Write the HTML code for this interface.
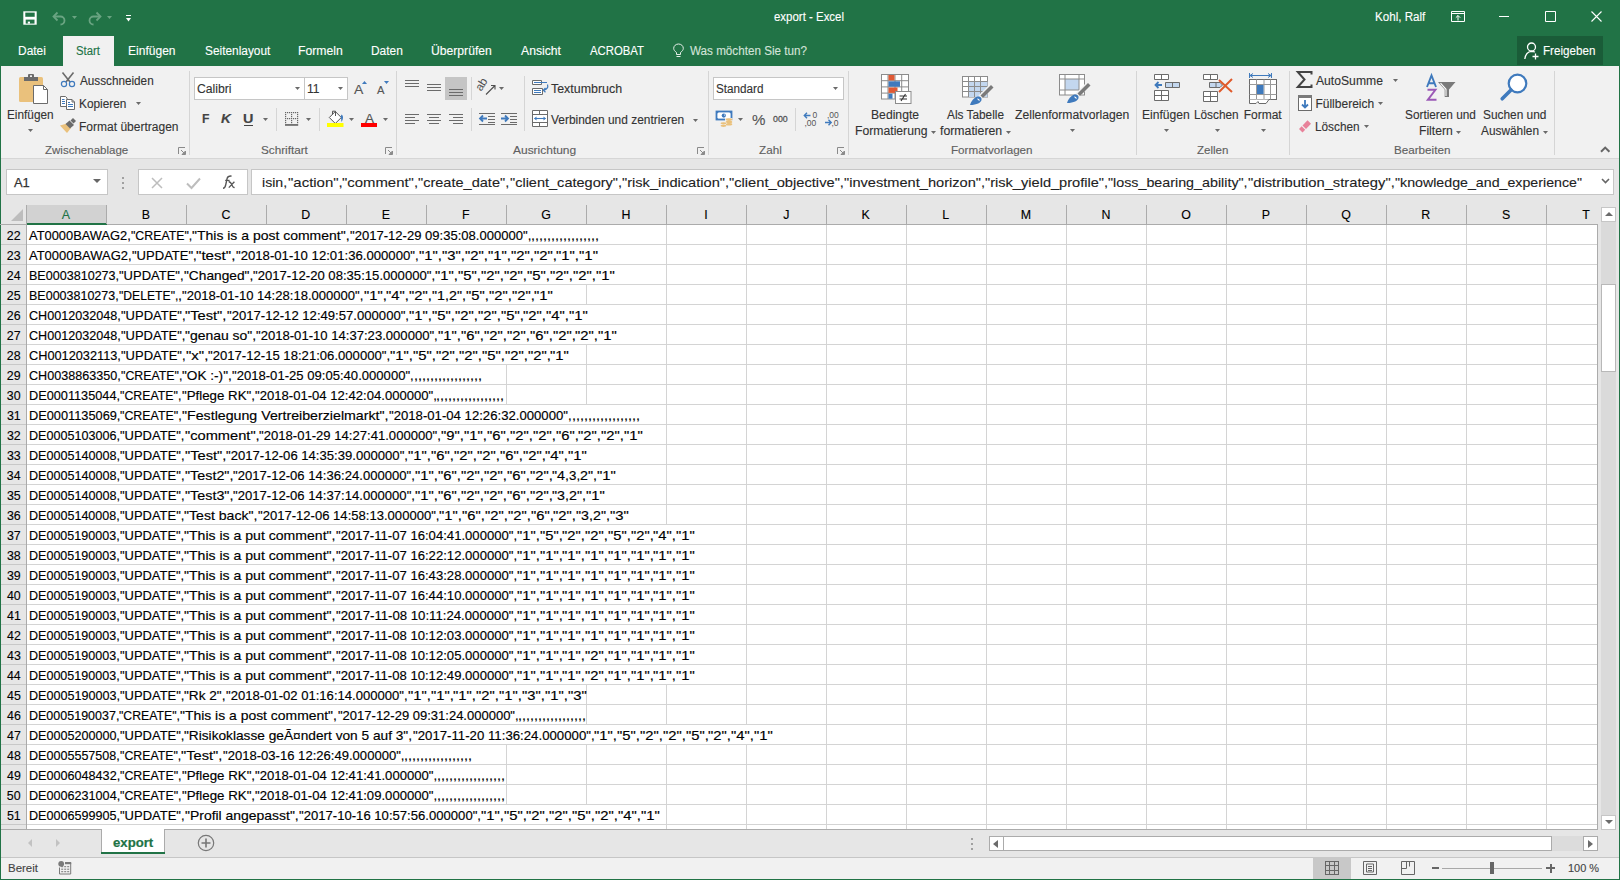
<!DOCTYPE html>
<html><head><meta charset="utf-8"><title>export - Excel</title>
<style>
html,body{margin:0;padding:0;}
body{width:1620px;height:880px;position:relative;overflow:hidden;background:#ffffff;font-family:'Liberation Sans', sans-serif;}
span{white-space:pre;transform-origin:0 0;}
svg{overflow:visible;}
</style></head><body>
<div style="position:absolute;left:0px;top:0px;width:1620px;height:66px;background:#217346;"></div>
<div style="position:absolute;left:1px;top:66px;width:1618px;height:92px;background:#f1f1f1;"></div>
<div style="position:absolute;left:1px;top:158px;width:1618px;height:1px;background:#d6d6d6;"></div>
<div style="position:absolute;left:1px;top:159px;width:1618px;height:46px;background:#e6e6e6;"></div>
<div style="position:absolute;left:0px;top:205px;width:1620px;height:675px;background:#e6e6e6;"></div>
<div style="position:absolute;left:27px;top:225px;width:1570px;height:604px;background:#ffffff;"></div>
<div style="position:absolute;left:0px;top:0px;width:1px;height:880px;background:#217346;"></div>
<div style="position:absolute;left:1619px;top:0px;width:1px;height:880px;background:#217346;"></div>
<div style="position:absolute;left:0px;top:879px;width:1620px;height:1px;background:#217346;"></div>
<span style="position:absolute;left:774.04px;top:11.00px;font-size:12px;line-height:12px;color:#ffffff;transform:scaleX(0.9544);-webkit-text-stroke:0.12px #ffffff;">export - Excel</span>
<span style="position:absolute;left:1374.69px;top:11.00px;font-size:12px;line-height:12px;color:#ffffff;transform:scaleX(0.9662);-webkit-text-stroke:0.12px #ffffff;">Kohl, Ralf</span>
<div style="position:absolute;left:63px;top:36px;width:51px;height:30px;background:#f1f1f1;"></div>
<span style="position:absolute;left:17.57px;top:45.00px;font-size:12.5px;line-height:12.5px;color:#ffffff;transform:scaleX(0.9569);-webkit-text-stroke:0.12px #ffffff;">Datei</span>
<span style="position:absolute;left:75.85px;top:45.00px;font-size:12.5px;line-height:12.5px;color:#217346;transform:scaleX(0.9060);-webkit-text-stroke:0.12px #217346;">Start</span>
<span style="position:absolute;left:128.46px;top:45.00px;font-size:12.5px;line-height:12.5px;color:#ffffff;transform:scaleX(0.9629);-webkit-text-stroke:0.12px #ffffff;">Einfügen</span>
<span style="position:absolute;left:204.63px;top:45.00px;font-size:12.5px;line-height:12.5px;color:#ffffff;transform:scaleX(0.9496);-webkit-text-stroke:0.12px #ffffff;">Seitenlayout</span>
<span style="position:absolute;left:298.34px;top:45.00px;font-size:12.5px;line-height:12.5px;color:#ffffff;transform:scaleX(0.9781);-webkit-text-stroke:0.12px #ffffff;">Formeln</span>
<span style="position:absolute;left:371.37px;top:45.00px;font-size:12.5px;line-height:12.5px;color:#ffffff;transform:scaleX(0.9534);-webkit-text-stroke:0.12px #ffffff;">Daten</span>
<span style="position:absolute;left:431.44px;top:45.00px;font-size:12.5px;line-height:12.5px;color:#ffffff;transform:scaleX(0.9729);-webkit-text-stroke:0.12px #ffffff;">Überprüfen</span>
<span style="position:absolute;left:521.00px;top:45.00px;font-size:12.5px;line-height:12.5px;color:#ffffff;transform:scaleX(0.9748);-webkit-text-stroke:0.12px #ffffff;">Ansicht</span>
<span style="position:absolute;left:590.00px;top:45.00px;font-size:12.5px;line-height:12.5px;color:#ffffff;transform:scaleX(0.9058);-webkit-text-stroke:0.12px #ffffff;">ACROBAT</span>
<span style="position:absolute;left:690.20px;top:45.00px;font-size:12.5px;line-height:12.5px;color:#d3e3d9;transform:scaleX(0.9337);-webkit-text-stroke:0.12px #d3e3d9;">Was möchten Sie tun?</span>
<div style="position:absolute;left:1517px;top:36px;width:86px;height:29px;background:#1a5c38;"></div>
<span style="position:absolute;left:1542.59px;top:45.00px;font-size:12.5px;line-height:12.5px;color:#ffffff;transform:scaleX(0.9303);-webkit-text-stroke:0.12px #ffffff;">Freigeben</span>
<div style="position:absolute;left:189px;top:71px;width:1px;height:84px;background:#d5d5d5;"></div>
<div style="position:absolute;left:396px;top:71px;width:1px;height:84px;background:#d5d5d5;"></div>
<div style="position:absolute;left:708px;top:71px;width:1px;height:84px;background:#d5d5d5;"></div>
<div style="position:absolute;left:848px;top:71px;width:1px;height:84px;background:#d5d5d5;"></div>
<div style="position:absolute;left:1136px;top:71px;width:1px;height:84px;background:#d5d5d5;"></div>
<div style="position:absolute;left:1289px;top:71px;width:1px;height:84px;background:#d5d5d5;"></div>
<div style="position:absolute;left:1554px;top:71px;width:1px;height:84px;background:#d5d5d5;"></div>
<span style="position:absolute;left:44.64px;top:145.00px;font-size:11px;line-height:11px;color:#606060;transform:scaleX(1.0470);-webkit-text-stroke:0.12px #606060;">Zwischenablage</span>
<span style="position:absolute;left:261.13px;top:145.00px;font-size:11px;line-height:11px;color:#606060;transform:scaleX(1.0640);-webkit-text-stroke:0.12px #606060;">Schriftart</span>
<span style="position:absolute;left:513.00px;top:145.00px;font-size:11px;line-height:11px;color:#606060;transform:scaleX(1.0875);-webkit-text-stroke:0.12px #606060;">Ausrichtung</span>
<span style="position:absolute;left:758.63px;top:145.00px;font-size:11px;line-height:11px;color:#606060;transform:scaleX(1.0625);-webkit-text-stroke:0.12px #606060;">Zahl</span>
<span style="position:absolute;left:951.49px;top:145.00px;font-size:11px;line-height:11px;color:#606060;transform:scaleX(1.0588);-webkit-text-stroke:0.12px #606060;">Formatvorlagen</span>
<span style="position:absolute;left:1196.84px;top:145.00px;font-size:11px;line-height:11px;color:#606060;transform:scaleX(1.0483);-webkit-text-stroke:0.12px #606060;">Zellen</span>
<span style="position:absolute;left:1393.69px;top:145.00px;font-size:11px;line-height:11px;color:#606060;transform:scaleX(1.0594);-webkit-text-stroke:0.12px #606060;">Bearbeiten</span>
<span style="position:absolute;left:7.08px;top:109.00px;font-size:12px;line-height:12px;color:#333333;transform:scaleX(0.9834);-webkit-text-stroke:0.12px #333333;">Einfügen</span>
<span style="position:absolute;left:79.50px;top:75.00px;font-size:12px;line-height:12px;color:#333333;transform:scaleX(0.9771);-webkit-text-stroke:0.12px #333333;">Ausschneiden</span>
<span style="position:absolute;left:78.58px;top:98.00px;font-size:12px;line-height:12px;color:#333333;transform:scaleX(0.9866);-webkit-text-stroke:0.12px #333333;">Kopieren</span>
<span style="position:absolute;left:78.56px;top:121.00px;font-size:12px;line-height:12px;color:#333333;transform:scaleX(1.0013);-webkit-text-stroke:0.12px #333333;">Format übertragen</span>
<div style="position:absolute;left:194px;top:77px;width:111px;height:23px;box-sizing:border-box;border:1px solid #c6c6c6;background:#ffffff;"></div>
<div style="position:absolute;left:304px;top:77px;width:44px;height:23px;box-sizing:border-box;border:1px solid #c6c6c6;background:#ffffff;"></div>
<span style="position:absolute;left:197.13px;top:83.00px;font-size:12px;line-height:12px;color:#333333;transform:scaleX(1.0167);-webkit-text-stroke:0.12px #333333;">Calibri</span>
<span style="position:absolute;left:306.74px;top:83.00px;font-size:12px;line-height:12px;color:#333333;transform:scaleX(1.0071);-webkit-text-stroke:0.12px #333333;">11</span>
<span style="position:absolute;left:551.31px;top:83.00px;font-size:12px;line-height:12px;color:#333333;transform:scaleX(1.0349);-webkit-text-stroke:0.12px #333333;">Textumbruch</span>
<span style="position:absolute;left:551.00px;top:114.00px;font-size:12px;line-height:12px;color:#333333;transform:scaleX(0.9931);-webkit-text-stroke:0.12px #333333;">Verbinden und zentrieren</span>
<div style="position:absolute;left:713px;top:77px;width:131px;height:23px;box-sizing:border-box;border:1px solid #c6c6c6;background:#ffffff;"></div>
<span style="position:absolute;left:715.93px;top:83.00px;font-size:12px;line-height:12px;color:#333333;transform:scaleX(0.9758);-webkit-text-stroke:0.12px #333333;">Standard</span>
<span style="position:absolute;left:871.45px;top:109.00px;font-size:12px;line-height:12px;color:#333333;transform:scaleX(1.0142);-webkit-text-stroke:0.12px #333333;">Bedingte</span>
<span style="position:absolute;left:854.65px;top:125.00px;font-size:12px;line-height:12px;color:#333333;transform:scaleX(1.0165);-webkit-text-stroke:0.12px #333333;">Formatierung</span>
<span style="position:absolute;left:947.20px;top:109.00px;font-size:12px;line-height:12px;color:#333333;transform:scaleX(0.9853);-webkit-text-stroke:0.12px #333333;">Als Tabelle</span>
<span style="position:absolute;left:940.00px;top:125.00px;font-size:12px;line-height:12px;color:#333333;transform:scaleX(1.0247);-webkit-text-stroke:0.12px #333333;">formatieren</span>
<span style="position:absolute;left:1014.62px;top:109.00px;font-size:12px;line-height:12px;color:#333333;transform:scaleX(1.0146);-webkit-text-stroke:0.12px #333333;">Zellenformatvorlagen</span>
<span style="position:absolute;left:1142.46px;top:109.00px;font-size:12px;line-height:12px;color:#333333;transform:scaleX(1.0074);-webkit-text-stroke:0.12px #333333;">Einfügen</span>
<span style="position:absolute;left:1194.48px;top:109.00px;font-size:12px;line-height:12px;color:#333333;transform:scaleX(0.9827);-webkit-text-stroke:0.12px #333333;">Löschen</span>
<span style="position:absolute;left:1243.66px;top:109.00px;font-size:12px;line-height:12px;color:#333333;-webkit-text-stroke:0.12px #333333;">Format</span>
<span style="position:absolute;left:1316.40px;top:75.00px;font-size:12px;line-height:12px;color:#333333;transform:scaleX(1.0131);-webkit-text-stroke:0.12px #333333;">AutoSumme</span>
<span style="position:absolute;left:1315.46px;top:98.00px;font-size:12px;line-height:12px;color:#333333;-webkit-text-stroke:0.12px #333333;">Füllbereich</span>
<span style="position:absolute;left:1315.48px;top:121.00px;font-size:12px;line-height:12px;color:#333333;transform:scaleX(0.9827);-webkit-text-stroke:0.12px #333333;">Löschen</span>
<span style="position:absolute;left:1404.93px;top:109.00px;font-size:12px;line-height:12px;color:#333333;transform:scaleX(0.9845);-webkit-text-stroke:0.12px #333333;">Sortieren und</span>
<span style="position:absolute;left:1419.45px;top:125.00px;font-size:12px;line-height:12px;color:#333333;transform:scaleX(1.0117);-webkit-text-stroke:0.12px #333333;">Filtern</span>
<span style="position:absolute;left:1482.73px;top:109.00px;font-size:12px;line-height:12px;color:#333333;transform:scaleX(0.9904);-webkit-text-stroke:0.12px #333333;">Suchen und</span>
<span style="position:absolute;left:1481.00px;top:125.00px;font-size:12px;line-height:12px;color:#333333;transform:scaleX(0.9874);-webkit-text-stroke:0.12px #333333;">Auswählen</span>
<div style="position:absolute;left:6px;top:169px;width:102px;height:26px;box-sizing:border-box;border:1px solid #c6c6c6;background:#ffffff;"></div>
<span style="position:absolute;left:13.60px;top:177.00px;font-size:12.4px;line-height:12.4px;color:#333333;transform:scaleX(1.0433);-webkit-text-stroke:0.25px #333333;">A1</span>
<div style="position:absolute;left:138px;top:169px;width:110px;height:26px;box-sizing:border-box;border:1px solid #c6c6c6;background:#ffffff;"></div>
<div style="position:absolute;left:251px;top:169px;width:1363px;height:26px;box-sizing:border-box;border:1px solid #c6c6c6;background:#ffffff;"></div>
<span style="position:absolute;left:262.30px;top:177.00px;font-size:12.4px;line-height:12.4px;color:#222222;transform:scaleX(1.1430);-webkit-text-stroke:0.1px #222222;">isin,</span>
<span style="position:absolute;left:287.50px;top:177.00px;font-size:12.4px;line-height:12.4px;color:#222222;transform:scaleX(1.2083);-webkit-text-stroke:0.1px #222222;">&quot;action&quot;,</span>
<span style="position:absolute;left:342.28px;top:177.00px;font-size:12.4px;line-height:12.4px;color:#222222;transform:scaleX(1.2031);-webkit-text-stroke:0.1px #222222;">&quot;comment&quot;,</span>
<span style="position:absolute;left:418.37px;top:177.00px;font-size:12.4px;line-height:12.4px;color:#222222;transform:scaleX(1.1736);-webkit-text-stroke:0.1px #222222;">&quot;create_date&quot;,</span>
<span style="position:absolute;left:509.61px;top:177.00px;font-size:12.4px;line-height:12.4px;color:#222222;transform:scaleX(1.1717);-webkit-text-stroke:0.1px #222222;">&quot;client_category&quot;,</span>
<span style="position:absolute;left:621.68px;top:177.00px;font-size:12.4px;line-height:12.4px;color:#222222;transform:scaleX(1.1797);-webkit-text-stroke:0.1px #222222;">&quot;risk_indication&quot;,</span>
<span style="position:absolute;left:728.82px;top:177.00px;font-size:12.4px;line-height:12.4px;color:#222222;transform:scaleX(1.1855);-webkit-text-stroke:0.1px #222222;">&quot;client_objective&quot;,</span>
<span style="position:absolute;left:843.85px;top:177.00px;font-size:12.4px;line-height:12.4px;color:#222222;transform:scaleX(1.1784);-webkit-text-stroke:0.1px #222222;">&quot;investment_horizon&quot;,</span>
<span style="position:absolute;left:985.00px;top:177.00px;font-size:12.4px;line-height:12.4px;color:#222222;transform:scaleX(1.1775);-webkit-text-stroke:0.1px #222222;">&quot;risk_yield_profile&quot;,</span>
<span style="position:absolute;left:1108.16px;top:177.00px;font-size:12.4px;line-height:12.4px;color:#222222;transform:scaleX(1.1528);-webkit-text-stroke:0.1px #222222;">&quot;loss_bearing_ability&quot;,</span>
<span style="position:absolute;left:1247.84px;top:177.00px;font-size:12.4px;line-height:12.4px;color:#222222;transform:scaleX(1.1918);-webkit-text-stroke:0.1px #222222;">&quot;distribution_strategy&quot;,</span>
<span style="position:absolute;left:1394.69px;top:177.00px;font-size:12.4px;line-height:12.4px;color:#222222;transform:scaleX(1.1463);-webkit-text-stroke:0.1px #222222;">&quot;knowledge_and_experience&quot;</span>
<div style="position:absolute;left:27px;top:205px;width:79px;height:19px;background:#d2d2d2;"></div>
<div style="position:absolute;left:0px;top:224px;width:1597px;height:1px;background:#ababab;"></div>
<div style="position:absolute;left:26px;top:223px;width:81px;height:2px;background:#217346;"></div>
<span style="position:absolute;left:61.83px;top:209.00px;font-size:12.4px;line-height:12.4px;color:#217346;-webkit-text-stroke:0.12px #217346;">A</span>
<span style="position:absolute;left:141.64px;top:209.00px;font-size:12.4px;line-height:12.4px;color:#000000;-webkit-text-stroke:0.12px #000000;">B</span>
<span style="position:absolute;left:221.45px;top:209.00px;font-size:12.4px;line-height:12.4px;color:#000000;-webkit-text-stroke:0.12px #000000;">C</span>
<span style="position:absolute;left:301.25px;top:209.00px;font-size:12.4px;line-height:12.4px;color:#000000;-webkit-text-stroke:0.12px #000000;">D</span>
<span style="position:absolute;left:381.64px;top:209.00px;font-size:12.4px;line-height:12.4px;color:#000000;-webkit-text-stroke:0.12px #000000;">E</span>
<span style="position:absolute;left:461.93px;top:209.00px;font-size:12.4px;line-height:12.4px;color:#000000;-webkit-text-stroke:0.12px #000000;">F</span>
<span style="position:absolute;left:541.35px;top:209.00px;font-size:12.4px;line-height:12.4px;color:#000000;-webkit-text-stroke:0.12px #000000;">G</span>
<span style="position:absolute;left:621.54px;top:209.00px;font-size:12.4px;line-height:12.4px;color:#000000;-webkit-text-stroke:0.12px #000000;">H</span>
<span style="position:absolute;left:704.35px;top:209.00px;font-size:12.4px;line-height:12.4px;color:#000000;-webkit-text-stroke:0.12px #000000;">I</span>
<span style="position:absolute;left:783.19px;top:209.00px;font-size:12.4px;line-height:12.4px;color:#000000;-webkit-text-stroke:0.12px #000000;">J</span>
<span style="position:absolute;left:861.45px;top:209.00px;font-size:12.4px;line-height:12.4px;color:#000000;-webkit-text-stroke:0.12px #000000;">K</span>
<span style="position:absolute;left:942.22px;top:209.00px;font-size:12.4px;line-height:12.4px;color:#000000;-webkit-text-stroke:0.12px #000000;">L</span>
<span style="position:absolute;left:1020.77px;top:209.00px;font-size:12.4px;line-height:12.4px;color:#000000;-webkit-text-stroke:0.12px #000000;">M</span>
<span style="position:absolute;left:1101.54px;top:209.00px;font-size:12.4px;line-height:12.4px;color:#000000;-webkit-text-stroke:0.12px #000000;">N</span>
<span style="position:absolute;left:1181.16px;top:209.00px;font-size:12.4px;line-height:12.4px;color:#000000;-webkit-text-stroke:0.12px #000000;">O</span>
<span style="position:absolute;left:1261.64px;top:209.00px;font-size:12.4px;line-height:12.4px;color:#000000;-webkit-text-stroke:0.12px #000000;">P</span>
<span style="position:absolute;left:1341.16px;top:209.00px;font-size:12.4px;line-height:12.4px;color:#000000;-webkit-text-stroke:0.12px #000000;">Q</span>
<span style="position:absolute;left:1421.25px;top:209.00px;font-size:12.4px;line-height:12.4px;color:#000000;-webkit-text-stroke:0.12px #000000;">R</span>
<span style="position:absolute;left:1501.93px;top:209.00px;font-size:12.4px;line-height:12.4px;color:#000000;-webkit-text-stroke:0.12px #000000;">S</span>
<span style="position:absolute;left:1582.22px;top:209.00px;font-size:12.4px;line-height:12.4px;color:#000000;-webkit-text-stroke:0.12px #000000;">T</span>
<div style="position:absolute;left:106px;top:205px;width:1px;height:19px;background:#ababab;"></div>
<div style="position:absolute;left:186px;top:205px;width:1px;height:19px;background:#ababab;"></div>
<div style="position:absolute;left:266px;top:205px;width:1px;height:19px;background:#ababab;"></div>
<div style="position:absolute;left:346px;top:205px;width:1px;height:19px;background:#ababab;"></div>
<div style="position:absolute;left:426px;top:205px;width:1px;height:19px;background:#ababab;"></div>
<div style="position:absolute;left:506px;top:205px;width:1px;height:19px;background:#ababab;"></div>
<div style="position:absolute;left:586px;top:205px;width:1px;height:19px;background:#ababab;"></div>
<div style="position:absolute;left:666px;top:205px;width:1px;height:19px;background:#ababab;"></div>
<div style="position:absolute;left:746px;top:205px;width:1px;height:19px;background:#ababab;"></div>
<div style="position:absolute;left:826px;top:205px;width:1px;height:19px;background:#ababab;"></div>
<div style="position:absolute;left:906px;top:205px;width:1px;height:19px;background:#ababab;"></div>
<div style="position:absolute;left:986px;top:205px;width:1px;height:19px;background:#ababab;"></div>
<div style="position:absolute;left:1066px;top:205px;width:1px;height:19px;background:#ababab;"></div>
<div style="position:absolute;left:1146px;top:205px;width:1px;height:19px;background:#ababab;"></div>
<div style="position:absolute;left:1226px;top:205px;width:1px;height:19px;background:#ababab;"></div>
<div style="position:absolute;left:1306px;top:205px;width:1px;height:19px;background:#ababab;"></div>
<div style="position:absolute;left:1386px;top:205px;width:1px;height:19px;background:#ababab;"></div>
<div style="position:absolute;left:1466px;top:205px;width:1px;height:19px;background:#ababab;"></div>
<div style="position:absolute;left:1546px;top:205px;width:1px;height:19px;background:#ababab;"></div>
<div style="position:absolute;left:26px;top:205px;width:1px;height:624px;background:#ababab;"></div>
<div style="position:absolute;left:1px;top:244px;width:25px;height:1px;background:#c8c8c8;"></div>
<span style="position:absolute;left:6.86px;top:230.00px;font-size:12.4px;line-height:12.4px;color:#000000;-webkit-text-stroke:0.12px #000000;">22</span>
<div style="position:absolute;left:27px;top:244px;width:1570px;height:1px;background:#d4d4d4;"></div>
<div style="position:absolute;left:666px;top:225px;width:1px;height:19px;background:#d4d4d4;"></div>
<div style="position:absolute;left:746px;top:225px;width:1px;height:19px;background:#d4d4d4;"></div>
<div style="position:absolute;left:826px;top:225px;width:1px;height:19px;background:#d4d4d4;"></div>
<div style="position:absolute;left:906px;top:225px;width:1px;height:19px;background:#d4d4d4;"></div>
<div style="position:absolute;left:986px;top:225px;width:1px;height:19px;background:#d4d4d4;"></div>
<div style="position:absolute;left:1066px;top:225px;width:1px;height:19px;background:#d4d4d4;"></div>
<div style="position:absolute;left:1146px;top:225px;width:1px;height:19px;background:#d4d4d4;"></div>
<div style="position:absolute;left:1226px;top:225px;width:1px;height:19px;background:#d4d4d4;"></div>
<div style="position:absolute;left:1306px;top:225px;width:1px;height:19px;background:#d4d4d4;"></div>
<div style="position:absolute;left:1386px;top:225px;width:1px;height:19px;background:#d4d4d4;"></div>
<div style="position:absolute;left:1466px;top:225px;width:1px;height:19px;background:#d4d4d4;"></div>
<div style="position:absolute;left:1546px;top:225px;width:1px;height:19px;background:#d4d4d4;"></div>
<div style="position:absolute;left:1px;top:264px;width:25px;height:1px;background:#c8c8c8;"></div>
<span style="position:absolute;left:6.86px;top:250.00px;font-size:12.4px;line-height:12.4px;color:#000000;-webkit-text-stroke:0.12px #000000;">23</span>
<div style="position:absolute;left:27px;top:264px;width:1570px;height:1px;background:#d4d4d4;"></div>
<div style="position:absolute;left:666px;top:245px;width:1px;height:19px;background:#d4d4d4;"></div>
<div style="position:absolute;left:746px;top:245px;width:1px;height:19px;background:#d4d4d4;"></div>
<div style="position:absolute;left:826px;top:245px;width:1px;height:19px;background:#d4d4d4;"></div>
<div style="position:absolute;left:906px;top:245px;width:1px;height:19px;background:#d4d4d4;"></div>
<div style="position:absolute;left:986px;top:245px;width:1px;height:19px;background:#d4d4d4;"></div>
<div style="position:absolute;left:1066px;top:245px;width:1px;height:19px;background:#d4d4d4;"></div>
<div style="position:absolute;left:1146px;top:245px;width:1px;height:19px;background:#d4d4d4;"></div>
<div style="position:absolute;left:1226px;top:245px;width:1px;height:19px;background:#d4d4d4;"></div>
<div style="position:absolute;left:1306px;top:245px;width:1px;height:19px;background:#d4d4d4;"></div>
<div style="position:absolute;left:1386px;top:245px;width:1px;height:19px;background:#d4d4d4;"></div>
<div style="position:absolute;left:1466px;top:245px;width:1px;height:19px;background:#d4d4d4;"></div>
<div style="position:absolute;left:1546px;top:245px;width:1px;height:19px;background:#d4d4d4;"></div>
<div style="position:absolute;left:1px;top:284px;width:25px;height:1px;background:#c8c8c8;"></div>
<span style="position:absolute;left:6.77px;top:270.00px;font-size:12.4px;line-height:12.4px;color:#000000;-webkit-text-stroke:0.12px #000000;">24</span>
<div style="position:absolute;left:27px;top:284px;width:1570px;height:1px;background:#d4d4d4;"></div>
<div style="position:absolute;left:666px;top:265px;width:1px;height:19px;background:#d4d4d4;"></div>
<div style="position:absolute;left:746px;top:265px;width:1px;height:19px;background:#d4d4d4;"></div>
<div style="position:absolute;left:826px;top:265px;width:1px;height:19px;background:#d4d4d4;"></div>
<div style="position:absolute;left:906px;top:265px;width:1px;height:19px;background:#d4d4d4;"></div>
<div style="position:absolute;left:986px;top:265px;width:1px;height:19px;background:#d4d4d4;"></div>
<div style="position:absolute;left:1066px;top:265px;width:1px;height:19px;background:#d4d4d4;"></div>
<div style="position:absolute;left:1146px;top:265px;width:1px;height:19px;background:#d4d4d4;"></div>
<div style="position:absolute;left:1226px;top:265px;width:1px;height:19px;background:#d4d4d4;"></div>
<div style="position:absolute;left:1306px;top:265px;width:1px;height:19px;background:#d4d4d4;"></div>
<div style="position:absolute;left:1386px;top:265px;width:1px;height:19px;background:#d4d4d4;"></div>
<div style="position:absolute;left:1466px;top:265px;width:1px;height:19px;background:#d4d4d4;"></div>
<div style="position:absolute;left:1546px;top:265px;width:1px;height:19px;background:#d4d4d4;"></div>
<div style="position:absolute;left:1px;top:304px;width:25px;height:1px;background:#c8c8c8;"></div>
<span style="position:absolute;left:6.86px;top:290.00px;font-size:12.4px;line-height:12.4px;color:#000000;-webkit-text-stroke:0.12px #000000;">25</span>
<div style="position:absolute;left:27px;top:304px;width:1570px;height:1px;background:#d4d4d4;"></div>
<div style="position:absolute;left:586px;top:285px;width:1px;height:19px;background:#d4d4d4;"></div>
<div style="position:absolute;left:666px;top:285px;width:1px;height:19px;background:#d4d4d4;"></div>
<div style="position:absolute;left:746px;top:285px;width:1px;height:19px;background:#d4d4d4;"></div>
<div style="position:absolute;left:826px;top:285px;width:1px;height:19px;background:#d4d4d4;"></div>
<div style="position:absolute;left:906px;top:285px;width:1px;height:19px;background:#d4d4d4;"></div>
<div style="position:absolute;left:986px;top:285px;width:1px;height:19px;background:#d4d4d4;"></div>
<div style="position:absolute;left:1066px;top:285px;width:1px;height:19px;background:#d4d4d4;"></div>
<div style="position:absolute;left:1146px;top:285px;width:1px;height:19px;background:#d4d4d4;"></div>
<div style="position:absolute;left:1226px;top:285px;width:1px;height:19px;background:#d4d4d4;"></div>
<div style="position:absolute;left:1306px;top:285px;width:1px;height:19px;background:#d4d4d4;"></div>
<div style="position:absolute;left:1386px;top:285px;width:1px;height:19px;background:#d4d4d4;"></div>
<div style="position:absolute;left:1466px;top:285px;width:1px;height:19px;background:#d4d4d4;"></div>
<div style="position:absolute;left:1546px;top:285px;width:1px;height:19px;background:#d4d4d4;"></div>
<div style="position:absolute;left:1px;top:324px;width:25px;height:1px;background:#c8c8c8;"></div>
<span style="position:absolute;left:6.86px;top:310.00px;font-size:12.4px;line-height:12.4px;color:#000000;-webkit-text-stroke:0.12px #000000;">26</span>
<div style="position:absolute;left:27px;top:324px;width:1570px;height:1px;background:#d4d4d4;"></div>
<div style="position:absolute;left:666px;top:305px;width:1px;height:19px;background:#d4d4d4;"></div>
<div style="position:absolute;left:746px;top:305px;width:1px;height:19px;background:#d4d4d4;"></div>
<div style="position:absolute;left:826px;top:305px;width:1px;height:19px;background:#d4d4d4;"></div>
<div style="position:absolute;left:906px;top:305px;width:1px;height:19px;background:#d4d4d4;"></div>
<div style="position:absolute;left:986px;top:305px;width:1px;height:19px;background:#d4d4d4;"></div>
<div style="position:absolute;left:1066px;top:305px;width:1px;height:19px;background:#d4d4d4;"></div>
<div style="position:absolute;left:1146px;top:305px;width:1px;height:19px;background:#d4d4d4;"></div>
<div style="position:absolute;left:1226px;top:305px;width:1px;height:19px;background:#d4d4d4;"></div>
<div style="position:absolute;left:1306px;top:305px;width:1px;height:19px;background:#d4d4d4;"></div>
<div style="position:absolute;left:1386px;top:305px;width:1px;height:19px;background:#d4d4d4;"></div>
<div style="position:absolute;left:1466px;top:305px;width:1px;height:19px;background:#d4d4d4;"></div>
<div style="position:absolute;left:1546px;top:305px;width:1px;height:19px;background:#d4d4d4;"></div>
<div style="position:absolute;left:1px;top:344px;width:25px;height:1px;background:#c8c8c8;"></div>
<span style="position:absolute;left:6.86px;top:330.00px;font-size:12.4px;line-height:12.4px;color:#000000;-webkit-text-stroke:0.12px #000000;">27</span>
<div style="position:absolute;left:27px;top:344px;width:1570px;height:1px;background:#d4d4d4;"></div>
<div style="position:absolute;left:666px;top:325px;width:1px;height:19px;background:#d4d4d4;"></div>
<div style="position:absolute;left:746px;top:325px;width:1px;height:19px;background:#d4d4d4;"></div>
<div style="position:absolute;left:826px;top:325px;width:1px;height:19px;background:#d4d4d4;"></div>
<div style="position:absolute;left:906px;top:325px;width:1px;height:19px;background:#d4d4d4;"></div>
<div style="position:absolute;left:986px;top:325px;width:1px;height:19px;background:#d4d4d4;"></div>
<div style="position:absolute;left:1066px;top:325px;width:1px;height:19px;background:#d4d4d4;"></div>
<div style="position:absolute;left:1146px;top:325px;width:1px;height:19px;background:#d4d4d4;"></div>
<div style="position:absolute;left:1226px;top:325px;width:1px;height:19px;background:#d4d4d4;"></div>
<div style="position:absolute;left:1306px;top:325px;width:1px;height:19px;background:#d4d4d4;"></div>
<div style="position:absolute;left:1386px;top:325px;width:1px;height:19px;background:#d4d4d4;"></div>
<div style="position:absolute;left:1466px;top:325px;width:1px;height:19px;background:#d4d4d4;"></div>
<div style="position:absolute;left:1546px;top:325px;width:1px;height:19px;background:#d4d4d4;"></div>
<div style="position:absolute;left:1px;top:364px;width:25px;height:1px;background:#c8c8c8;"></div>
<span style="position:absolute;left:6.86px;top:350.00px;font-size:12.4px;line-height:12.4px;color:#000000;-webkit-text-stroke:0.12px #000000;">28</span>
<div style="position:absolute;left:27px;top:364px;width:1570px;height:1px;background:#d4d4d4;"></div>
<div style="position:absolute;left:586px;top:345px;width:1px;height:19px;background:#d4d4d4;"></div>
<div style="position:absolute;left:666px;top:345px;width:1px;height:19px;background:#d4d4d4;"></div>
<div style="position:absolute;left:746px;top:345px;width:1px;height:19px;background:#d4d4d4;"></div>
<div style="position:absolute;left:826px;top:345px;width:1px;height:19px;background:#d4d4d4;"></div>
<div style="position:absolute;left:906px;top:345px;width:1px;height:19px;background:#d4d4d4;"></div>
<div style="position:absolute;left:986px;top:345px;width:1px;height:19px;background:#d4d4d4;"></div>
<div style="position:absolute;left:1066px;top:345px;width:1px;height:19px;background:#d4d4d4;"></div>
<div style="position:absolute;left:1146px;top:345px;width:1px;height:19px;background:#d4d4d4;"></div>
<div style="position:absolute;left:1226px;top:345px;width:1px;height:19px;background:#d4d4d4;"></div>
<div style="position:absolute;left:1306px;top:345px;width:1px;height:19px;background:#d4d4d4;"></div>
<div style="position:absolute;left:1386px;top:345px;width:1px;height:19px;background:#d4d4d4;"></div>
<div style="position:absolute;left:1466px;top:345px;width:1px;height:19px;background:#d4d4d4;"></div>
<div style="position:absolute;left:1546px;top:345px;width:1px;height:19px;background:#d4d4d4;"></div>
<div style="position:absolute;left:1px;top:384px;width:25px;height:1px;background:#c8c8c8;"></div>
<span style="position:absolute;left:6.86px;top:370.00px;font-size:12.4px;line-height:12.4px;color:#000000;-webkit-text-stroke:0.12px #000000;">29</span>
<div style="position:absolute;left:27px;top:384px;width:1570px;height:1px;background:#d4d4d4;"></div>
<div style="position:absolute;left:506px;top:365px;width:1px;height:19px;background:#d4d4d4;"></div>
<div style="position:absolute;left:586px;top:365px;width:1px;height:19px;background:#d4d4d4;"></div>
<div style="position:absolute;left:666px;top:365px;width:1px;height:19px;background:#d4d4d4;"></div>
<div style="position:absolute;left:746px;top:365px;width:1px;height:19px;background:#d4d4d4;"></div>
<div style="position:absolute;left:826px;top:365px;width:1px;height:19px;background:#d4d4d4;"></div>
<div style="position:absolute;left:906px;top:365px;width:1px;height:19px;background:#d4d4d4;"></div>
<div style="position:absolute;left:986px;top:365px;width:1px;height:19px;background:#d4d4d4;"></div>
<div style="position:absolute;left:1066px;top:365px;width:1px;height:19px;background:#d4d4d4;"></div>
<div style="position:absolute;left:1146px;top:365px;width:1px;height:19px;background:#d4d4d4;"></div>
<div style="position:absolute;left:1226px;top:365px;width:1px;height:19px;background:#d4d4d4;"></div>
<div style="position:absolute;left:1306px;top:365px;width:1px;height:19px;background:#d4d4d4;"></div>
<div style="position:absolute;left:1386px;top:365px;width:1px;height:19px;background:#d4d4d4;"></div>
<div style="position:absolute;left:1466px;top:365px;width:1px;height:19px;background:#d4d4d4;"></div>
<div style="position:absolute;left:1546px;top:365px;width:1px;height:19px;background:#d4d4d4;"></div>
<div style="position:absolute;left:1px;top:404px;width:25px;height:1px;background:#c8c8c8;"></div>
<span style="position:absolute;left:6.86px;top:390.00px;font-size:12.4px;line-height:12.4px;color:#000000;-webkit-text-stroke:0.12px #000000;">30</span>
<div style="position:absolute;left:27px;top:404px;width:1570px;height:1px;background:#d4d4d4;"></div>
<div style="position:absolute;left:506px;top:385px;width:1px;height:19px;background:#d4d4d4;"></div>
<div style="position:absolute;left:586px;top:385px;width:1px;height:19px;background:#d4d4d4;"></div>
<div style="position:absolute;left:666px;top:385px;width:1px;height:19px;background:#d4d4d4;"></div>
<div style="position:absolute;left:746px;top:385px;width:1px;height:19px;background:#d4d4d4;"></div>
<div style="position:absolute;left:826px;top:385px;width:1px;height:19px;background:#d4d4d4;"></div>
<div style="position:absolute;left:906px;top:385px;width:1px;height:19px;background:#d4d4d4;"></div>
<div style="position:absolute;left:986px;top:385px;width:1px;height:19px;background:#d4d4d4;"></div>
<div style="position:absolute;left:1066px;top:385px;width:1px;height:19px;background:#d4d4d4;"></div>
<div style="position:absolute;left:1146px;top:385px;width:1px;height:19px;background:#d4d4d4;"></div>
<div style="position:absolute;left:1226px;top:385px;width:1px;height:19px;background:#d4d4d4;"></div>
<div style="position:absolute;left:1306px;top:385px;width:1px;height:19px;background:#d4d4d4;"></div>
<div style="position:absolute;left:1386px;top:385px;width:1px;height:19px;background:#d4d4d4;"></div>
<div style="position:absolute;left:1466px;top:385px;width:1px;height:19px;background:#d4d4d4;"></div>
<div style="position:absolute;left:1546px;top:385px;width:1px;height:19px;background:#d4d4d4;"></div>
<div style="position:absolute;left:1px;top:424px;width:25px;height:1px;background:#c8c8c8;"></div>
<span style="position:absolute;left:6.96px;top:410.00px;font-size:12.4px;line-height:12.4px;color:#000000;-webkit-text-stroke:0.12px #000000;">31</span>
<div style="position:absolute;left:27px;top:424px;width:1570px;height:1px;background:#d4d4d4;"></div>
<div style="position:absolute;left:666px;top:405px;width:1px;height:19px;background:#d4d4d4;"></div>
<div style="position:absolute;left:746px;top:405px;width:1px;height:19px;background:#d4d4d4;"></div>
<div style="position:absolute;left:826px;top:405px;width:1px;height:19px;background:#d4d4d4;"></div>
<div style="position:absolute;left:906px;top:405px;width:1px;height:19px;background:#d4d4d4;"></div>
<div style="position:absolute;left:986px;top:405px;width:1px;height:19px;background:#d4d4d4;"></div>
<div style="position:absolute;left:1066px;top:405px;width:1px;height:19px;background:#d4d4d4;"></div>
<div style="position:absolute;left:1146px;top:405px;width:1px;height:19px;background:#d4d4d4;"></div>
<div style="position:absolute;left:1226px;top:405px;width:1px;height:19px;background:#d4d4d4;"></div>
<div style="position:absolute;left:1306px;top:405px;width:1px;height:19px;background:#d4d4d4;"></div>
<div style="position:absolute;left:1386px;top:405px;width:1px;height:19px;background:#d4d4d4;"></div>
<div style="position:absolute;left:1466px;top:405px;width:1px;height:19px;background:#d4d4d4;"></div>
<div style="position:absolute;left:1546px;top:405px;width:1px;height:19px;background:#d4d4d4;"></div>
<div style="position:absolute;left:1px;top:444px;width:25px;height:1px;background:#c8c8c8;"></div>
<span style="position:absolute;left:6.96px;top:430.00px;font-size:12.4px;line-height:12.4px;color:#000000;-webkit-text-stroke:0.12px #000000;">32</span>
<div style="position:absolute;left:27px;top:444px;width:1570px;height:1px;background:#d4d4d4;"></div>
<div style="position:absolute;left:666px;top:425px;width:1px;height:19px;background:#d4d4d4;"></div>
<div style="position:absolute;left:746px;top:425px;width:1px;height:19px;background:#d4d4d4;"></div>
<div style="position:absolute;left:826px;top:425px;width:1px;height:19px;background:#d4d4d4;"></div>
<div style="position:absolute;left:906px;top:425px;width:1px;height:19px;background:#d4d4d4;"></div>
<div style="position:absolute;left:986px;top:425px;width:1px;height:19px;background:#d4d4d4;"></div>
<div style="position:absolute;left:1066px;top:425px;width:1px;height:19px;background:#d4d4d4;"></div>
<div style="position:absolute;left:1146px;top:425px;width:1px;height:19px;background:#d4d4d4;"></div>
<div style="position:absolute;left:1226px;top:425px;width:1px;height:19px;background:#d4d4d4;"></div>
<div style="position:absolute;left:1306px;top:425px;width:1px;height:19px;background:#d4d4d4;"></div>
<div style="position:absolute;left:1386px;top:425px;width:1px;height:19px;background:#d4d4d4;"></div>
<div style="position:absolute;left:1466px;top:425px;width:1px;height:19px;background:#d4d4d4;"></div>
<div style="position:absolute;left:1546px;top:425px;width:1px;height:19px;background:#d4d4d4;"></div>
<div style="position:absolute;left:1px;top:464px;width:25px;height:1px;background:#c8c8c8;"></div>
<span style="position:absolute;left:6.96px;top:450.00px;font-size:12.4px;line-height:12.4px;color:#000000;-webkit-text-stroke:0.12px #000000;">33</span>
<div style="position:absolute;left:27px;top:464px;width:1570px;height:1px;background:#d4d4d4;"></div>
<div style="position:absolute;left:666px;top:445px;width:1px;height:19px;background:#d4d4d4;"></div>
<div style="position:absolute;left:746px;top:445px;width:1px;height:19px;background:#d4d4d4;"></div>
<div style="position:absolute;left:826px;top:445px;width:1px;height:19px;background:#d4d4d4;"></div>
<div style="position:absolute;left:906px;top:445px;width:1px;height:19px;background:#d4d4d4;"></div>
<div style="position:absolute;left:986px;top:445px;width:1px;height:19px;background:#d4d4d4;"></div>
<div style="position:absolute;left:1066px;top:445px;width:1px;height:19px;background:#d4d4d4;"></div>
<div style="position:absolute;left:1146px;top:445px;width:1px;height:19px;background:#d4d4d4;"></div>
<div style="position:absolute;left:1226px;top:445px;width:1px;height:19px;background:#d4d4d4;"></div>
<div style="position:absolute;left:1306px;top:445px;width:1px;height:19px;background:#d4d4d4;"></div>
<div style="position:absolute;left:1386px;top:445px;width:1px;height:19px;background:#d4d4d4;"></div>
<div style="position:absolute;left:1466px;top:445px;width:1px;height:19px;background:#d4d4d4;"></div>
<div style="position:absolute;left:1546px;top:445px;width:1px;height:19px;background:#d4d4d4;"></div>
<div style="position:absolute;left:1px;top:484px;width:25px;height:1px;background:#c8c8c8;"></div>
<span style="position:absolute;left:6.86px;top:470.00px;font-size:12.4px;line-height:12.4px;color:#000000;-webkit-text-stroke:0.12px #000000;">34</span>
<div style="position:absolute;left:27px;top:484px;width:1570px;height:1px;background:#d4d4d4;"></div>
<div style="position:absolute;left:666px;top:465px;width:1px;height:19px;background:#d4d4d4;"></div>
<div style="position:absolute;left:746px;top:465px;width:1px;height:19px;background:#d4d4d4;"></div>
<div style="position:absolute;left:826px;top:465px;width:1px;height:19px;background:#d4d4d4;"></div>
<div style="position:absolute;left:906px;top:465px;width:1px;height:19px;background:#d4d4d4;"></div>
<div style="position:absolute;left:986px;top:465px;width:1px;height:19px;background:#d4d4d4;"></div>
<div style="position:absolute;left:1066px;top:465px;width:1px;height:19px;background:#d4d4d4;"></div>
<div style="position:absolute;left:1146px;top:465px;width:1px;height:19px;background:#d4d4d4;"></div>
<div style="position:absolute;left:1226px;top:465px;width:1px;height:19px;background:#d4d4d4;"></div>
<div style="position:absolute;left:1306px;top:465px;width:1px;height:19px;background:#d4d4d4;"></div>
<div style="position:absolute;left:1386px;top:465px;width:1px;height:19px;background:#d4d4d4;"></div>
<div style="position:absolute;left:1466px;top:465px;width:1px;height:19px;background:#d4d4d4;"></div>
<div style="position:absolute;left:1546px;top:465px;width:1px;height:19px;background:#d4d4d4;"></div>
<div style="position:absolute;left:1px;top:504px;width:25px;height:1px;background:#c8c8c8;"></div>
<span style="position:absolute;left:6.96px;top:490.00px;font-size:12.4px;line-height:12.4px;color:#000000;-webkit-text-stroke:0.12px #000000;">35</span>
<div style="position:absolute;left:27px;top:504px;width:1570px;height:1px;background:#d4d4d4;"></div>
<div style="position:absolute;left:666px;top:485px;width:1px;height:19px;background:#d4d4d4;"></div>
<div style="position:absolute;left:746px;top:485px;width:1px;height:19px;background:#d4d4d4;"></div>
<div style="position:absolute;left:826px;top:485px;width:1px;height:19px;background:#d4d4d4;"></div>
<div style="position:absolute;left:906px;top:485px;width:1px;height:19px;background:#d4d4d4;"></div>
<div style="position:absolute;left:986px;top:485px;width:1px;height:19px;background:#d4d4d4;"></div>
<div style="position:absolute;left:1066px;top:485px;width:1px;height:19px;background:#d4d4d4;"></div>
<div style="position:absolute;left:1146px;top:485px;width:1px;height:19px;background:#d4d4d4;"></div>
<div style="position:absolute;left:1226px;top:485px;width:1px;height:19px;background:#d4d4d4;"></div>
<div style="position:absolute;left:1306px;top:485px;width:1px;height:19px;background:#d4d4d4;"></div>
<div style="position:absolute;left:1386px;top:485px;width:1px;height:19px;background:#d4d4d4;"></div>
<div style="position:absolute;left:1466px;top:485px;width:1px;height:19px;background:#d4d4d4;"></div>
<div style="position:absolute;left:1546px;top:485px;width:1px;height:19px;background:#d4d4d4;"></div>
<div style="position:absolute;left:1px;top:524px;width:25px;height:1px;background:#c8c8c8;"></div>
<span style="position:absolute;left:6.96px;top:510.00px;font-size:12.4px;line-height:12.4px;color:#000000;-webkit-text-stroke:0.12px #000000;">36</span>
<div style="position:absolute;left:27px;top:524px;width:1570px;height:1px;background:#d4d4d4;"></div>
<div style="position:absolute;left:666px;top:505px;width:1px;height:19px;background:#d4d4d4;"></div>
<div style="position:absolute;left:746px;top:505px;width:1px;height:19px;background:#d4d4d4;"></div>
<div style="position:absolute;left:826px;top:505px;width:1px;height:19px;background:#d4d4d4;"></div>
<div style="position:absolute;left:906px;top:505px;width:1px;height:19px;background:#d4d4d4;"></div>
<div style="position:absolute;left:986px;top:505px;width:1px;height:19px;background:#d4d4d4;"></div>
<div style="position:absolute;left:1066px;top:505px;width:1px;height:19px;background:#d4d4d4;"></div>
<div style="position:absolute;left:1146px;top:505px;width:1px;height:19px;background:#d4d4d4;"></div>
<div style="position:absolute;left:1226px;top:505px;width:1px;height:19px;background:#d4d4d4;"></div>
<div style="position:absolute;left:1306px;top:505px;width:1px;height:19px;background:#d4d4d4;"></div>
<div style="position:absolute;left:1386px;top:505px;width:1px;height:19px;background:#d4d4d4;"></div>
<div style="position:absolute;left:1466px;top:505px;width:1px;height:19px;background:#d4d4d4;"></div>
<div style="position:absolute;left:1546px;top:505px;width:1px;height:19px;background:#d4d4d4;"></div>
<div style="position:absolute;left:1px;top:544px;width:25px;height:1px;background:#c8c8c8;"></div>
<span style="position:absolute;left:6.96px;top:530.00px;font-size:12.4px;line-height:12.4px;color:#000000;-webkit-text-stroke:0.12px #000000;">37</span>
<div style="position:absolute;left:27px;top:544px;width:1570px;height:1px;background:#d4d4d4;"></div>
<div style="position:absolute;left:746px;top:525px;width:1px;height:19px;background:#d4d4d4;"></div>
<div style="position:absolute;left:826px;top:525px;width:1px;height:19px;background:#d4d4d4;"></div>
<div style="position:absolute;left:906px;top:525px;width:1px;height:19px;background:#d4d4d4;"></div>
<div style="position:absolute;left:986px;top:525px;width:1px;height:19px;background:#d4d4d4;"></div>
<div style="position:absolute;left:1066px;top:525px;width:1px;height:19px;background:#d4d4d4;"></div>
<div style="position:absolute;left:1146px;top:525px;width:1px;height:19px;background:#d4d4d4;"></div>
<div style="position:absolute;left:1226px;top:525px;width:1px;height:19px;background:#d4d4d4;"></div>
<div style="position:absolute;left:1306px;top:525px;width:1px;height:19px;background:#d4d4d4;"></div>
<div style="position:absolute;left:1386px;top:525px;width:1px;height:19px;background:#d4d4d4;"></div>
<div style="position:absolute;left:1466px;top:525px;width:1px;height:19px;background:#d4d4d4;"></div>
<div style="position:absolute;left:1546px;top:525px;width:1px;height:19px;background:#d4d4d4;"></div>
<div style="position:absolute;left:1px;top:564px;width:25px;height:1px;background:#c8c8c8;"></div>
<span style="position:absolute;left:6.96px;top:550.00px;font-size:12.4px;line-height:12.4px;color:#000000;-webkit-text-stroke:0.12px #000000;">38</span>
<div style="position:absolute;left:27px;top:564px;width:1570px;height:1px;background:#d4d4d4;"></div>
<div style="position:absolute;left:746px;top:545px;width:1px;height:19px;background:#d4d4d4;"></div>
<div style="position:absolute;left:826px;top:545px;width:1px;height:19px;background:#d4d4d4;"></div>
<div style="position:absolute;left:906px;top:545px;width:1px;height:19px;background:#d4d4d4;"></div>
<div style="position:absolute;left:986px;top:545px;width:1px;height:19px;background:#d4d4d4;"></div>
<div style="position:absolute;left:1066px;top:545px;width:1px;height:19px;background:#d4d4d4;"></div>
<div style="position:absolute;left:1146px;top:545px;width:1px;height:19px;background:#d4d4d4;"></div>
<div style="position:absolute;left:1226px;top:545px;width:1px;height:19px;background:#d4d4d4;"></div>
<div style="position:absolute;left:1306px;top:545px;width:1px;height:19px;background:#d4d4d4;"></div>
<div style="position:absolute;left:1386px;top:545px;width:1px;height:19px;background:#d4d4d4;"></div>
<div style="position:absolute;left:1466px;top:545px;width:1px;height:19px;background:#d4d4d4;"></div>
<div style="position:absolute;left:1546px;top:545px;width:1px;height:19px;background:#d4d4d4;"></div>
<div style="position:absolute;left:1px;top:584px;width:25px;height:1px;background:#c8c8c8;"></div>
<span style="position:absolute;left:6.96px;top:570.00px;font-size:12.4px;line-height:12.4px;color:#000000;-webkit-text-stroke:0.12px #000000;">39</span>
<div style="position:absolute;left:27px;top:584px;width:1570px;height:1px;background:#d4d4d4;"></div>
<div style="position:absolute;left:746px;top:565px;width:1px;height:19px;background:#d4d4d4;"></div>
<div style="position:absolute;left:826px;top:565px;width:1px;height:19px;background:#d4d4d4;"></div>
<div style="position:absolute;left:906px;top:565px;width:1px;height:19px;background:#d4d4d4;"></div>
<div style="position:absolute;left:986px;top:565px;width:1px;height:19px;background:#d4d4d4;"></div>
<div style="position:absolute;left:1066px;top:565px;width:1px;height:19px;background:#d4d4d4;"></div>
<div style="position:absolute;left:1146px;top:565px;width:1px;height:19px;background:#d4d4d4;"></div>
<div style="position:absolute;left:1226px;top:565px;width:1px;height:19px;background:#d4d4d4;"></div>
<div style="position:absolute;left:1306px;top:565px;width:1px;height:19px;background:#d4d4d4;"></div>
<div style="position:absolute;left:1386px;top:565px;width:1px;height:19px;background:#d4d4d4;"></div>
<div style="position:absolute;left:1466px;top:565px;width:1px;height:19px;background:#d4d4d4;"></div>
<div style="position:absolute;left:1546px;top:565px;width:1px;height:19px;background:#d4d4d4;"></div>
<div style="position:absolute;left:1px;top:604px;width:25px;height:1px;background:#c8c8c8;"></div>
<span style="position:absolute;left:6.96px;top:590.00px;font-size:12.4px;line-height:12.4px;color:#000000;-webkit-text-stroke:0.12px #000000;">40</span>
<div style="position:absolute;left:27px;top:604px;width:1570px;height:1px;background:#d4d4d4;"></div>
<div style="position:absolute;left:746px;top:585px;width:1px;height:19px;background:#d4d4d4;"></div>
<div style="position:absolute;left:826px;top:585px;width:1px;height:19px;background:#d4d4d4;"></div>
<div style="position:absolute;left:906px;top:585px;width:1px;height:19px;background:#d4d4d4;"></div>
<div style="position:absolute;left:986px;top:585px;width:1px;height:19px;background:#d4d4d4;"></div>
<div style="position:absolute;left:1066px;top:585px;width:1px;height:19px;background:#d4d4d4;"></div>
<div style="position:absolute;left:1146px;top:585px;width:1px;height:19px;background:#d4d4d4;"></div>
<div style="position:absolute;left:1226px;top:585px;width:1px;height:19px;background:#d4d4d4;"></div>
<div style="position:absolute;left:1306px;top:585px;width:1px;height:19px;background:#d4d4d4;"></div>
<div style="position:absolute;left:1386px;top:585px;width:1px;height:19px;background:#d4d4d4;"></div>
<div style="position:absolute;left:1466px;top:585px;width:1px;height:19px;background:#d4d4d4;"></div>
<div style="position:absolute;left:1546px;top:585px;width:1px;height:19px;background:#d4d4d4;"></div>
<div style="position:absolute;left:1px;top:624px;width:25px;height:1px;background:#c8c8c8;"></div>
<span style="position:absolute;left:7.06px;top:610.00px;font-size:12.4px;line-height:12.4px;color:#000000;-webkit-text-stroke:0.12px #000000;">41</span>
<div style="position:absolute;left:27px;top:624px;width:1570px;height:1px;background:#d4d4d4;"></div>
<div style="position:absolute;left:746px;top:605px;width:1px;height:19px;background:#d4d4d4;"></div>
<div style="position:absolute;left:826px;top:605px;width:1px;height:19px;background:#d4d4d4;"></div>
<div style="position:absolute;left:906px;top:605px;width:1px;height:19px;background:#d4d4d4;"></div>
<div style="position:absolute;left:986px;top:605px;width:1px;height:19px;background:#d4d4d4;"></div>
<div style="position:absolute;left:1066px;top:605px;width:1px;height:19px;background:#d4d4d4;"></div>
<div style="position:absolute;left:1146px;top:605px;width:1px;height:19px;background:#d4d4d4;"></div>
<div style="position:absolute;left:1226px;top:605px;width:1px;height:19px;background:#d4d4d4;"></div>
<div style="position:absolute;left:1306px;top:605px;width:1px;height:19px;background:#d4d4d4;"></div>
<div style="position:absolute;left:1386px;top:605px;width:1px;height:19px;background:#d4d4d4;"></div>
<div style="position:absolute;left:1466px;top:605px;width:1px;height:19px;background:#d4d4d4;"></div>
<div style="position:absolute;left:1546px;top:605px;width:1px;height:19px;background:#d4d4d4;"></div>
<div style="position:absolute;left:1px;top:644px;width:25px;height:1px;background:#c8c8c8;"></div>
<span style="position:absolute;left:7.06px;top:630.00px;font-size:12.4px;line-height:12.4px;color:#000000;-webkit-text-stroke:0.12px #000000;">42</span>
<div style="position:absolute;left:27px;top:644px;width:1570px;height:1px;background:#d4d4d4;"></div>
<div style="position:absolute;left:746px;top:625px;width:1px;height:19px;background:#d4d4d4;"></div>
<div style="position:absolute;left:826px;top:625px;width:1px;height:19px;background:#d4d4d4;"></div>
<div style="position:absolute;left:906px;top:625px;width:1px;height:19px;background:#d4d4d4;"></div>
<div style="position:absolute;left:986px;top:625px;width:1px;height:19px;background:#d4d4d4;"></div>
<div style="position:absolute;left:1066px;top:625px;width:1px;height:19px;background:#d4d4d4;"></div>
<div style="position:absolute;left:1146px;top:625px;width:1px;height:19px;background:#d4d4d4;"></div>
<div style="position:absolute;left:1226px;top:625px;width:1px;height:19px;background:#d4d4d4;"></div>
<div style="position:absolute;left:1306px;top:625px;width:1px;height:19px;background:#d4d4d4;"></div>
<div style="position:absolute;left:1386px;top:625px;width:1px;height:19px;background:#d4d4d4;"></div>
<div style="position:absolute;left:1466px;top:625px;width:1px;height:19px;background:#d4d4d4;"></div>
<div style="position:absolute;left:1546px;top:625px;width:1px;height:19px;background:#d4d4d4;"></div>
<div style="position:absolute;left:1px;top:664px;width:25px;height:1px;background:#c8c8c8;"></div>
<span style="position:absolute;left:7.06px;top:650.00px;font-size:12.4px;line-height:12.4px;color:#000000;-webkit-text-stroke:0.12px #000000;">43</span>
<div style="position:absolute;left:27px;top:664px;width:1570px;height:1px;background:#d4d4d4;"></div>
<div style="position:absolute;left:746px;top:645px;width:1px;height:19px;background:#d4d4d4;"></div>
<div style="position:absolute;left:826px;top:645px;width:1px;height:19px;background:#d4d4d4;"></div>
<div style="position:absolute;left:906px;top:645px;width:1px;height:19px;background:#d4d4d4;"></div>
<div style="position:absolute;left:986px;top:645px;width:1px;height:19px;background:#d4d4d4;"></div>
<div style="position:absolute;left:1066px;top:645px;width:1px;height:19px;background:#d4d4d4;"></div>
<div style="position:absolute;left:1146px;top:645px;width:1px;height:19px;background:#d4d4d4;"></div>
<div style="position:absolute;left:1226px;top:645px;width:1px;height:19px;background:#d4d4d4;"></div>
<div style="position:absolute;left:1306px;top:645px;width:1px;height:19px;background:#d4d4d4;"></div>
<div style="position:absolute;left:1386px;top:645px;width:1px;height:19px;background:#d4d4d4;"></div>
<div style="position:absolute;left:1466px;top:645px;width:1px;height:19px;background:#d4d4d4;"></div>
<div style="position:absolute;left:1546px;top:645px;width:1px;height:19px;background:#d4d4d4;"></div>
<div style="position:absolute;left:1px;top:684px;width:25px;height:1px;background:#c8c8c8;"></div>
<span style="position:absolute;left:6.96px;top:670.00px;font-size:12.4px;line-height:12.4px;color:#000000;-webkit-text-stroke:0.12px #000000;">44</span>
<div style="position:absolute;left:27px;top:684px;width:1570px;height:1px;background:#d4d4d4;"></div>
<div style="position:absolute;left:746px;top:665px;width:1px;height:19px;background:#d4d4d4;"></div>
<div style="position:absolute;left:826px;top:665px;width:1px;height:19px;background:#d4d4d4;"></div>
<div style="position:absolute;left:906px;top:665px;width:1px;height:19px;background:#d4d4d4;"></div>
<div style="position:absolute;left:986px;top:665px;width:1px;height:19px;background:#d4d4d4;"></div>
<div style="position:absolute;left:1066px;top:665px;width:1px;height:19px;background:#d4d4d4;"></div>
<div style="position:absolute;left:1146px;top:665px;width:1px;height:19px;background:#d4d4d4;"></div>
<div style="position:absolute;left:1226px;top:665px;width:1px;height:19px;background:#d4d4d4;"></div>
<div style="position:absolute;left:1306px;top:665px;width:1px;height:19px;background:#d4d4d4;"></div>
<div style="position:absolute;left:1386px;top:665px;width:1px;height:19px;background:#d4d4d4;"></div>
<div style="position:absolute;left:1466px;top:665px;width:1px;height:19px;background:#d4d4d4;"></div>
<div style="position:absolute;left:1546px;top:665px;width:1px;height:19px;background:#d4d4d4;"></div>
<div style="position:absolute;left:1px;top:704px;width:25px;height:1px;background:#c8c8c8;"></div>
<span style="position:absolute;left:7.06px;top:690.00px;font-size:12.4px;line-height:12.4px;color:#000000;-webkit-text-stroke:0.12px #000000;">45</span>
<div style="position:absolute;left:27px;top:704px;width:1570px;height:1px;background:#d4d4d4;"></div>
<div style="position:absolute;left:586px;top:685px;width:1px;height:19px;background:#d4d4d4;"></div>
<div style="position:absolute;left:666px;top:685px;width:1px;height:19px;background:#d4d4d4;"></div>
<div style="position:absolute;left:746px;top:685px;width:1px;height:19px;background:#d4d4d4;"></div>
<div style="position:absolute;left:826px;top:685px;width:1px;height:19px;background:#d4d4d4;"></div>
<div style="position:absolute;left:906px;top:685px;width:1px;height:19px;background:#d4d4d4;"></div>
<div style="position:absolute;left:986px;top:685px;width:1px;height:19px;background:#d4d4d4;"></div>
<div style="position:absolute;left:1066px;top:685px;width:1px;height:19px;background:#d4d4d4;"></div>
<div style="position:absolute;left:1146px;top:685px;width:1px;height:19px;background:#d4d4d4;"></div>
<div style="position:absolute;left:1226px;top:685px;width:1px;height:19px;background:#d4d4d4;"></div>
<div style="position:absolute;left:1306px;top:685px;width:1px;height:19px;background:#d4d4d4;"></div>
<div style="position:absolute;left:1386px;top:685px;width:1px;height:19px;background:#d4d4d4;"></div>
<div style="position:absolute;left:1466px;top:685px;width:1px;height:19px;background:#d4d4d4;"></div>
<div style="position:absolute;left:1546px;top:685px;width:1px;height:19px;background:#d4d4d4;"></div>
<div style="position:absolute;left:1px;top:724px;width:25px;height:1px;background:#c8c8c8;"></div>
<span style="position:absolute;left:7.06px;top:710.00px;font-size:12.4px;line-height:12.4px;color:#000000;-webkit-text-stroke:0.12px #000000;">46</span>
<div style="position:absolute;left:27px;top:724px;width:1570px;height:1px;background:#d4d4d4;"></div>
<div style="position:absolute;left:586px;top:705px;width:1px;height:19px;background:#d4d4d4;"></div>
<div style="position:absolute;left:666px;top:705px;width:1px;height:19px;background:#d4d4d4;"></div>
<div style="position:absolute;left:746px;top:705px;width:1px;height:19px;background:#d4d4d4;"></div>
<div style="position:absolute;left:826px;top:705px;width:1px;height:19px;background:#d4d4d4;"></div>
<div style="position:absolute;left:906px;top:705px;width:1px;height:19px;background:#d4d4d4;"></div>
<div style="position:absolute;left:986px;top:705px;width:1px;height:19px;background:#d4d4d4;"></div>
<div style="position:absolute;left:1066px;top:705px;width:1px;height:19px;background:#d4d4d4;"></div>
<div style="position:absolute;left:1146px;top:705px;width:1px;height:19px;background:#d4d4d4;"></div>
<div style="position:absolute;left:1226px;top:705px;width:1px;height:19px;background:#d4d4d4;"></div>
<div style="position:absolute;left:1306px;top:705px;width:1px;height:19px;background:#d4d4d4;"></div>
<div style="position:absolute;left:1386px;top:705px;width:1px;height:19px;background:#d4d4d4;"></div>
<div style="position:absolute;left:1466px;top:705px;width:1px;height:19px;background:#d4d4d4;"></div>
<div style="position:absolute;left:1546px;top:705px;width:1px;height:19px;background:#d4d4d4;"></div>
<div style="position:absolute;left:1px;top:744px;width:25px;height:1px;background:#c8c8c8;"></div>
<span style="position:absolute;left:7.06px;top:730.00px;font-size:12.4px;line-height:12.4px;color:#000000;-webkit-text-stroke:0.12px #000000;">47</span>
<div style="position:absolute;left:27px;top:744px;width:1570px;height:1px;background:#d4d4d4;"></div>
<div style="position:absolute;left:826px;top:725px;width:1px;height:19px;background:#d4d4d4;"></div>
<div style="position:absolute;left:906px;top:725px;width:1px;height:19px;background:#d4d4d4;"></div>
<div style="position:absolute;left:986px;top:725px;width:1px;height:19px;background:#d4d4d4;"></div>
<div style="position:absolute;left:1066px;top:725px;width:1px;height:19px;background:#d4d4d4;"></div>
<div style="position:absolute;left:1146px;top:725px;width:1px;height:19px;background:#d4d4d4;"></div>
<div style="position:absolute;left:1226px;top:725px;width:1px;height:19px;background:#d4d4d4;"></div>
<div style="position:absolute;left:1306px;top:725px;width:1px;height:19px;background:#d4d4d4;"></div>
<div style="position:absolute;left:1386px;top:725px;width:1px;height:19px;background:#d4d4d4;"></div>
<div style="position:absolute;left:1466px;top:725px;width:1px;height:19px;background:#d4d4d4;"></div>
<div style="position:absolute;left:1546px;top:725px;width:1px;height:19px;background:#d4d4d4;"></div>
<div style="position:absolute;left:1px;top:764px;width:25px;height:1px;background:#c8c8c8;"></div>
<span style="position:absolute;left:7.06px;top:750.00px;font-size:12.4px;line-height:12.4px;color:#000000;-webkit-text-stroke:0.12px #000000;">48</span>
<div style="position:absolute;left:27px;top:764px;width:1570px;height:1px;background:#d4d4d4;"></div>
<div style="position:absolute;left:506px;top:745px;width:1px;height:19px;background:#d4d4d4;"></div>
<div style="position:absolute;left:586px;top:745px;width:1px;height:19px;background:#d4d4d4;"></div>
<div style="position:absolute;left:666px;top:745px;width:1px;height:19px;background:#d4d4d4;"></div>
<div style="position:absolute;left:746px;top:745px;width:1px;height:19px;background:#d4d4d4;"></div>
<div style="position:absolute;left:826px;top:745px;width:1px;height:19px;background:#d4d4d4;"></div>
<div style="position:absolute;left:906px;top:745px;width:1px;height:19px;background:#d4d4d4;"></div>
<div style="position:absolute;left:986px;top:745px;width:1px;height:19px;background:#d4d4d4;"></div>
<div style="position:absolute;left:1066px;top:745px;width:1px;height:19px;background:#d4d4d4;"></div>
<div style="position:absolute;left:1146px;top:745px;width:1px;height:19px;background:#d4d4d4;"></div>
<div style="position:absolute;left:1226px;top:745px;width:1px;height:19px;background:#d4d4d4;"></div>
<div style="position:absolute;left:1306px;top:745px;width:1px;height:19px;background:#d4d4d4;"></div>
<div style="position:absolute;left:1386px;top:745px;width:1px;height:19px;background:#d4d4d4;"></div>
<div style="position:absolute;left:1466px;top:745px;width:1px;height:19px;background:#d4d4d4;"></div>
<div style="position:absolute;left:1546px;top:745px;width:1px;height:19px;background:#d4d4d4;"></div>
<div style="position:absolute;left:1px;top:784px;width:25px;height:1px;background:#c8c8c8;"></div>
<span style="position:absolute;left:7.06px;top:770.00px;font-size:12.4px;line-height:12.4px;color:#000000;-webkit-text-stroke:0.12px #000000;">49</span>
<div style="position:absolute;left:27px;top:784px;width:1570px;height:1px;background:#d4d4d4;"></div>
<div style="position:absolute;left:506px;top:765px;width:1px;height:19px;background:#d4d4d4;"></div>
<div style="position:absolute;left:586px;top:765px;width:1px;height:19px;background:#d4d4d4;"></div>
<div style="position:absolute;left:666px;top:765px;width:1px;height:19px;background:#d4d4d4;"></div>
<div style="position:absolute;left:746px;top:765px;width:1px;height:19px;background:#d4d4d4;"></div>
<div style="position:absolute;left:826px;top:765px;width:1px;height:19px;background:#d4d4d4;"></div>
<div style="position:absolute;left:906px;top:765px;width:1px;height:19px;background:#d4d4d4;"></div>
<div style="position:absolute;left:986px;top:765px;width:1px;height:19px;background:#d4d4d4;"></div>
<div style="position:absolute;left:1066px;top:765px;width:1px;height:19px;background:#d4d4d4;"></div>
<div style="position:absolute;left:1146px;top:765px;width:1px;height:19px;background:#d4d4d4;"></div>
<div style="position:absolute;left:1226px;top:765px;width:1px;height:19px;background:#d4d4d4;"></div>
<div style="position:absolute;left:1306px;top:765px;width:1px;height:19px;background:#d4d4d4;"></div>
<div style="position:absolute;left:1386px;top:765px;width:1px;height:19px;background:#d4d4d4;"></div>
<div style="position:absolute;left:1466px;top:765px;width:1px;height:19px;background:#d4d4d4;"></div>
<div style="position:absolute;left:1546px;top:765px;width:1px;height:19px;background:#d4d4d4;"></div>
<div style="position:absolute;left:1px;top:804px;width:25px;height:1px;background:#c8c8c8;"></div>
<span style="position:absolute;left:6.86px;top:790.00px;font-size:12.4px;line-height:12.4px;color:#000000;-webkit-text-stroke:0.12px #000000;">50</span>
<div style="position:absolute;left:27px;top:804px;width:1570px;height:1px;background:#d4d4d4;"></div>
<div style="position:absolute;left:506px;top:785px;width:1px;height:19px;background:#d4d4d4;"></div>
<div style="position:absolute;left:586px;top:785px;width:1px;height:19px;background:#d4d4d4;"></div>
<div style="position:absolute;left:666px;top:785px;width:1px;height:19px;background:#d4d4d4;"></div>
<div style="position:absolute;left:746px;top:785px;width:1px;height:19px;background:#d4d4d4;"></div>
<div style="position:absolute;left:826px;top:785px;width:1px;height:19px;background:#d4d4d4;"></div>
<div style="position:absolute;left:906px;top:785px;width:1px;height:19px;background:#d4d4d4;"></div>
<div style="position:absolute;left:986px;top:785px;width:1px;height:19px;background:#d4d4d4;"></div>
<div style="position:absolute;left:1066px;top:785px;width:1px;height:19px;background:#d4d4d4;"></div>
<div style="position:absolute;left:1146px;top:785px;width:1px;height:19px;background:#d4d4d4;"></div>
<div style="position:absolute;left:1226px;top:785px;width:1px;height:19px;background:#d4d4d4;"></div>
<div style="position:absolute;left:1306px;top:785px;width:1px;height:19px;background:#d4d4d4;"></div>
<div style="position:absolute;left:1386px;top:785px;width:1px;height:19px;background:#d4d4d4;"></div>
<div style="position:absolute;left:1466px;top:785px;width:1px;height:19px;background:#d4d4d4;"></div>
<div style="position:absolute;left:1546px;top:785px;width:1px;height:19px;background:#d4d4d4;"></div>
<div style="position:absolute;left:1px;top:824px;width:25px;height:1px;background:#c8c8c8;"></div>
<span style="position:absolute;left:6.96px;top:810.00px;font-size:12.4px;line-height:12.4px;color:#000000;-webkit-text-stroke:0.12px #000000;">51</span>
<div style="position:absolute;left:27px;top:824px;width:1570px;height:1px;background:#d4d4d4;"></div>
<div style="position:absolute;left:666px;top:805px;width:1px;height:19px;background:#d4d4d4;"></div>
<div style="position:absolute;left:746px;top:805px;width:1px;height:19px;background:#d4d4d4;"></div>
<div style="position:absolute;left:826px;top:805px;width:1px;height:19px;background:#d4d4d4;"></div>
<div style="position:absolute;left:906px;top:805px;width:1px;height:19px;background:#d4d4d4;"></div>
<div style="position:absolute;left:986px;top:805px;width:1px;height:19px;background:#d4d4d4;"></div>
<div style="position:absolute;left:1066px;top:805px;width:1px;height:19px;background:#d4d4d4;"></div>
<div style="position:absolute;left:1146px;top:805px;width:1px;height:19px;background:#d4d4d4;"></div>
<div style="position:absolute;left:1226px;top:805px;width:1px;height:19px;background:#d4d4d4;"></div>
<div style="position:absolute;left:1306px;top:805px;width:1px;height:19px;background:#d4d4d4;"></div>
<div style="position:absolute;left:1386px;top:805px;width:1px;height:19px;background:#d4d4d4;"></div>
<div style="position:absolute;left:1466px;top:805px;width:1px;height:19px;background:#d4d4d4;"></div>
<div style="position:absolute;left:1546px;top:805px;width:1px;height:19px;background:#d4d4d4;"></div>
<div style="position:absolute;left:666px;top:825px;width:1px;height:4px;background:#d4d4d4;"></div>
<div style="position:absolute;left:746px;top:825px;width:1px;height:4px;background:#d4d4d4;"></div>
<div style="position:absolute;left:826px;top:825px;width:1px;height:4px;background:#d4d4d4;"></div>
<div style="position:absolute;left:906px;top:825px;width:1px;height:4px;background:#d4d4d4;"></div>
<div style="position:absolute;left:986px;top:825px;width:1px;height:4px;background:#d4d4d4;"></div>
<div style="position:absolute;left:1066px;top:825px;width:1px;height:4px;background:#d4d4d4;"></div>
<div style="position:absolute;left:1146px;top:825px;width:1px;height:4px;background:#d4d4d4;"></div>
<div style="position:absolute;left:1226px;top:825px;width:1px;height:4px;background:#d4d4d4;"></div>
<div style="position:absolute;left:1306px;top:825px;width:1px;height:4px;background:#d4d4d4;"></div>
<div style="position:absolute;left:1386px;top:825px;width:1px;height:4px;background:#d4d4d4;"></div>
<div style="position:absolute;left:1466px;top:825px;width:1px;height:4px;background:#d4d4d4;"></div>
<div style="position:absolute;left:1546px;top:825px;width:1px;height:4px;background:#d4d4d4;"></div>
<span style="position:absolute;left:29.00px;top:230.00px;font-size:12.4px;line-height:12.4px;color:#000000;transform:scaleX(1.0392);-webkit-text-stroke:0.15px #000000;">AT0000BAWAG2,</span>
<span style="position:absolute;left:130.94px;top:230.00px;font-size:12.4px;line-height:12.4px;color:#000000;transform:scaleX(0.9943);-webkit-text-stroke:0.15px #000000;">&quot;CREATE&quot;,</span>
<span style="position:absolute;left:192.21px;top:230.00px;font-size:12.4px;line-height:12.4px;color:#000000;transform:scaleX(1.1282);-webkit-text-stroke:0.15px #000000;">&quot;This is a post comment&quot;,</span>
<span style="position:absolute;left:349.86px;top:230.00px;font-size:12.4px;line-height:12.4px;color:#000000;transform:scaleX(1.0535);-webkit-text-stroke:0.15px #000000;">&quot;2017-12-29 09:35:08.000000&quot;,</span>
<span style="position:absolute;left:531.30px;top:230.00px;font-size:12.4px;line-height:12.4px;color:#000000;transform:scaleX(1.1560);-webkit-text-stroke:0.15px #000000;">,</span>
<span style="position:absolute;left:535.28px;top:230.00px;font-size:12.4px;line-height:12.4px;color:#000000;transform:scaleX(1.1560);-webkit-text-stroke:0.15px #000000;">,</span>
<span style="position:absolute;left:539.26px;top:230.00px;font-size:12.4px;line-height:12.4px;color:#000000;transform:scaleX(1.1560);-webkit-text-stroke:0.15px #000000;">,</span>
<span style="position:absolute;left:543.25px;top:230.00px;font-size:12.4px;line-height:12.4px;color:#000000;transform:scaleX(1.1560);-webkit-text-stroke:0.15px #000000;">,</span>
<span style="position:absolute;left:547.23px;top:230.00px;font-size:12.4px;line-height:12.4px;color:#000000;transform:scaleX(1.1560);-webkit-text-stroke:0.15px #000000;">,</span>
<span style="position:absolute;left:551.21px;top:230.00px;font-size:12.4px;line-height:12.4px;color:#000000;transform:scaleX(1.1560);-webkit-text-stroke:0.15px #000000;">,</span>
<span style="position:absolute;left:555.19px;top:230.00px;font-size:12.4px;line-height:12.4px;color:#000000;transform:scaleX(1.1560);-webkit-text-stroke:0.15px #000000;">,</span>
<span style="position:absolute;left:559.18px;top:230.00px;font-size:12.4px;line-height:12.4px;color:#000000;transform:scaleX(1.1560);-webkit-text-stroke:0.15px #000000;">,</span>
<span style="position:absolute;left:563.16px;top:230.00px;font-size:12.4px;line-height:12.4px;color:#000000;transform:scaleX(1.1560);-webkit-text-stroke:0.15px #000000;">,</span>
<span style="position:absolute;left:567.14px;top:230.00px;font-size:12.4px;line-height:12.4px;color:#000000;transform:scaleX(1.1560);-webkit-text-stroke:0.15px #000000;">,</span>
<span style="position:absolute;left:571.12px;top:230.00px;font-size:12.4px;line-height:12.4px;color:#000000;transform:scaleX(1.1560);-webkit-text-stroke:0.15px #000000;">,</span>
<span style="position:absolute;left:575.11px;top:230.00px;font-size:12.4px;line-height:12.4px;color:#000000;transform:scaleX(1.1560);-webkit-text-stroke:0.15px #000000;">,</span>
<span style="position:absolute;left:579.09px;top:230.00px;font-size:12.4px;line-height:12.4px;color:#000000;transform:scaleX(1.1560);-webkit-text-stroke:0.15px #000000;">,</span>
<span style="position:absolute;left:583.07px;top:230.00px;font-size:12.4px;line-height:12.4px;color:#000000;transform:scaleX(1.1560);-webkit-text-stroke:0.15px #000000;">,</span>
<span style="position:absolute;left:587.05px;top:230.00px;font-size:12.4px;line-height:12.4px;color:#000000;transform:scaleX(1.1560);-webkit-text-stroke:0.15px #000000;">,</span>
<span style="position:absolute;left:591.04px;top:230.00px;font-size:12.4px;line-height:12.4px;color:#000000;transform:scaleX(1.1560);-webkit-text-stroke:0.15px #000000;">,</span>
<span style="position:absolute;left:595.02px;top:230.00px;font-size:12.4px;line-height:12.4px;color:#000000;transform:scaleX(1.1560);-webkit-text-stroke:0.15px #000000;">,</span>
<span style="position:absolute;left:29.00px;top:250.00px;font-size:12.4px;line-height:12.4px;color:#000000;transform:scaleX(1.0468);-webkit-text-stroke:0.15px #000000;">AT0000BAWAG2,</span>
<span style="position:absolute;left:131.68px;top:250.00px;font-size:12.4px;line-height:12.4px;color:#000000;transform:scaleX(1.0514);-webkit-text-stroke:0.15px #000000;">&quot;UPDATE&quot;,</span>
<span style="position:absolute;left:196.47px;top:250.00px;font-size:12.4px;line-height:12.4px;color:#000000;transform:scaleX(1.2241);-webkit-text-stroke:0.15px #000000;">&quot;test&quot;,</span>
<span style="position:absolute;left:235.93px;top:250.00px;font-size:12.4px;line-height:12.4px;color:#000000;transform:scaleX(1.0612);-webkit-text-stroke:0.15px #000000;">&quot;2018-01-10 12:01:36.000000&quot;,</span>
<span style="position:absolute;left:418.69px;top:250.00px;font-size:12.4px;line-height:12.4px;color:#000000;transform:scaleX(1.1996);-webkit-text-stroke:0.15px #000000;">&quot;1&quot;,</span>
<span style="position:absolute;left:441.65px;top:250.00px;font-size:12.4px;line-height:12.4px;color:#000000;transform:scaleX(1.1996);-webkit-text-stroke:0.15px #000000;">&quot;3&quot;,</span>
<span style="position:absolute;left:464.62px;top:250.00px;font-size:12.4px;line-height:12.4px;color:#000000;transform:scaleX(1.1996);-webkit-text-stroke:0.15px #000000;">&quot;2&quot;,</span>
<span style="position:absolute;left:487.58px;top:250.00px;font-size:12.4px;line-height:12.4px;color:#000000;transform:scaleX(1.1996);-webkit-text-stroke:0.15px #000000;">&quot;1&quot;,</span>
<span style="position:absolute;left:510.55px;top:250.00px;font-size:12.4px;line-height:12.4px;color:#000000;transform:scaleX(1.1996);-webkit-text-stroke:0.15px #000000;">&quot;2&quot;,</span>
<span style="position:absolute;left:533.51px;top:250.00px;font-size:12.4px;line-height:12.4px;color:#000000;transform:scaleX(1.1996);-webkit-text-stroke:0.15px #000000;">&quot;2&quot;,</span>
<span style="position:absolute;left:556.48px;top:250.00px;font-size:12.4px;line-height:12.4px;color:#000000;transform:scaleX(1.1996);-webkit-text-stroke:0.15px #000000;">&quot;1&quot;,</span>
<span style="position:absolute;left:579.45px;top:250.00px;font-size:12.4px;line-height:12.4px;color:#000000;transform:scaleX(1.2073);-webkit-text-stroke:0.15px #000000;">&quot;1&quot;</span>
<span style="position:absolute;left:29.00px;top:270.00px;font-size:12.4px;line-height:12.4px;color:#000000;transform:scaleX(1.0133);-webkit-text-stroke:0.15px #000000;">BE0003810273,</span>
<span style="position:absolute;left:119.13px;top:270.00px;font-size:12.4px;line-height:12.4px;color:#000000;transform:scaleX(1.0483);-webkit-text-stroke:0.15px #000000;">&quot;UPDATE&quot;,</span>
<span style="position:absolute;left:183.73px;top:270.00px;font-size:12.4px;line-height:12.4px;color:#000000;transform:scaleX(1.1071);-webkit-text-stroke:0.15px #000000;">&quot;Changed&quot;,</span>
<span style="position:absolute;left:253.01px;top:270.00px;font-size:12.4px;line-height:12.4px;color:#000000;transform:scaleX(1.0580);-webkit-text-stroke:0.15px #000000;">&quot;2017-12-20 08:35:15.000000&quot;,</span>
<span style="position:absolute;left:435.22px;top:270.00px;font-size:12.4px;line-height:12.4px;color:#000000;transform:scaleX(1.1960);-webkit-text-stroke:0.15px #000000;">&quot;1&quot;,</span>
<span style="position:absolute;left:458.12px;top:270.00px;font-size:12.4px;line-height:12.4px;color:#000000;transform:scaleX(1.1960);-webkit-text-stroke:0.15px #000000;">&quot;5&quot;,</span>
<span style="position:absolute;left:481.02px;top:270.00px;font-size:12.4px;line-height:12.4px;color:#000000;transform:scaleX(1.1960);-webkit-text-stroke:0.15px #000000;">&quot;2&quot;,</span>
<span style="position:absolute;left:503.91px;top:270.00px;font-size:12.4px;line-height:12.4px;color:#000000;transform:scaleX(1.1960);-webkit-text-stroke:0.15px #000000;">&quot;2&quot;,</span>
<span style="position:absolute;left:526.81px;top:270.00px;font-size:12.4px;line-height:12.4px;color:#000000;transform:scaleX(1.1960);-webkit-text-stroke:0.15px #000000;">&quot;5&quot;,</span>
<span style="position:absolute;left:549.71px;top:270.00px;font-size:12.4px;line-height:12.4px;color:#000000;transform:scaleX(1.1960);-webkit-text-stroke:0.15px #000000;">&quot;2&quot;,</span>
<span style="position:absolute;left:572.61px;top:270.00px;font-size:12.4px;line-height:12.4px;color:#000000;transform:scaleX(1.1960);-webkit-text-stroke:0.15px #000000;">&quot;2&quot;,</span>
<span style="position:absolute;left:595.50px;top:270.00px;font-size:12.4px;line-height:12.4px;color:#000000;transform:scaleX(1.2037);-webkit-text-stroke:0.15px #000000;">&quot;1&quot;</span>
<span style="position:absolute;left:29.00px;top:290.00px;font-size:12.4px;line-height:12.4px;color:#000000;transform:scaleX(1.0093);-webkit-text-stroke:0.15px #000000;">BE0003810273,</span>
<span style="position:absolute;left:118.78px;top:290.00px;font-size:12.4px;line-height:12.4px;color:#000000;transform:scaleX(0.9818);-webkit-text-stroke:0.15px #000000;">&quot;DELETE&quot;,</span>
<span style="position:absolute;left:178.17px;top:290.00px;font-size:12.4px;line-height:12.4px;color:#000000;transform:scaleX(1.1564);-webkit-text-stroke:0.15px #000000;">,</span>
<span style="position:absolute;left:182.15px;top:290.00px;font-size:12.4px;line-height:12.4px;color:#000000;transform:scaleX(1.0540);-webkit-text-stroke:0.15px #000000;">&quot;2018-01-10 14:28:18.000000&quot;,</span>
<span style="position:absolute;left:363.66px;top:290.00px;font-size:12.4px;line-height:12.4px;color:#000000;transform:scaleX(1.1914);-webkit-text-stroke:0.15px #000000;">&quot;1&quot;,</span>
<span style="position:absolute;left:386.47px;top:290.00px;font-size:12.4px;line-height:12.4px;color:#000000;transform:scaleX(1.1914);-webkit-text-stroke:0.15px #000000;">&quot;4&quot;,</span>
<span style="position:absolute;left:409.27px;top:290.00px;font-size:12.4px;line-height:12.4px;color:#000000;transform:scaleX(1.1914);-webkit-text-stroke:0.15px #000000;">&quot;2&quot;,</span>
<span style="position:absolute;left:432.08px;top:290.00px;font-size:12.4px;line-height:12.4px;color:#000000;transform:scaleX(1.1485);-webkit-text-stroke:0.15px #000000;">&quot;1,</span>
<span style="position:absolute;left:449.02px;top:290.00px;font-size:12.4px;line-height:12.4px;color:#000000;transform:scaleX(1.1485);-webkit-text-stroke:0.15px #000000;">2&quot;,</span>
<span style="position:absolute;left:465.95px;top:290.00px;font-size:12.4px;line-height:12.4px;color:#000000;transform:scaleX(1.1914);-webkit-text-stroke:0.15px #000000;">&quot;5&quot;,</span>
<span style="position:absolute;left:488.76px;top:290.00px;font-size:12.4px;line-height:12.4px;color:#000000;transform:scaleX(1.1914);-webkit-text-stroke:0.15px #000000;">&quot;2&quot;,</span>
<span style="position:absolute;left:511.57px;top:290.00px;font-size:12.4px;line-height:12.4px;color:#000000;transform:scaleX(1.1914);-webkit-text-stroke:0.15px #000000;">&quot;2&quot;,</span>
<span style="position:absolute;left:534.38px;top:290.00px;font-size:12.4px;line-height:12.4px;color:#000000;transform:scaleX(1.1990);-webkit-text-stroke:0.15px #000000;">&quot;1&quot;</span>
<span style="position:absolute;left:29.00px;top:310.00px;font-size:12.4px;line-height:12.4px;color:#000000;transform:scaleX(1.0176);-webkit-text-stroke:0.15px #000000;">CH0012032048,</span>
<span style="position:absolute;left:120.90px;top:310.00px;font-size:12.4px;line-height:12.4px;color:#000000;transform:scaleX(1.0478);-webkit-text-stroke:0.15px #000000;">&quot;UPDATE&quot;,</span>
<span style="position:absolute;left:185.47px;top:310.00px;font-size:12.4px;line-height:12.4px;color:#000000;transform:scaleX(1.1834);-webkit-text-stroke:0.15px #000000;">&quot;Test&quot;,</span>
<span style="position:absolute;left:226.88px;top:310.00px;font-size:12.4px;line-height:12.4px;color:#000000;transform:scaleX(1.0576);-webkit-text-stroke:0.15px #000000;">&quot;2017-12-12 12:49:57.000000&quot;,</span>
<span style="position:absolute;left:409.01px;top:310.00px;font-size:12.4px;line-height:12.4px;color:#000000;transform:scaleX(1.1954);-webkit-text-stroke:0.15px #000000;">&quot;1&quot;,</span>
<span style="position:absolute;left:431.89px;top:310.00px;font-size:12.4px;line-height:12.4px;color:#000000;transform:scaleX(1.1954);-webkit-text-stroke:0.15px #000000;">&quot;5&quot;,</span>
<span style="position:absolute;left:454.78px;top:310.00px;font-size:12.4px;line-height:12.4px;color:#000000;transform:scaleX(1.1954);-webkit-text-stroke:0.15px #000000;">&quot;2&quot;,</span>
<span style="position:absolute;left:477.67px;top:310.00px;font-size:12.4px;line-height:12.4px;color:#000000;transform:scaleX(1.1954);-webkit-text-stroke:0.15px #000000;">&quot;2&quot;,</span>
<span style="position:absolute;left:500.55px;top:310.00px;font-size:12.4px;line-height:12.4px;color:#000000;transform:scaleX(1.1954);-webkit-text-stroke:0.15px #000000;">&quot;5&quot;,</span>
<span style="position:absolute;left:523.44px;top:310.00px;font-size:12.4px;line-height:12.4px;color:#000000;transform:scaleX(1.1954);-webkit-text-stroke:0.15px #000000;">&quot;2&quot;,</span>
<span style="position:absolute;left:546.32px;top:310.00px;font-size:12.4px;line-height:12.4px;color:#000000;transform:scaleX(1.1954);-webkit-text-stroke:0.15px #000000;">&quot;4&quot;,</span>
<span style="position:absolute;left:569.21px;top:310.00px;font-size:12.4px;line-height:12.4px;color:#000000;transform:scaleX(1.2031);-webkit-text-stroke:0.15px #000000;">&quot;1&quot;</span>
<span style="position:absolute;left:29.00px;top:330.00px;font-size:12.4px;line-height:12.4px;color:#000000;transform:scaleX(1.0162);-webkit-text-stroke:0.15px #000000;">CH0012032048,</span>
<span style="position:absolute;left:120.79px;top:330.00px;font-size:12.4px;line-height:12.4px;color:#000000;transform:scaleX(1.0464);-webkit-text-stroke:0.15px #000000;">&quot;UPDATE&quot;,</span>
<span style="position:absolute;left:185.27px;top:330.00px;font-size:12.4px;line-height:12.4px;color:#000000;transform:scaleX(1.1250);-webkit-text-stroke:0.15px #000000;">&quot;genau so&quot;,</span>
<span style="position:absolute;left:256.45px;top:330.00px;font-size:12.4px;line-height:12.4px;color:#000000;transform:scaleX(1.0562);-webkit-text-stroke:0.15px #000000;">&quot;2018-01-10 14:37:23.000000&quot;,</span>
<span style="position:absolute;left:438.34px;top:330.00px;font-size:12.4px;line-height:12.4px;color:#000000;transform:scaleX(1.1939);-webkit-text-stroke:0.15px #000000;">&quot;1&quot;,</span>
<span style="position:absolute;left:461.19px;top:330.00px;font-size:12.4px;line-height:12.4px;color:#000000;transform:scaleX(1.1939);-webkit-text-stroke:0.15px #000000;">&quot;6&quot;,</span>
<span style="position:absolute;left:484.05px;top:330.00px;font-size:12.4px;line-height:12.4px;color:#000000;transform:scaleX(1.1939);-webkit-text-stroke:0.15px #000000;">&quot;2&quot;,</span>
<span style="position:absolute;left:506.91px;top:330.00px;font-size:12.4px;line-height:12.4px;color:#000000;transform:scaleX(1.1939);-webkit-text-stroke:0.15px #000000;">&quot;2&quot;,</span>
<span style="position:absolute;left:529.77px;top:330.00px;font-size:12.4px;line-height:12.4px;color:#000000;transform:scaleX(1.1939);-webkit-text-stroke:0.15px #000000;">&quot;6&quot;,</span>
<span style="position:absolute;left:552.62px;top:330.00px;font-size:12.4px;line-height:12.4px;color:#000000;transform:scaleX(1.1939);-webkit-text-stroke:0.15px #000000;">&quot;2&quot;,</span>
<span style="position:absolute;left:575.48px;top:330.00px;font-size:12.4px;line-height:12.4px;color:#000000;transform:scaleX(1.1939);-webkit-text-stroke:0.15px #000000;">&quot;2&quot;,</span>
<span style="position:absolute;left:598.34px;top:330.00px;font-size:12.4px;line-height:12.4px;color:#000000;transform:scaleX(1.2016);-webkit-text-stroke:0.15px #000000;">&quot;1&quot;</span>
<span style="position:absolute;left:29.00px;top:350.00px;font-size:12.4px;line-height:12.4px;color:#000000;transform:scaleX(1.0286);-webkit-text-stroke:0.15px #000000;">CH0012032113,</span>
<span style="position:absolute;left:120.95px;top:350.00px;font-size:12.4px;line-height:12.4px;color:#000000;transform:scaleX(1.0483);-webkit-text-stroke:0.15px #000000;">&quot;UPDATE&quot;,</span>
<span style="position:absolute;left:185.55px;top:350.00px;font-size:12.4px;line-height:12.4px;color:#000000;transform:scaleX(1.2110);-webkit-text-stroke:0.15px #000000;">&quot;x&quot;,</span>
<span style="position:absolute;left:207.89px;top:350.00px;font-size:12.4px;line-height:12.4px;color:#000000;transform:scaleX(1.0581);-webkit-text-stroke:0.15px #000000;">&quot;2017-12-15 18:21:06.000000&quot;,</span>
<span style="position:absolute;left:390.11px;top:350.00px;font-size:12.4px;line-height:12.4px;color:#000000;transform:scaleX(1.1961);-webkit-text-stroke:0.15px #000000;">&quot;1&quot;,</span>
<span style="position:absolute;left:413.01px;top:350.00px;font-size:12.4px;line-height:12.4px;color:#000000;transform:scaleX(1.1961);-webkit-text-stroke:0.15px #000000;">&quot;5&quot;,</span>
<span style="position:absolute;left:435.91px;top:350.00px;font-size:12.4px;line-height:12.4px;color:#000000;transform:scaleX(1.1961);-webkit-text-stroke:0.15px #000000;">&quot;2&quot;,</span>
<span style="position:absolute;left:458.81px;top:350.00px;font-size:12.4px;line-height:12.4px;color:#000000;transform:scaleX(1.1961);-webkit-text-stroke:0.15px #000000;">&quot;2&quot;,</span>
<span style="position:absolute;left:481.71px;top:350.00px;font-size:12.4px;line-height:12.4px;color:#000000;transform:scaleX(1.1961);-webkit-text-stroke:0.15px #000000;">&quot;5&quot;,</span>
<span style="position:absolute;left:504.60px;top:350.00px;font-size:12.4px;line-height:12.4px;color:#000000;transform:scaleX(1.1961);-webkit-text-stroke:0.15px #000000;">&quot;2&quot;,</span>
<span style="position:absolute;left:527.50px;top:350.00px;font-size:12.4px;line-height:12.4px;color:#000000;transform:scaleX(1.1961);-webkit-text-stroke:0.15px #000000;">&quot;2&quot;,</span>
<span style="position:absolute;left:550.40px;top:350.00px;font-size:12.4px;line-height:12.4px;color:#000000;transform:scaleX(1.2037);-webkit-text-stroke:0.15px #000000;">&quot;1&quot;</span>
<span style="position:absolute;left:29.00px;top:370.00px;font-size:12.4px;line-height:12.4px;color:#000000;transform:scaleX(1.0161);-webkit-text-stroke:0.15px #000000;">CH0038863350,</span>
<span style="position:absolute;left:120.77px;top:370.00px;font-size:12.4px;line-height:12.4px;color:#000000;transform:scaleX(0.9966);-webkit-text-stroke:0.15px #000000;">&quot;CREATE&quot;,</span>
<span style="position:absolute;left:182.19px;top:370.00px;font-size:12.4px;line-height:12.4px;color:#000000;transform:scaleX(1.0988);-webkit-text-stroke:0.15px #000000;">&quot;OK :-)&quot;,</span>
<span style="position:absolute;left:231.98px;top:370.00px;font-size:12.4px;line-height:12.4px;color:#000000;transform:scaleX(1.0560);-webkit-text-stroke:0.15px #000000;">&quot;2018-01-25 09:05:40.000000&quot;,</span>
<span style="position:absolute;left:413.84px;top:370.00px;font-size:12.4px;line-height:12.4px;color:#000000;transform:scaleX(1.1587);-webkit-text-stroke:0.15px #000000;">,</span>
<span style="position:absolute;left:417.83px;top:370.00px;font-size:12.4px;line-height:12.4px;color:#000000;transform:scaleX(1.1587);-webkit-text-stroke:0.15px #000000;">,</span>
<span style="position:absolute;left:421.82px;top:370.00px;font-size:12.4px;line-height:12.4px;color:#000000;transform:scaleX(1.1587);-webkit-text-stroke:0.15px #000000;">,</span>
<span style="position:absolute;left:425.81px;top:370.00px;font-size:12.4px;line-height:12.4px;color:#000000;transform:scaleX(1.1587);-webkit-text-stroke:0.15px #000000;">,</span>
<span style="position:absolute;left:429.81px;top:370.00px;font-size:12.4px;line-height:12.4px;color:#000000;transform:scaleX(1.1587);-webkit-text-stroke:0.15px #000000;">,</span>
<span style="position:absolute;left:433.80px;top:370.00px;font-size:12.4px;line-height:12.4px;color:#000000;transform:scaleX(1.1587);-webkit-text-stroke:0.15px #000000;">,</span>
<span style="position:absolute;left:437.79px;top:370.00px;font-size:12.4px;line-height:12.4px;color:#000000;transform:scaleX(1.1587);-webkit-text-stroke:0.15px #000000;">,</span>
<span style="position:absolute;left:441.78px;top:370.00px;font-size:12.4px;line-height:12.4px;color:#000000;transform:scaleX(1.1587);-webkit-text-stroke:0.15px #000000;">,</span>
<span style="position:absolute;left:445.77px;top:370.00px;font-size:12.4px;line-height:12.4px;color:#000000;transform:scaleX(1.1587);-webkit-text-stroke:0.15px #000000;">,</span>
<span style="position:absolute;left:449.77px;top:370.00px;font-size:12.4px;line-height:12.4px;color:#000000;transform:scaleX(1.1587);-webkit-text-stroke:0.15px #000000;">,</span>
<span style="position:absolute;left:453.76px;top:370.00px;font-size:12.4px;line-height:12.4px;color:#000000;transform:scaleX(1.1587);-webkit-text-stroke:0.15px #000000;">,</span>
<span style="position:absolute;left:457.75px;top:370.00px;font-size:12.4px;line-height:12.4px;color:#000000;transform:scaleX(1.1587);-webkit-text-stroke:0.15px #000000;">,</span>
<span style="position:absolute;left:461.74px;top:370.00px;font-size:12.4px;line-height:12.4px;color:#000000;transform:scaleX(1.1587);-webkit-text-stroke:0.15px #000000;">,</span>
<span style="position:absolute;left:465.73px;top:370.00px;font-size:12.4px;line-height:12.4px;color:#000000;transform:scaleX(1.1587);-webkit-text-stroke:0.15px #000000;">,</span>
<span style="position:absolute;left:469.72px;top:370.00px;font-size:12.4px;line-height:12.4px;color:#000000;transform:scaleX(1.1587);-webkit-text-stroke:0.15px #000000;">,</span>
<span style="position:absolute;left:473.72px;top:370.00px;font-size:12.4px;line-height:12.4px;color:#000000;transform:scaleX(1.1587);-webkit-text-stroke:0.15px #000000;">,</span>
<span style="position:absolute;left:477.71px;top:370.00px;font-size:12.4px;line-height:12.4px;color:#000000;transform:scaleX(1.1587);-webkit-text-stroke:0.15px #000000;">,</span>
<span style="position:absolute;left:29.00px;top:390.00px;font-size:12.4px;line-height:12.4px;color:#000000;transform:scaleX(1.0265);-webkit-text-stroke:0.15px #000000;">DE0001135044,</span>
<span style="position:absolute;left:120.06px;top:390.00px;font-size:12.4px;line-height:12.4px;color:#000000;transform:scaleX(0.9973);-webkit-text-stroke:0.15px #000000;">&quot;CREATE&quot;,</span>
<span style="position:absolute;left:181.52px;top:390.00px;font-size:12.4px;line-height:12.4px;color:#000000;transform:scaleX(1.0720);-webkit-text-stroke:0.15px #000000;">&quot;Pflege RK&quot;,</span>
<span style="position:absolute;left:254.50px;top:390.00px;font-size:12.4px;line-height:12.4px;color:#000000;transform:scaleX(1.0568);-webkit-text-stroke:0.15px #000000;">&quot;2018-01-04 12:42:04.000000&quot;,</span>
<span style="position:absolute;left:436.49px;top:390.00px;font-size:12.4px;line-height:12.4px;color:#000000;transform:scaleX(1.1595);-webkit-text-stroke:0.15px #000000;">,</span>
<span style="position:absolute;left:440.49px;top:390.00px;font-size:12.4px;line-height:12.4px;color:#000000;transform:scaleX(1.1595);-webkit-text-stroke:0.15px #000000;">,</span>
<span style="position:absolute;left:444.48px;top:390.00px;font-size:12.4px;line-height:12.4px;color:#000000;transform:scaleX(1.1595);-webkit-text-stroke:0.15px #000000;">,</span>
<span style="position:absolute;left:448.48px;top:390.00px;font-size:12.4px;line-height:12.4px;color:#000000;transform:scaleX(1.1595);-webkit-text-stroke:0.15px #000000;">,</span>
<span style="position:absolute;left:452.47px;top:390.00px;font-size:12.4px;line-height:12.4px;color:#000000;transform:scaleX(1.1595);-webkit-text-stroke:0.15px #000000;">,</span>
<span style="position:absolute;left:456.46px;top:390.00px;font-size:12.4px;line-height:12.4px;color:#000000;transform:scaleX(1.1595);-webkit-text-stroke:0.15px #000000;">,</span>
<span style="position:absolute;left:460.46px;top:390.00px;font-size:12.4px;line-height:12.4px;color:#000000;transform:scaleX(1.1595);-webkit-text-stroke:0.15px #000000;">,</span>
<span style="position:absolute;left:464.45px;top:390.00px;font-size:12.4px;line-height:12.4px;color:#000000;transform:scaleX(1.1595);-webkit-text-stroke:0.15px #000000;">,</span>
<span style="position:absolute;left:468.45px;top:390.00px;font-size:12.4px;line-height:12.4px;color:#000000;transform:scaleX(1.1595);-webkit-text-stroke:0.15px #000000;">,</span>
<span style="position:absolute;left:472.44px;top:390.00px;font-size:12.4px;line-height:12.4px;color:#000000;transform:scaleX(1.1595);-webkit-text-stroke:0.15px #000000;">,</span>
<span style="position:absolute;left:476.44px;top:390.00px;font-size:12.4px;line-height:12.4px;color:#000000;transform:scaleX(1.1595);-webkit-text-stroke:0.15px #000000;">,</span>
<span style="position:absolute;left:480.43px;top:390.00px;font-size:12.4px;line-height:12.4px;color:#000000;transform:scaleX(1.1595);-webkit-text-stroke:0.15px #000000;">,</span>
<span style="position:absolute;left:484.43px;top:390.00px;font-size:12.4px;line-height:12.4px;color:#000000;transform:scaleX(1.1595);-webkit-text-stroke:0.15px #000000;">,</span>
<span style="position:absolute;left:488.42px;top:390.00px;font-size:12.4px;line-height:12.4px;color:#000000;transform:scaleX(1.1595);-webkit-text-stroke:0.15px #000000;">,</span>
<span style="position:absolute;left:492.42px;top:390.00px;font-size:12.4px;line-height:12.4px;color:#000000;transform:scaleX(1.1595);-webkit-text-stroke:0.15px #000000;">,</span>
<span style="position:absolute;left:496.41px;top:390.00px;font-size:12.4px;line-height:12.4px;color:#000000;transform:scaleX(1.1595);-webkit-text-stroke:0.15px #000000;">,</span>
<span style="position:absolute;left:500.41px;top:390.00px;font-size:12.4px;line-height:12.4px;color:#000000;transform:scaleX(1.1595);-webkit-text-stroke:0.15px #000000;">,</span>
<span style="position:absolute;left:29.00px;top:410.00px;font-size:12.4px;line-height:12.4px;color:#000000;transform:scaleX(1.0309);-webkit-text-stroke:0.15px #000000;">DE0001135069,</span>
<span style="position:absolute;left:120.45px;top:410.00px;font-size:12.4px;line-height:12.4px;color:#000000;transform:scaleX(1.0016);-webkit-text-stroke:0.15px #000000;">&quot;CREATE&quot;,</span>
<span style="position:absolute;left:182.17px;top:410.00px;font-size:12.4px;line-height:12.4px;color:#000000;transform:scaleX(1.1455);-webkit-text-stroke:0.15px #000000;">&quot;Festlegung Vertreiberzielmarkt&quot;,</span>
<span style="position:absolute;left:388.83px;top:410.00px;font-size:12.4px;line-height:12.4px;color:#000000;transform:scaleX(1.0613);-webkit-text-stroke:0.15px #000000;">&quot;2018-01-04 12:26:32.000000&quot;,</span>
<span style="position:absolute;left:571.60px;top:410.00px;font-size:12.4px;line-height:12.4px;color:#000000;transform:scaleX(1.1645);-webkit-text-stroke:0.15px #000000;">,</span>
<span style="position:absolute;left:575.61px;top:410.00px;font-size:12.4px;line-height:12.4px;color:#000000;transform:scaleX(1.1645);-webkit-text-stroke:0.15px #000000;">,</span>
<span style="position:absolute;left:579.62px;top:410.00px;font-size:12.4px;line-height:12.4px;color:#000000;transform:scaleX(1.1645);-webkit-text-stroke:0.15px #000000;">,</span>
<span style="position:absolute;left:583.64px;top:410.00px;font-size:12.4px;line-height:12.4px;color:#000000;transform:scaleX(1.1645);-webkit-text-stroke:0.15px #000000;">,</span>
<span style="position:absolute;left:587.65px;top:410.00px;font-size:12.4px;line-height:12.4px;color:#000000;transform:scaleX(1.1645);-webkit-text-stroke:0.15px #000000;">,</span>
<span style="position:absolute;left:591.66px;top:410.00px;font-size:12.4px;line-height:12.4px;color:#000000;transform:scaleX(1.1645);-webkit-text-stroke:0.15px #000000;">,</span>
<span style="position:absolute;left:595.67px;top:410.00px;font-size:12.4px;line-height:12.4px;color:#000000;transform:scaleX(1.1645);-webkit-text-stroke:0.15px #000000;">,</span>
<span style="position:absolute;left:599.68px;top:410.00px;font-size:12.4px;line-height:12.4px;color:#000000;transform:scaleX(1.1645);-webkit-text-stroke:0.15px #000000;">,</span>
<span style="position:absolute;left:603.69px;top:410.00px;font-size:12.4px;line-height:12.4px;color:#000000;transform:scaleX(1.1645);-webkit-text-stroke:0.15px #000000;">,</span>
<span style="position:absolute;left:607.71px;top:410.00px;font-size:12.4px;line-height:12.4px;color:#000000;transform:scaleX(1.1645);-webkit-text-stroke:0.15px #000000;">,</span>
<span style="position:absolute;left:611.72px;top:410.00px;font-size:12.4px;line-height:12.4px;color:#000000;transform:scaleX(1.1645);-webkit-text-stroke:0.15px #000000;">,</span>
<span style="position:absolute;left:615.73px;top:410.00px;font-size:12.4px;line-height:12.4px;color:#000000;transform:scaleX(1.1645);-webkit-text-stroke:0.15px #000000;">,</span>
<span style="position:absolute;left:619.74px;top:410.00px;font-size:12.4px;line-height:12.4px;color:#000000;transform:scaleX(1.1645);-webkit-text-stroke:0.15px #000000;">,</span>
<span style="position:absolute;left:623.75px;top:410.00px;font-size:12.4px;line-height:12.4px;color:#000000;transform:scaleX(1.1645);-webkit-text-stroke:0.15px #000000;">,</span>
<span style="position:absolute;left:627.76px;top:410.00px;font-size:12.4px;line-height:12.4px;color:#000000;transform:scaleX(1.1645);-webkit-text-stroke:0.15px #000000;">,</span>
<span style="position:absolute;left:631.78px;top:410.00px;font-size:12.4px;line-height:12.4px;color:#000000;transform:scaleX(1.1645);-webkit-text-stroke:0.15px #000000;">,</span>
<span style="position:absolute;left:635.79px;top:410.00px;font-size:12.4px;line-height:12.4px;color:#000000;transform:scaleX(1.1645);-webkit-text-stroke:0.15px #000000;">,</span>
<span style="position:absolute;left:29.00px;top:430.00px;font-size:12.4px;line-height:12.4px;color:#000000;transform:scaleX(1.0158);-webkit-text-stroke:0.15px #000000;">DE0005103006,</span>
<span style="position:absolute;left:120.05px;top:430.00px;font-size:12.4px;line-height:12.4px;color:#000000;transform:scaleX(1.0468);-webkit-text-stroke:0.15px #000000;">&quot;UPDATE&quot;,</span>
<span style="position:absolute;left:184.56px;top:430.00px;font-size:12.4px;line-height:12.4px;color:#000000;transform:scaleX(1.1811);-webkit-text-stroke:0.15px #000000;">&quot;comment&quot;,</span>
<span style="position:absolute;left:259.25px;top:430.00px;font-size:12.4px;line-height:12.4px;color:#000000;transform:scaleX(1.0566);-webkit-text-stroke:0.15px #000000;">&quot;2018-01-29 14:27:41.000000&quot;,</span>
<span style="position:absolute;left:441.21px;top:430.00px;font-size:12.4px;line-height:12.4px;color:#000000;transform:scaleX(1.1943);-webkit-text-stroke:0.15px #000000;">&quot;9&quot;,</span>
<span style="position:absolute;left:464.07px;top:430.00px;font-size:12.4px;line-height:12.4px;color:#000000;transform:scaleX(1.1943);-webkit-text-stroke:0.15px #000000;">&quot;1&quot;,</span>
<span style="position:absolute;left:486.94px;top:430.00px;font-size:12.4px;line-height:12.4px;color:#000000;transform:scaleX(1.1943);-webkit-text-stroke:0.15px #000000;">&quot;6&quot;,</span>
<span style="position:absolute;left:509.80px;top:430.00px;font-size:12.4px;line-height:12.4px;color:#000000;transform:scaleX(1.1943);-webkit-text-stroke:0.15px #000000;">&quot;2&quot;,</span>
<span style="position:absolute;left:532.67px;top:430.00px;font-size:12.4px;line-height:12.4px;color:#000000;transform:scaleX(1.1943);-webkit-text-stroke:0.15px #000000;">&quot;2&quot;,</span>
<span style="position:absolute;left:555.53px;top:430.00px;font-size:12.4px;line-height:12.4px;color:#000000;transform:scaleX(1.1943);-webkit-text-stroke:0.15px #000000;">&quot;6&quot;,</span>
<span style="position:absolute;left:578.40px;top:430.00px;font-size:12.4px;line-height:12.4px;color:#000000;transform:scaleX(1.1943);-webkit-text-stroke:0.15px #000000;">&quot;2&quot;,</span>
<span style="position:absolute;left:601.26px;top:430.00px;font-size:12.4px;line-height:12.4px;color:#000000;transform:scaleX(1.1943);-webkit-text-stroke:0.15px #000000;">&quot;2&quot;,</span>
<span style="position:absolute;left:624.13px;top:430.00px;font-size:12.4px;line-height:12.4px;color:#000000;transform:scaleX(1.2020);-webkit-text-stroke:0.15px #000000;">&quot;1&quot;</span>
<span style="position:absolute;left:29.00px;top:450.00px;font-size:12.4px;line-height:12.4px;color:#000000;transform:scaleX(1.0165);-webkit-text-stroke:0.15px #000000;">DE0005140008,</span>
<span style="position:absolute;left:120.11px;top:450.00px;font-size:12.4px;line-height:12.4px;color:#000000;transform:scaleX(1.0475);-webkit-text-stroke:0.15px #000000;">&quot;UPDATE&quot;,</span>
<span style="position:absolute;left:184.66px;top:450.00px;font-size:12.4px;line-height:12.4px;color:#000000;transform:scaleX(1.1832);-webkit-text-stroke:0.15px #000000;">&quot;Test&quot;,</span>
<span style="position:absolute;left:226.06px;top:450.00px;font-size:12.4px;line-height:12.4px;color:#000000;transform:scaleX(1.0573);-webkit-text-stroke:0.15px #000000;">&quot;2017-12-06 14:35:39.000000&quot;,</span>
<span style="position:absolute;left:408.15px;top:450.00px;font-size:12.4px;line-height:12.4px;color:#000000;transform:scaleX(1.1952);-webkit-text-stroke:0.15px #000000;">&quot;1&quot;,</span>
<span style="position:absolute;left:431.03px;top:450.00px;font-size:12.4px;line-height:12.4px;color:#000000;transform:scaleX(1.1952);-webkit-text-stroke:0.15px #000000;">&quot;6&quot;,</span>
<span style="position:absolute;left:453.91px;top:450.00px;font-size:12.4px;line-height:12.4px;color:#000000;transform:scaleX(1.1952);-webkit-text-stroke:0.15px #000000;">&quot;2&quot;,</span>
<span style="position:absolute;left:476.79px;top:450.00px;font-size:12.4px;line-height:12.4px;color:#000000;transform:scaleX(1.1952);-webkit-text-stroke:0.15px #000000;">&quot;2&quot;,</span>
<span style="position:absolute;left:499.67px;top:450.00px;font-size:12.4px;line-height:12.4px;color:#000000;transform:scaleX(1.1952);-webkit-text-stroke:0.15px #000000;">&quot;6&quot;,</span>
<span style="position:absolute;left:522.55px;top:450.00px;font-size:12.4px;line-height:12.4px;color:#000000;transform:scaleX(1.1952);-webkit-text-stroke:0.15px #000000;">&quot;2&quot;,</span>
<span style="position:absolute;left:545.43px;top:450.00px;font-size:12.4px;line-height:12.4px;color:#000000;transform:scaleX(1.1952);-webkit-text-stroke:0.15px #000000;">&quot;4&quot;,</span>
<span style="position:absolute;left:568.32px;top:450.00px;font-size:12.4px;line-height:12.4px;color:#000000;transform:scaleX(1.2029);-webkit-text-stroke:0.15px #000000;">&quot;1&quot;</span>
<span style="position:absolute;left:29.00px;top:470.00px;font-size:12.4px;line-height:12.4px;color:#000000;transform:scaleX(1.0162);-webkit-text-stroke:0.15px #000000;">DE0005140008,</span>
<span style="position:absolute;left:120.08px;top:470.00px;font-size:12.4px;line-height:12.4px;color:#000000;transform:scaleX(1.0472);-webkit-text-stroke:0.15px #000000;">&quot;UPDATE&quot;,</span>
<span style="position:absolute;left:184.62px;top:470.00px;font-size:12.4px;line-height:12.4px;color:#000000;transform:scaleX(1.1574);-webkit-text-stroke:0.15px #000000;">&quot;Test2&quot;,</span>
<span style="position:absolute;left:233.10px;top:470.00px;font-size:12.4px;line-height:12.4px;color:#000000;transform:scaleX(1.0570);-webkit-text-stroke:0.15px #000000;">&quot;2017-12-06 14:36:24.000000&quot;,</span>
<span style="position:absolute;left:415.12px;top:470.00px;font-size:12.4px;line-height:12.4px;color:#000000;transform:scaleX(1.1948);-webkit-text-stroke:0.15px #000000;">&quot;1&quot;,</span>
<span style="position:absolute;left:438.00px;top:470.00px;font-size:12.4px;line-height:12.4px;color:#000000;transform:scaleX(1.1948);-webkit-text-stroke:0.15px #000000;">&quot;6&quot;,</span>
<span style="position:absolute;left:460.87px;top:470.00px;font-size:12.4px;line-height:12.4px;color:#000000;transform:scaleX(1.1948);-webkit-text-stroke:0.15px #000000;">&quot;2&quot;,</span>
<span style="position:absolute;left:483.75px;top:470.00px;font-size:12.4px;line-height:12.4px;color:#000000;transform:scaleX(1.1948);-webkit-text-stroke:0.15px #000000;">&quot;2&quot;,</span>
<span style="position:absolute;left:506.62px;top:470.00px;font-size:12.4px;line-height:12.4px;color:#000000;transform:scaleX(1.1948);-webkit-text-stroke:0.15px #000000;">&quot;6&quot;,</span>
<span style="position:absolute;left:529.50px;top:470.00px;font-size:12.4px;line-height:12.4px;color:#000000;transform:scaleX(1.1948);-webkit-text-stroke:0.15px #000000;">&quot;2&quot;,</span>
<span style="position:absolute;left:552.37px;top:470.00px;font-size:12.4px;line-height:12.4px;color:#000000;transform:scaleX(1.1518);-webkit-text-stroke:0.15px #000000;">&quot;4,</span>
<span style="position:absolute;left:569.35px;top:470.00px;font-size:12.4px;line-height:12.4px;color:#000000;transform:scaleX(1.0722);-webkit-text-stroke:0.15px #000000;">3,</span>
<span style="position:absolute;left:580.44px;top:470.00px;font-size:12.4px;line-height:12.4px;color:#000000;transform:scaleX(1.1518);-webkit-text-stroke:0.15px #000000;">2&quot;,</span>
<span style="position:absolute;left:597.42px;top:470.00px;font-size:12.4px;line-height:12.4px;color:#000000;transform:scaleX(1.2025);-webkit-text-stroke:0.15px #000000;">&quot;1&quot;</span>
<span style="position:absolute;left:29.00px;top:490.00px;font-size:12.4px;line-height:12.4px;color:#000000;transform:scaleX(1.0163);-webkit-text-stroke:0.15px #000000;">DE0005140008,</span>
<span style="position:absolute;left:120.10px;top:490.00px;font-size:12.4px;line-height:12.4px;color:#000000;transform:scaleX(1.0474);-webkit-text-stroke:0.15px #000000;">&quot;UPDATE&quot;,</span>
<span style="position:absolute;left:184.64px;top:490.00px;font-size:12.4px;line-height:12.4px;color:#000000;transform:scaleX(1.1576);-webkit-text-stroke:0.15px #000000;">&quot;Test3&quot;,</span>
<span style="position:absolute;left:233.13px;top:490.00px;font-size:12.4px;line-height:12.4px;color:#000000;transform:scaleX(1.0572);-webkit-text-stroke:0.15px #000000;">&quot;2017-12-06 14:37:14.000000&quot;,</span>
<span style="position:absolute;left:415.18px;top:490.00px;font-size:12.4px;line-height:12.4px;color:#000000;transform:scaleX(1.1950);-webkit-text-stroke:0.15px #000000;">&quot;1&quot;,</span>
<span style="position:absolute;left:438.06px;top:490.00px;font-size:12.4px;line-height:12.4px;color:#000000;transform:scaleX(1.1950);-webkit-text-stroke:0.15px #000000;">&quot;6&quot;,</span>
<span style="position:absolute;left:460.94px;top:490.00px;font-size:12.4px;line-height:12.4px;color:#000000;transform:scaleX(1.1950);-webkit-text-stroke:0.15px #000000;">&quot;2&quot;,</span>
<span style="position:absolute;left:483.82px;top:490.00px;font-size:12.4px;line-height:12.4px;color:#000000;transform:scaleX(1.1950);-webkit-text-stroke:0.15px #000000;">&quot;2&quot;,</span>
<span style="position:absolute;left:506.70px;top:490.00px;font-size:12.4px;line-height:12.4px;color:#000000;transform:scaleX(1.1950);-webkit-text-stroke:0.15px #000000;">&quot;6&quot;,</span>
<span style="position:absolute;left:529.57px;top:490.00px;font-size:12.4px;line-height:12.4px;color:#000000;transform:scaleX(1.1950);-webkit-text-stroke:0.15px #000000;">&quot;2&quot;,</span>
<span style="position:absolute;left:552.45px;top:490.00px;font-size:12.4px;line-height:12.4px;color:#000000;transform:scaleX(1.1520);-webkit-text-stroke:0.15px #000000;">&quot;3,</span>
<span style="position:absolute;left:569.43px;top:490.00px;font-size:12.4px;line-height:12.4px;color:#000000;transform:scaleX(1.1520);-webkit-text-stroke:0.15px #000000;">2&quot;,</span>
<span style="position:absolute;left:586.42px;top:490.00px;font-size:12.4px;line-height:12.4px;color:#000000;transform:scaleX(1.2027);-webkit-text-stroke:0.15px #000000;">&quot;1&quot;</span>
<span style="position:absolute;left:29.00px;top:510.00px;font-size:12.4px;line-height:12.4px;color:#000000;transform:scaleX(1.0138);-webkit-text-stroke:0.15px #000000;">DE0005140008,</span>
<span style="position:absolute;left:119.87px;top:510.00px;font-size:12.4px;line-height:12.4px;color:#000000;transform:scaleX(1.0448);-webkit-text-stroke:0.15px #000000;">&quot;UPDATE&quot;,</span>
<span style="position:absolute;left:184.25px;top:510.00px;font-size:12.4px;line-height:12.4px;color:#000000;transform:scaleX(1.1374);-webkit-text-stroke:0.15px #000000;">&quot;Test back&quot;,</span>
<span style="position:absolute;left:257.76px;top:510.00px;font-size:12.4px;line-height:12.4px;color:#000000;transform:scaleX(1.0545);-webkit-text-stroke:0.15px #000000;">&quot;2017-12-06 14:58:13.000000&quot;,</span>
<span style="position:absolute;left:439.36px;top:510.00px;font-size:12.4px;line-height:12.4px;color:#000000;transform:scaleX(1.1920);-webkit-text-stroke:0.15px #000000;">&quot;1&quot;,</span>
<span style="position:absolute;left:462.18px;top:510.00px;font-size:12.4px;line-height:12.4px;color:#000000;transform:scaleX(1.1920);-webkit-text-stroke:0.15px #000000;">&quot;6&quot;,</span>
<span style="position:absolute;left:485.00px;top:510.00px;font-size:12.4px;line-height:12.4px;color:#000000;transform:scaleX(1.1920);-webkit-text-stroke:0.15px #000000;">&quot;2&quot;,</span>
<span style="position:absolute;left:507.82px;top:510.00px;font-size:12.4px;line-height:12.4px;color:#000000;transform:scaleX(1.1920);-webkit-text-stroke:0.15px #000000;">&quot;2&quot;,</span>
<span style="position:absolute;left:530.64px;top:510.00px;font-size:12.4px;line-height:12.4px;color:#000000;transform:scaleX(1.1920);-webkit-text-stroke:0.15px #000000;">&quot;6&quot;,</span>
<span style="position:absolute;left:553.46px;top:510.00px;font-size:12.4px;line-height:12.4px;color:#000000;transform:scaleX(1.1920);-webkit-text-stroke:0.15px #000000;">&quot;2&quot;,</span>
<span style="position:absolute;left:576.28px;top:510.00px;font-size:12.4px;line-height:12.4px;color:#000000;transform:scaleX(1.1491);-webkit-text-stroke:0.15px #000000;">&quot;3,</span>
<span style="position:absolute;left:593.22px;top:510.00px;font-size:12.4px;line-height:12.4px;color:#000000;transform:scaleX(1.1491);-webkit-text-stroke:0.15px #000000;">2&quot;,</span>
<span style="position:absolute;left:610.17px;top:510.00px;font-size:12.4px;line-height:12.4px;color:#000000;transform:scaleX(1.1997);-webkit-text-stroke:0.15px #000000;">&quot;3&quot;</span>
<span style="position:absolute;left:29.00px;top:530.00px;font-size:12.4px;line-height:12.4px;color:#000000;transform:scaleX(1.0118);-webkit-text-stroke:0.15px #000000;">DE0005190003,</span>
<span style="position:absolute;left:119.69px;top:530.00px;font-size:12.4px;line-height:12.4px;color:#000000;transform:scaleX(1.0427);-webkit-text-stroke:0.15px #000000;">&quot;UPDATE&quot;,</span>
<span style="position:absolute;left:183.95px;top:530.00px;font-size:12.4px;line-height:12.4px;color:#000000;transform:scaleX(1.1351);-webkit-text-stroke:0.15px #000000;">&quot;This is a put comment&quot;,</span>
<span style="position:absolute;left:335.53px;top:530.00px;font-size:12.4px;line-height:12.4px;color:#000000;transform:scaleX(1.0581);-webkit-text-stroke:0.15px #000000;">&quot;2017-11-07 16:04:41.000000&quot;,</span>
<span style="position:absolute;left:516.77px;top:530.00px;font-size:12.4px;line-height:12.4px;color:#000000;transform:scaleX(1.1896);-webkit-text-stroke:0.15px #000000;">&quot;1&quot;,</span>
<span style="position:absolute;left:539.55px;top:530.00px;font-size:12.4px;line-height:12.4px;color:#000000;transform:scaleX(1.1896);-webkit-text-stroke:0.15px #000000;">&quot;5&quot;,</span>
<span style="position:absolute;left:562.32px;top:530.00px;font-size:12.4px;line-height:12.4px;color:#000000;transform:scaleX(1.1896);-webkit-text-stroke:0.15px #000000;">&quot;2&quot;,</span>
<span style="position:absolute;left:585.10px;top:530.00px;font-size:12.4px;line-height:12.4px;color:#000000;transform:scaleX(1.1896);-webkit-text-stroke:0.15px #000000;">&quot;2&quot;,</span>
<span style="position:absolute;left:607.88px;top:530.00px;font-size:12.4px;line-height:12.4px;color:#000000;transform:scaleX(1.1896);-webkit-text-stroke:0.15px #000000;">&quot;5&quot;,</span>
<span style="position:absolute;left:630.65px;top:530.00px;font-size:12.4px;line-height:12.4px;color:#000000;transform:scaleX(1.1896);-webkit-text-stroke:0.15px #000000;">&quot;2&quot;,</span>
<span style="position:absolute;left:653.43px;top:530.00px;font-size:12.4px;line-height:12.4px;color:#000000;transform:scaleX(1.1896);-webkit-text-stroke:0.15px #000000;">&quot;4&quot;,</span>
<span style="position:absolute;left:676.20px;top:530.00px;font-size:12.4px;line-height:12.4px;color:#000000;transform:scaleX(1.1973);-webkit-text-stroke:0.15px #000000;">&quot;1&quot;</span>
<span style="position:absolute;left:29.00px;top:550.00px;font-size:12.4px;line-height:12.4px;color:#000000;transform:scaleX(1.0118);-webkit-text-stroke:0.15px #000000;">DE0005190003,</span>
<span style="position:absolute;left:119.69px;top:550.00px;font-size:12.4px;line-height:12.4px;color:#000000;transform:scaleX(1.0427);-webkit-text-stroke:0.15px #000000;">&quot;UPDATE&quot;,</span>
<span style="position:absolute;left:183.95px;top:550.00px;font-size:12.4px;line-height:12.4px;color:#000000;transform:scaleX(1.1351);-webkit-text-stroke:0.15px #000000;">&quot;This is a put comment&quot;,</span>
<span style="position:absolute;left:335.53px;top:550.00px;font-size:12.4px;line-height:12.4px;color:#000000;transform:scaleX(1.0581);-webkit-text-stroke:0.15px #000000;">&quot;2017-11-07 16:22:12.000000&quot;,</span>
<span style="position:absolute;left:516.77px;top:550.00px;font-size:12.4px;line-height:12.4px;color:#000000;transform:scaleX(1.1896);-webkit-text-stroke:0.15px #000000;">&quot;1&quot;,</span>
<span style="position:absolute;left:539.55px;top:550.00px;font-size:12.4px;line-height:12.4px;color:#000000;transform:scaleX(1.1896);-webkit-text-stroke:0.15px #000000;">&quot;1&quot;,</span>
<span style="position:absolute;left:562.32px;top:550.00px;font-size:12.4px;line-height:12.4px;color:#000000;transform:scaleX(1.1896);-webkit-text-stroke:0.15px #000000;">&quot;1&quot;,</span>
<span style="position:absolute;left:585.10px;top:550.00px;font-size:12.4px;line-height:12.4px;color:#000000;transform:scaleX(1.1896);-webkit-text-stroke:0.15px #000000;">&quot;1&quot;,</span>
<span style="position:absolute;left:607.88px;top:550.00px;font-size:12.4px;line-height:12.4px;color:#000000;transform:scaleX(1.1896);-webkit-text-stroke:0.15px #000000;">&quot;1&quot;,</span>
<span style="position:absolute;left:630.65px;top:550.00px;font-size:12.4px;line-height:12.4px;color:#000000;transform:scaleX(1.1896);-webkit-text-stroke:0.15px #000000;">&quot;1&quot;,</span>
<span style="position:absolute;left:653.43px;top:550.00px;font-size:12.4px;line-height:12.4px;color:#000000;transform:scaleX(1.1896);-webkit-text-stroke:0.15px #000000;">&quot;1&quot;,</span>
<span style="position:absolute;left:676.20px;top:550.00px;font-size:12.4px;line-height:12.4px;color:#000000;transform:scaleX(1.1973);-webkit-text-stroke:0.15px #000000;">&quot;1&quot;</span>
<span style="position:absolute;left:29.00px;top:570.00px;font-size:12.4px;line-height:12.4px;color:#000000;transform:scaleX(1.0118);-webkit-text-stroke:0.15px #000000;">DE0005190003,</span>
<span style="position:absolute;left:119.69px;top:570.00px;font-size:12.4px;line-height:12.4px;color:#000000;transform:scaleX(1.0427);-webkit-text-stroke:0.15px #000000;">&quot;UPDATE&quot;,</span>
<span style="position:absolute;left:183.95px;top:570.00px;font-size:12.4px;line-height:12.4px;color:#000000;transform:scaleX(1.1351);-webkit-text-stroke:0.15px #000000;">&quot;This is a put comment&quot;,</span>
<span style="position:absolute;left:335.53px;top:570.00px;font-size:12.4px;line-height:12.4px;color:#000000;transform:scaleX(1.0581);-webkit-text-stroke:0.15px #000000;">&quot;2017-11-07 16:43:28.000000&quot;,</span>
<span style="position:absolute;left:516.77px;top:570.00px;font-size:12.4px;line-height:12.4px;color:#000000;transform:scaleX(1.1896);-webkit-text-stroke:0.15px #000000;">&quot;1&quot;,</span>
<span style="position:absolute;left:539.55px;top:570.00px;font-size:12.4px;line-height:12.4px;color:#000000;transform:scaleX(1.1896);-webkit-text-stroke:0.15px #000000;">&quot;1&quot;,</span>
<span style="position:absolute;left:562.32px;top:570.00px;font-size:12.4px;line-height:12.4px;color:#000000;transform:scaleX(1.1896);-webkit-text-stroke:0.15px #000000;">&quot;1&quot;,</span>
<span style="position:absolute;left:585.10px;top:570.00px;font-size:12.4px;line-height:12.4px;color:#000000;transform:scaleX(1.1896);-webkit-text-stroke:0.15px #000000;">&quot;1&quot;,</span>
<span style="position:absolute;left:607.88px;top:570.00px;font-size:12.4px;line-height:12.4px;color:#000000;transform:scaleX(1.1896);-webkit-text-stroke:0.15px #000000;">&quot;1&quot;,</span>
<span style="position:absolute;left:630.65px;top:570.00px;font-size:12.4px;line-height:12.4px;color:#000000;transform:scaleX(1.1896);-webkit-text-stroke:0.15px #000000;">&quot;1&quot;,</span>
<span style="position:absolute;left:653.43px;top:570.00px;font-size:12.4px;line-height:12.4px;color:#000000;transform:scaleX(1.1896);-webkit-text-stroke:0.15px #000000;">&quot;1&quot;,</span>
<span style="position:absolute;left:676.20px;top:570.00px;font-size:12.4px;line-height:12.4px;color:#000000;transform:scaleX(1.1973);-webkit-text-stroke:0.15px #000000;">&quot;1&quot;</span>
<span style="position:absolute;left:29.00px;top:590.00px;font-size:12.4px;line-height:12.4px;color:#000000;transform:scaleX(1.0118);-webkit-text-stroke:0.15px #000000;">DE0005190003,</span>
<span style="position:absolute;left:119.69px;top:590.00px;font-size:12.4px;line-height:12.4px;color:#000000;transform:scaleX(1.0427);-webkit-text-stroke:0.15px #000000;">&quot;UPDATE&quot;,</span>
<span style="position:absolute;left:183.95px;top:590.00px;font-size:12.4px;line-height:12.4px;color:#000000;transform:scaleX(1.1351);-webkit-text-stroke:0.15px #000000;">&quot;This is a put comment&quot;,</span>
<span style="position:absolute;left:335.53px;top:590.00px;font-size:12.4px;line-height:12.4px;color:#000000;transform:scaleX(1.0581);-webkit-text-stroke:0.15px #000000;">&quot;2017-11-07 16:44:10.000000&quot;,</span>
<span style="position:absolute;left:516.77px;top:590.00px;font-size:12.4px;line-height:12.4px;color:#000000;transform:scaleX(1.1896);-webkit-text-stroke:0.15px #000000;">&quot;1&quot;,</span>
<span style="position:absolute;left:539.55px;top:590.00px;font-size:12.4px;line-height:12.4px;color:#000000;transform:scaleX(1.1896);-webkit-text-stroke:0.15px #000000;">&quot;1&quot;,</span>
<span style="position:absolute;left:562.32px;top:590.00px;font-size:12.4px;line-height:12.4px;color:#000000;transform:scaleX(1.1896);-webkit-text-stroke:0.15px #000000;">&quot;1&quot;,</span>
<span style="position:absolute;left:585.10px;top:590.00px;font-size:12.4px;line-height:12.4px;color:#000000;transform:scaleX(1.1896);-webkit-text-stroke:0.15px #000000;">&quot;1&quot;,</span>
<span style="position:absolute;left:607.88px;top:590.00px;font-size:12.4px;line-height:12.4px;color:#000000;transform:scaleX(1.1896);-webkit-text-stroke:0.15px #000000;">&quot;1&quot;,</span>
<span style="position:absolute;left:630.65px;top:590.00px;font-size:12.4px;line-height:12.4px;color:#000000;transform:scaleX(1.1896);-webkit-text-stroke:0.15px #000000;">&quot;1&quot;,</span>
<span style="position:absolute;left:653.43px;top:590.00px;font-size:12.4px;line-height:12.4px;color:#000000;transform:scaleX(1.1896);-webkit-text-stroke:0.15px #000000;">&quot;1&quot;,</span>
<span style="position:absolute;left:676.20px;top:590.00px;font-size:12.4px;line-height:12.4px;color:#000000;transform:scaleX(1.1973);-webkit-text-stroke:0.15px #000000;">&quot;1&quot;</span>
<span style="position:absolute;left:29.00px;top:610.00px;font-size:12.4px;line-height:12.4px;color:#000000;transform:scaleX(1.0118);-webkit-text-stroke:0.15px #000000;">DE0005190003,</span>
<span style="position:absolute;left:119.69px;top:610.00px;font-size:12.4px;line-height:12.4px;color:#000000;transform:scaleX(1.0427);-webkit-text-stroke:0.15px #000000;">&quot;UPDATE&quot;,</span>
<span style="position:absolute;left:183.95px;top:610.00px;font-size:12.4px;line-height:12.4px;color:#000000;transform:scaleX(1.1351);-webkit-text-stroke:0.15px #000000;">&quot;This is a put comment&quot;,</span>
<span style="position:absolute;left:335.53px;top:610.00px;font-size:12.4px;line-height:12.4px;color:#000000;transform:scaleX(1.0638);-webkit-text-stroke:0.15px #000000;">&quot;2017-11-08 10:11:24.000000&quot;,</span>
<span style="position:absolute;left:516.77px;top:610.00px;font-size:12.4px;line-height:12.4px;color:#000000;transform:scaleX(1.1896);-webkit-text-stroke:0.15px #000000;">&quot;1&quot;,</span>
<span style="position:absolute;left:539.55px;top:610.00px;font-size:12.4px;line-height:12.4px;color:#000000;transform:scaleX(1.1896);-webkit-text-stroke:0.15px #000000;">&quot;1&quot;,</span>
<span style="position:absolute;left:562.32px;top:610.00px;font-size:12.4px;line-height:12.4px;color:#000000;transform:scaleX(1.1896);-webkit-text-stroke:0.15px #000000;">&quot;1&quot;,</span>
<span style="position:absolute;left:585.10px;top:610.00px;font-size:12.4px;line-height:12.4px;color:#000000;transform:scaleX(1.1896);-webkit-text-stroke:0.15px #000000;">&quot;1&quot;,</span>
<span style="position:absolute;left:607.88px;top:610.00px;font-size:12.4px;line-height:12.4px;color:#000000;transform:scaleX(1.1896);-webkit-text-stroke:0.15px #000000;">&quot;1&quot;,</span>
<span style="position:absolute;left:630.65px;top:610.00px;font-size:12.4px;line-height:12.4px;color:#000000;transform:scaleX(1.1896);-webkit-text-stroke:0.15px #000000;">&quot;1&quot;,</span>
<span style="position:absolute;left:653.43px;top:610.00px;font-size:12.4px;line-height:12.4px;color:#000000;transform:scaleX(1.1896);-webkit-text-stroke:0.15px #000000;">&quot;1&quot;,</span>
<span style="position:absolute;left:676.20px;top:610.00px;font-size:12.4px;line-height:12.4px;color:#000000;transform:scaleX(1.1973);-webkit-text-stroke:0.15px #000000;">&quot;1&quot;</span>
<span style="position:absolute;left:29.00px;top:630.00px;font-size:12.4px;line-height:12.4px;color:#000000;transform:scaleX(1.0118);-webkit-text-stroke:0.15px #000000;">DE0005190003,</span>
<span style="position:absolute;left:119.69px;top:630.00px;font-size:12.4px;line-height:12.4px;color:#000000;transform:scaleX(1.0427);-webkit-text-stroke:0.15px #000000;">&quot;UPDATE&quot;,</span>
<span style="position:absolute;left:183.95px;top:630.00px;font-size:12.4px;line-height:12.4px;color:#000000;transform:scaleX(1.1351);-webkit-text-stroke:0.15px #000000;">&quot;This is a put comment&quot;,</span>
<span style="position:absolute;left:335.53px;top:630.00px;font-size:12.4px;line-height:12.4px;color:#000000;transform:scaleX(1.0581);-webkit-text-stroke:0.15px #000000;">&quot;2017-11-08 10:12:03.000000&quot;,</span>
<span style="position:absolute;left:516.77px;top:630.00px;font-size:12.4px;line-height:12.4px;color:#000000;transform:scaleX(1.1896);-webkit-text-stroke:0.15px #000000;">&quot;1&quot;,</span>
<span style="position:absolute;left:539.55px;top:630.00px;font-size:12.4px;line-height:12.4px;color:#000000;transform:scaleX(1.1896);-webkit-text-stroke:0.15px #000000;">&quot;1&quot;,</span>
<span style="position:absolute;left:562.32px;top:630.00px;font-size:12.4px;line-height:12.4px;color:#000000;transform:scaleX(1.1896);-webkit-text-stroke:0.15px #000000;">&quot;1&quot;,</span>
<span style="position:absolute;left:585.10px;top:630.00px;font-size:12.4px;line-height:12.4px;color:#000000;transform:scaleX(1.1896);-webkit-text-stroke:0.15px #000000;">&quot;1&quot;,</span>
<span style="position:absolute;left:607.88px;top:630.00px;font-size:12.4px;line-height:12.4px;color:#000000;transform:scaleX(1.1896);-webkit-text-stroke:0.15px #000000;">&quot;1&quot;,</span>
<span style="position:absolute;left:630.65px;top:630.00px;font-size:12.4px;line-height:12.4px;color:#000000;transform:scaleX(1.1896);-webkit-text-stroke:0.15px #000000;">&quot;1&quot;,</span>
<span style="position:absolute;left:653.43px;top:630.00px;font-size:12.4px;line-height:12.4px;color:#000000;transform:scaleX(1.1896);-webkit-text-stroke:0.15px #000000;">&quot;1&quot;,</span>
<span style="position:absolute;left:676.20px;top:630.00px;font-size:12.4px;line-height:12.4px;color:#000000;transform:scaleX(1.1973);-webkit-text-stroke:0.15px #000000;">&quot;1&quot;</span>
<span style="position:absolute;left:29.00px;top:650.00px;font-size:12.4px;line-height:12.4px;color:#000000;transform:scaleX(1.0118);-webkit-text-stroke:0.15px #000000;">DE0005190003,</span>
<span style="position:absolute;left:119.69px;top:650.00px;font-size:12.4px;line-height:12.4px;color:#000000;transform:scaleX(1.0427);-webkit-text-stroke:0.15px #000000;">&quot;UPDATE&quot;,</span>
<span style="position:absolute;left:183.95px;top:650.00px;font-size:12.4px;line-height:12.4px;color:#000000;transform:scaleX(1.1351);-webkit-text-stroke:0.15px #000000;">&quot;This is a put comment&quot;,</span>
<span style="position:absolute;left:335.53px;top:650.00px;font-size:12.4px;line-height:12.4px;color:#000000;transform:scaleX(1.0581);-webkit-text-stroke:0.15px #000000;">&quot;2017-11-08 10:12:05.000000&quot;,</span>
<span style="position:absolute;left:516.77px;top:650.00px;font-size:12.4px;line-height:12.4px;color:#000000;transform:scaleX(1.1896);-webkit-text-stroke:0.15px #000000;">&quot;1&quot;,</span>
<span style="position:absolute;left:539.55px;top:650.00px;font-size:12.4px;line-height:12.4px;color:#000000;transform:scaleX(1.1896);-webkit-text-stroke:0.15px #000000;">&quot;1&quot;,</span>
<span style="position:absolute;left:562.32px;top:650.00px;font-size:12.4px;line-height:12.4px;color:#000000;transform:scaleX(1.1896);-webkit-text-stroke:0.15px #000000;">&quot;1&quot;,</span>
<span style="position:absolute;left:585.10px;top:650.00px;font-size:12.4px;line-height:12.4px;color:#000000;transform:scaleX(1.1896);-webkit-text-stroke:0.15px #000000;">&quot;2&quot;,</span>
<span style="position:absolute;left:607.88px;top:650.00px;font-size:12.4px;line-height:12.4px;color:#000000;transform:scaleX(1.1896);-webkit-text-stroke:0.15px #000000;">&quot;1&quot;,</span>
<span style="position:absolute;left:630.65px;top:650.00px;font-size:12.4px;line-height:12.4px;color:#000000;transform:scaleX(1.1896);-webkit-text-stroke:0.15px #000000;">&quot;1&quot;,</span>
<span style="position:absolute;left:653.43px;top:650.00px;font-size:12.4px;line-height:12.4px;color:#000000;transform:scaleX(1.1896);-webkit-text-stroke:0.15px #000000;">&quot;1&quot;,</span>
<span style="position:absolute;left:676.20px;top:650.00px;font-size:12.4px;line-height:12.4px;color:#000000;transform:scaleX(1.1973);-webkit-text-stroke:0.15px #000000;">&quot;1&quot;</span>
<span style="position:absolute;left:29.00px;top:670.00px;font-size:12.4px;line-height:12.4px;color:#000000;transform:scaleX(1.0118);-webkit-text-stroke:0.15px #000000;">DE0005190003,</span>
<span style="position:absolute;left:119.69px;top:670.00px;font-size:12.4px;line-height:12.4px;color:#000000;transform:scaleX(1.0427);-webkit-text-stroke:0.15px #000000;">&quot;UPDATE&quot;,</span>
<span style="position:absolute;left:183.95px;top:670.00px;font-size:12.4px;line-height:12.4px;color:#000000;transform:scaleX(1.1351);-webkit-text-stroke:0.15px #000000;">&quot;This is a put comment&quot;,</span>
<span style="position:absolute;left:335.53px;top:670.00px;font-size:12.4px;line-height:12.4px;color:#000000;transform:scaleX(1.0581);-webkit-text-stroke:0.15px #000000;">&quot;2017-11-08 10:12:49.000000&quot;,</span>
<span style="position:absolute;left:516.77px;top:670.00px;font-size:12.4px;line-height:12.4px;color:#000000;transform:scaleX(1.1896);-webkit-text-stroke:0.15px #000000;">&quot;1&quot;,</span>
<span style="position:absolute;left:539.55px;top:670.00px;font-size:12.4px;line-height:12.4px;color:#000000;transform:scaleX(1.1896);-webkit-text-stroke:0.15px #000000;">&quot;1&quot;,</span>
<span style="position:absolute;left:562.32px;top:670.00px;font-size:12.4px;line-height:12.4px;color:#000000;transform:scaleX(1.1896);-webkit-text-stroke:0.15px #000000;">&quot;1&quot;,</span>
<span style="position:absolute;left:585.10px;top:670.00px;font-size:12.4px;line-height:12.4px;color:#000000;transform:scaleX(1.1896);-webkit-text-stroke:0.15px #000000;">&quot;2&quot;,</span>
<span style="position:absolute;left:607.88px;top:670.00px;font-size:12.4px;line-height:12.4px;color:#000000;transform:scaleX(1.1896);-webkit-text-stroke:0.15px #000000;">&quot;1&quot;,</span>
<span style="position:absolute;left:630.65px;top:670.00px;font-size:12.4px;line-height:12.4px;color:#000000;transform:scaleX(1.1896);-webkit-text-stroke:0.15px #000000;">&quot;1&quot;,</span>
<span style="position:absolute;left:653.43px;top:670.00px;font-size:12.4px;line-height:12.4px;color:#000000;transform:scaleX(1.1896);-webkit-text-stroke:0.15px #000000;">&quot;1&quot;,</span>
<span style="position:absolute;left:676.20px;top:670.00px;font-size:12.4px;line-height:12.4px;color:#000000;transform:scaleX(1.1973);-webkit-text-stroke:0.15px #000000;">&quot;1&quot;</span>
<span style="position:absolute;left:29.00px;top:690.00px;font-size:12.4px;line-height:12.4px;color:#000000;transform:scaleX(1.0147);-webkit-text-stroke:0.15px #000000;">DE0005190003,</span>
<span style="position:absolute;left:119.95px;top:690.00px;font-size:12.4px;line-height:12.4px;color:#000000;transform:scaleX(1.0457);-webkit-text-stroke:0.15px #000000;">&quot;UPDATE&quot;,</span>
<span style="position:absolute;left:184.39px;top:690.00px;font-size:12.4px;line-height:12.4px;color:#000000;transform:scaleX(1.1001);-webkit-text-stroke:0.15px #000000;">&quot;Rk 2&quot;,</span>
<span style="position:absolute;left:225.91px;top:690.00px;font-size:12.4px;line-height:12.4px;color:#000000;transform:scaleX(1.0554);-webkit-text-stroke:0.15px #000000;">&quot;2018-01-02 01:16:14.000000&quot;,</span>
<span style="position:absolute;left:407.67px;top:690.00px;font-size:12.4px;line-height:12.4px;color:#000000;transform:scaleX(1.1930);-webkit-text-stroke:0.15px #000000;">&quot;1&quot;,</span>
<span style="position:absolute;left:430.51px;top:690.00px;font-size:12.4px;line-height:12.4px;color:#000000;transform:scaleX(1.1930);-webkit-text-stroke:0.15px #000000;">&quot;1&quot;,</span>
<span style="position:absolute;left:453.35px;top:690.00px;font-size:12.4px;line-height:12.4px;color:#000000;transform:scaleX(1.1930);-webkit-text-stroke:0.15px #000000;">&quot;1&quot;,</span>
<span style="position:absolute;left:476.19px;top:690.00px;font-size:12.4px;line-height:12.4px;color:#000000;transform:scaleX(1.1930);-webkit-text-stroke:0.15px #000000;">&quot;2&quot;,</span>
<span style="position:absolute;left:499.03px;top:690.00px;font-size:12.4px;line-height:12.4px;color:#000000;transform:scaleX(1.1930);-webkit-text-stroke:0.15px #000000;">&quot;1&quot;,</span>
<span style="position:absolute;left:521.87px;top:690.00px;font-size:12.4px;line-height:12.4px;color:#000000;transform:scaleX(1.1930);-webkit-text-stroke:0.15px #000000;">&quot;3&quot;,</span>
<span style="position:absolute;left:544.71px;top:690.00px;font-size:12.4px;line-height:12.4px;color:#000000;transform:scaleX(1.1930);-webkit-text-stroke:0.15px #000000;">&quot;1&quot;,</span>
<span style="position:absolute;left:567.55px;top:690.00px;font-size:12.4px;line-height:12.4px;color:#000000;transform:scaleX(1.2007);-webkit-text-stroke:0.15px #000000;">&quot;3&quot;</span>
<span style="position:absolute;left:29.00px;top:710.00px;font-size:12.4px;line-height:12.4px;color:#000000;transform:scaleX(1.0090);-webkit-text-stroke:0.15px #000000;">DE0005190037,</span>
<span style="position:absolute;left:119.44px;top:710.00px;font-size:12.4px;line-height:12.4px;color:#000000;transform:scaleX(0.9905);-webkit-text-stroke:0.15px #000000;">&quot;CREATE&quot;,</span>
<span style="position:absolute;left:180.47px;top:710.00px;font-size:12.4px;line-height:12.4px;color:#000000;transform:scaleX(1.1239);-webkit-text-stroke:0.15px #000000;">&quot;This is a post comment&quot;,</span>
<span style="position:absolute;left:337.52px;top:710.00px;font-size:12.4px;line-height:12.4px;color:#000000;transform:scaleX(1.0495);-webkit-text-stroke:0.15px #000000;">&quot;2017-12-29 09:31:24.000000&quot;,</span>
<span style="position:absolute;left:518.26px;top:710.00px;font-size:12.4px;line-height:12.4px;color:#000000;transform:scaleX(1.1515);-webkit-text-stroke:0.15px #000000;">,</span>
<span style="position:absolute;left:522.23px;top:710.00px;font-size:12.4px;line-height:12.4px;color:#000000;transform:scaleX(1.1515);-webkit-text-stroke:0.15px #000000;">,</span>
<span style="position:absolute;left:526.19px;top:710.00px;font-size:12.4px;line-height:12.4px;color:#000000;transform:scaleX(1.1515);-webkit-text-stroke:0.15px #000000;">,</span>
<span style="position:absolute;left:530.16px;top:710.00px;font-size:12.4px;line-height:12.4px;color:#000000;transform:scaleX(1.1515);-webkit-text-stroke:0.15px #000000;">,</span>
<span style="position:absolute;left:534.13px;top:710.00px;font-size:12.4px;line-height:12.4px;color:#000000;transform:scaleX(1.1515);-webkit-text-stroke:0.15px #000000;">,</span>
<span style="position:absolute;left:538.09px;top:710.00px;font-size:12.4px;line-height:12.4px;color:#000000;transform:scaleX(1.1515);-webkit-text-stroke:0.15px #000000;">,</span>
<span style="position:absolute;left:542.06px;top:710.00px;font-size:12.4px;line-height:12.4px;color:#000000;transform:scaleX(1.1515);-webkit-text-stroke:0.15px #000000;">,</span>
<span style="position:absolute;left:546.03px;top:710.00px;font-size:12.4px;line-height:12.4px;color:#000000;transform:scaleX(1.1515);-webkit-text-stroke:0.15px #000000;">,</span>
<span style="position:absolute;left:550.00px;top:710.00px;font-size:12.4px;line-height:12.4px;color:#000000;transform:scaleX(1.1515);-webkit-text-stroke:0.15px #000000;">,</span>
<span style="position:absolute;left:553.96px;top:710.00px;font-size:12.4px;line-height:12.4px;color:#000000;transform:scaleX(1.1515);-webkit-text-stroke:0.15px #000000;">,</span>
<span style="position:absolute;left:557.93px;top:710.00px;font-size:12.4px;line-height:12.4px;color:#000000;transform:scaleX(1.1515);-webkit-text-stroke:0.15px #000000;">,</span>
<span style="position:absolute;left:561.90px;top:710.00px;font-size:12.4px;line-height:12.4px;color:#000000;transform:scaleX(1.1515);-webkit-text-stroke:0.15px #000000;">,</span>
<span style="position:absolute;left:565.86px;top:710.00px;font-size:12.4px;line-height:12.4px;color:#000000;transform:scaleX(1.1515);-webkit-text-stroke:0.15px #000000;">,</span>
<span style="position:absolute;left:569.83px;top:710.00px;font-size:12.4px;line-height:12.4px;color:#000000;transform:scaleX(1.1515);-webkit-text-stroke:0.15px #000000;">,</span>
<span style="position:absolute;left:573.80px;top:710.00px;font-size:12.4px;line-height:12.4px;color:#000000;transform:scaleX(1.1515);-webkit-text-stroke:0.15px #000000;">,</span>
<span style="position:absolute;left:577.77px;top:710.00px;font-size:12.4px;line-height:12.4px;color:#000000;transform:scaleX(1.1515);-webkit-text-stroke:0.15px #000000;">,</span>
<span style="position:absolute;left:581.73px;top:710.00px;font-size:12.4px;line-height:12.4px;color:#000000;transform:scaleX(1.1515);-webkit-text-stroke:0.15px #000000;">,</span>
<span style="position:absolute;left:29.00px;top:730.00px;font-size:12.4px;line-height:12.4px;color:#000000;transform:scaleX(1.0145);-webkit-text-stroke:0.15px #000000;">DE0005200000,</span>
<span style="position:absolute;left:119.94px;top:730.00px;font-size:12.4px;line-height:12.4px;color:#000000;transform:scaleX(1.0455);-webkit-text-stroke:0.15px #000000;">&quot;UPDATE&quot;,</span>
<span style="position:absolute;left:184.36px;top:730.00px;font-size:12.4px;line-height:12.4px;color:#000000;transform:scaleX(1.1044);-webkit-text-stroke:0.15px #000000;">&quot;Risikoklasse geÃ¤ndert von 5 auf 3&quot;,</span>
<span style="position:absolute;left:412.56px;top:730.00px;font-size:12.4px;line-height:12.4px;color:#000000;transform:scaleX(1.0667);-webkit-text-stroke:0.15px #000000;">&quot;2017-11-20 11:36:24.000000&quot;,</span>
<span style="position:absolute;left:594.29px;top:730.00px;font-size:12.4px;line-height:12.4px;color:#000000;transform:scaleX(1.1929);-webkit-text-stroke:0.15px #000000;">&quot;1&quot;,</span>
<span style="position:absolute;left:617.13px;top:730.00px;font-size:12.4px;line-height:12.4px;color:#000000;transform:scaleX(1.1929);-webkit-text-stroke:0.15px #000000;">&quot;5&quot;,</span>
<span style="position:absolute;left:639.97px;top:730.00px;font-size:12.4px;line-height:12.4px;color:#000000;transform:scaleX(1.1929);-webkit-text-stroke:0.15px #000000;">&quot;2&quot;,</span>
<span style="position:absolute;left:662.80px;top:730.00px;font-size:12.4px;line-height:12.4px;color:#000000;transform:scaleX(1.1929);-webkit-text-stroke:0.15px #000000;">&quot;2&quot;,</span>
<span style="position:absolute;left:685.64px;top:730.00px;font-size:12.4px;line-height:12.4px;color:#000000;transform:scaleX(1.1929);-webkit-text-stroke:0.15px #000000;">&quot;5&quot;,</span>
<span style="position:absolute;left:708.48px;top:730.00px;font-size:12.4px;line-height:12.4px;color:#000000;transform:scaleX(1.1929);-webkit-text-stroke:0.15px #000000;">&quot;2&quot;,</span>
<span style="position:absolute;left:731.31px;top:730.00px;font-size:12.4px;line-height:12.4px;color:#000000;transform:scaleX(1.1929);-webkit-text-stroke:0.15px #000000;">&quot;4&quot;,</span>
<span style="position:absolute;left:754.15px;top:730.00px;font-size:12.4px;line-height:12.4px;color:#000000;transform:scaleX(1.2005);-webkit-text-stroke:0.15px #000000;">&quot;1&quot;</span>
<span style="position:absolute;left:29.00px;top:750.00px;font-size:12.4px;line-height:12.4px;color:#000000;transform:scaleX(1.0139);-webkit-text-stroke:0.15px #000000;">DE0005557508,</span>
<span style="position:absolute;left:119.88px;top:750.00px;font-size:12.4px;line-height:12.4px;color:#000000;transform:scaleX(0.9953);-webkit-text-stroke:0.15px #000000;">&quot;CREATE&quot;,</span>
<span style="position:absolute;left:181.21px;top:750.00px;font-size:12.4px;line-height:12.4px;color:#000000;transform:scaleX(1.1802);-webkit-text-stroke:0.15px #000000;">&quot;Test&quot;,</span>
<span style="position:absolute;left:222.51px;top:750.00px;font-size:12.4px;line-height:12.4px;color:#000000;transform:scaleX(1.0546);-webkit-text-stroke:0.15px #000000;">&quot;2018-03-16 12:26:49.000000&quot;,</span>
<span style="position:absolute;left:404.13px;top:750.00px;font-size:12.4px;line-height:12.4px;color:#000000;transform:scaleX(1.1572);-webkit-text-stroke:0.15px #000000;">,</span>
<span style="position:absolute;left:408.11px;top:750.00px;font-size:12.4px;line-height:12.4px;color:#000000;transform:scaleX(1.1572);-webkit-text-stroke:0.15px #000000;">,</span>
<span style="position:absolute;left:412.10px;top:750.00px;font-size:12.4px;line-height:12.4px;color:#000000;transform:scaleX(1.1572);-webkit-text-stroke:0.15px #000000;">,</span>
<span style="position:absolute;left:416.09px;top:750.00px;font-size:12.4px;line-height:12.4px;color:#000000;transform:scaleX(1.1572);-webkit-text-stroke:0.15px #000000;">,</span>
<span style="position:absolute;left:420.07px;top:750.00px;font-size:12.4px;line-height:12.4px;color:#000000;transform:scaleX(1.1572);-webkit-text-stroke:0.15px #000000;">,</span>
<span style="position:absolute;left:424.06px;top:750.00px;font-size:12.4px;line-height:12.4px;color:#000000;transform:scaleX(1.1572);-webkit-text-stroke:0.15px #000000;">,</span>
<span style="position:absolute;left:428.05px;top:750.00px;font-size:12.4px;line-height:12.4px;color:#000000;transform:scaleX(1.1572);-webkit-text-stroke:0.15px #000000;">,</span>
<span style="position:absolute;left:432.03px;top:750.00px;font-size:12.4px;line-height:12.4px;color:#000000;transform:scaleX(1.1572);-webkit-text-stroke:0.15px #000000;">,</span>
<span style="position:absolute;left:436.02px;top:750.00px;font-size:12.4px;line-height:12.4px;color:#000000;transform:scaleX(1.1572);-webkit-text-stroke:0.15px #000000;">,</span>
<span style="position:absolute;left:440.01px;top:750.00px;font-size:12.4px;line-height:12.4px;color:#000000;transform:scaleX(1.1572);-webkit-text-stroke:0.15px #000000;">,</span>
<span style="position:absolute;left:443.99px;top:750.00px;font-size:12.4px;line-height:12.4px;color:#000000;transform:scaleX(1.1572);-webkit-text-stroke:0.15px #000000;">,</span>
<span style="position:absolute;left:447.98px;top:750.00px;font-size:12.4px;line-height:12.4px;color:#000000;transform:scaleX(1.1572);-webkit-text-stroke:0.15px #000000;">,</span>
<span style="position:absolute;left:451.97px;top:750.00px;font-size:12.4px;line-height:12.4px;color:#000000;transform:scaleX(1.1572);-webkit-text-stroke:0.15px #000000;">,</span>
<span style="position:absolute;left:455.95px;top:750.00px;font-size:12.4px;line-height:12.4px;color:#000000;transform:scaleX(1.1572);-webkit-text-stroke:0.15px #000000;">,</span>
<span style="position:absolute;left:459.94px;top:750.00px;font-size:12.4px;line-height:12.4px;color:#000000;transform:scaleX(1.1572);-webkit-text-stroke:0.15px #000000;">,</span>
<span style="position:absolute;left:463.93px;top:750.00px;font-size:12.4px;line-height:12.4px;color:#000000;transform:scaleX(1.1572);-webkit-text-stroke:0.15px #000000;">,</span>
<span style="position:absolute;left:467.91px;top:750.00px;font-size:12.4px;line-height:12.4px;color:#000000;transform:scaleX(1.1572);-webkit-text-stroke:0.15px #000000;">,</span>
<span style="position:absolute;left:29.00px;top:770.00px;font-size:12.4px;line-height:12.4px;color:#000000;transform:scaleX(1.0177);-webkit-text-stroke:0.15px #000000;">DE0006048432,</span>
<span style="position:absolute;left:120.22px;top:770.00px;font-size:12.4px;line-height:12.4px;color:#000000;transform:scaleX(0.9990);-webkit-text-stroke:0.15px #000000;">&quot;CREATE&quot;,</span>
<span style="position:absolute;left:181.78px;top:770.00px;font-size:12.4px;line-height:12.4px;color:#000000;transform:scaleX(1.0738);-webkit-text-stroke:0.15px #000000;">&quot;Pflege RK&quot;,</span>
<span style="position:absolute;left:254.88px;top:770.00px;font-size:12.4px;line-height:12.4px;color:#000000;transform:scaleX(1.0585);-webkit-text-stroke:0.15px #000000;">&quot;2018-01-04 12:41:41.000000&quot;,</span>
<span style="position:absolute;left:437.18px;top:770.00px;font-size:12.4px;line-height:12.4px;color:#000000;transform:scaleX(1.1615);-webkit-text-stroke:0.15px #000000;">,</span>
<span style="position:absolute;left:441.18px;top:770.00px;font-size:12.4px;line-height:12.4px;color:#000000;transform:scaleX(1.1615);-webkit-text-stroke:0.15px #000000;">,</span>
<span style="position:absolute;left:445.18px;top:770.00px;font-size:12.4px;line-height:12.4px;color:#000000;transform:scaleX(1.1615);-webkit-text-stroke:0.15px #000000;">,</span>
<span style="position:absolute;left:449.18px;top:770.00px;font-size:12.4px;line-height:12.4px;color:#000000;transform:scaleX(1.1615);-webkit-text-stroke:0.15px #000000;">,</span>
<span style="position:absolute;left:453.18px;top:770.00px;font-size:12.4px;line-height:12.4px;color:#000000;transform:scaleX(1.1615);-webkit-text-stroke:0.15px #000000;">,</span>
<span style="position:absolute;left:457.18px;top:770.00px;font-size:12.4px;line-height:12.4px;color:#000000;transform:scaleX(1.1615);-webkit-text-stroke:0.15px #000000;">,</span>
<span style="position:absolute;left:461.19px;top:770.00px;font-size:12.4px;line-height:12.4px;color:#000000;transform:scaleX(1.1615);-webkit-text-stroke:0.15px #000000;">,</span>
<span style="position:absolute;left:465.19px;top:770.00px;font-size:12.4px;line-height:12.4px;color:#000000;transform:scaleX(1.1615);-webkit-text-stroke:0.15px #000000;">,</span>
<span style="position:absolute;left:469.19px;top:770.00px;font-size:12.4px;line-height:12.4px;color:#000000;transform:scaleX(1.1615);-webkit-text-stroke:0.15px #000000;">,</span>
<span style="position:absolute;left:473.19px;top:770.00px;font-size:12.4px;line-height:12.4px;color:#000000;transform:scaleX(1.1615);-webkit-text-stroke:0.15px #000000;">,</span>
<span style="position:absolute;left:477.19px;top:770.00px;font-size:12.4px;line-height:12.4px;color:#000000;transform:scaleX(1.1615);-webkit-text-stroke:0.15px #000000;">,</span>
<span style="position:absolute;left:481.19px;top:770.00px;font-size:12.4px;line-height:12.4px;color:#000000;transform:scaleX(1.1615);-webkit-text-stroke:0.15px #000000;">,</span>
<span style="position:absolute;left:485.19px;top:770.00px;font-size:12.4px;line-height:12.4px;color:#000000;transform:scaleX(1.1615);-webkit-text-stroke:0.15px #000000;">,</span>
<span style="position:absolute;left:489.19px;top:770.00px;font-size:12.4px;line-height:12.4px;color:#000000;transform:scaleX(1.1615);-webkit-text-stroke:0.15px #000000;">,</span>
<span style="position:absolute;left:493.20px;top:770.00px;font-size:12.4px;line-height:12.4px;color:#000000;transform:scaleX(1.1615);-webkit-text-stroke:0.15px #000000;">,</span>
<span style="position:absolute;left:497.20px;top:770.00px;font-size:12.4px;line-height:12.4px;color:#000000;transform:scaleX(1.1615);-webkit-text-stroke:0.15px #000000;">,</span>
<span style="position:absolute;left:501.20px;top:770.00px;font-size:12.4px;line-height:12.4px;color:#000000;transform:scaleX(1.1615);-webkit-text-stroke:0.15px #000000;">,</span>
<span style="position:absolute;left:29.00px;top:790.00px;font-size:12.4px;line-height:12.4px;color:#000000;transform:scaleX(1.0177);-webkit-text-stroke:0.15px #000000;">DE0006231004,</span>
<span style="position:absolute;left:120.22px;top:790.00px;font-size:12.4px;line-height:12.4px;color:#000000;transform:scaleX(0.9990);-webkit-text-stroke:0.15px #000000;">&quot;CREATE&quot;,</span>
<span style="position:absolute;left:181.78px;top:790.00px;font-size:12.4px;line-height:12.4px;color:#000000;transform:scaleX(1.0738);-webkit-text-stroke:0.15px #000000;">&quot;Pflege RK&quot;,</span>
<span style="position:absolute;left:254.88px;top:790.00px;font-size:12.4px;line-height:12.4px;color:#000000;transform:scaleX(1.0585);-webkit-text-stroke:0.15px #000000;">&quot;2018-01-04 12:41:09.000000&quot;,</span>
<span style="position:absolute;left:437.18px;top:790.00px;font-size:12.4px;line-height:12.4px;color:#000000;transform:scaleX(1.1615);-webkit-text-stroke:0.15px #000000;">,</span>
<span style="position:absolute;left:441.18px;top:790.00px;font-size:12.4px;line-height:12.4px;color:#000000;transform:scaleX(1.1615);-webkit-text-stroke:0.15px #000000;">,</span>
<span style="position:absolute;left:445.18px;top:790.00px;font-size:12.4px;line-height:12.4px;color:#000000;transform:scaleX(1.1615);-webkit-text-stroke:0.15px #000000;">,</span>
<span style="position:absolute;left:449.18px;top:790.00px;font-size:12.4px;line-height:12.4px;color:#000000;transform:scaleX(1.1615);-webkit-text-stroke:0.15px #000000;">,</span>
<span style="position:absolute;left:453.18px;top:790.00px;font-size:12.4px;line-height:12.4px;color:#000000;transform:scaleX(1.1615);-webkit-text-stroke:0.15px #000000;">,</span>
<span style="position:absolute;left:457.18px;top:790.00px;font-size:12.4px;line-height:12.4px;color:#000000;transform:scaleX(1.1615);-webkit-text-stroke:0.15px #000000;">,</span>
<span style="position:absolute;left:461.19px;top:790.00px;font-size:12.4px;line-height:12.4px;color:#000000;transform:scaleX(1.1615);-webkit-text-stroke:0.15px #000000;">,</span>
<span style="position:absolute;left:465.19px;top:790.00px;font-size:12.4px;line-height:12.4px;color:#000000;transform:scaleX(1.1615);-webkit-text-stroke:0.15px #000000;">,</span>
<span style="position:absolute;left:469.19px;top:790.00px;font-size:12.4px;line-height:12.4px;color:#000000;transform:scaleX(1.1615);-webkit-text-stroke:0.15px #000000;">,</span>
<span style="position:absolute;left:473.19px;top:790.00px;font-size:12.4px;line-height:12.4px;color:#000000;transform:scaleX(1.1615);-webkit-text-stroke:0.15px #000000;">,</span>
<span style="position:absolute;left:477.19px;top:790.00px;font-size:12.4px;line-height:12.4px;color:#000000;transform:scaleX(1.1615);-webkit-text-stroke:0.15px #000000;">,</span>
<span style="position:absolute;left:481.19px;top:790.00px;font-size:12.4px;line-height:12.4px;color:#000000;transform:scaleX(1.1615);-webkit-text-stroke:0.15px #000000;">,</span>
<span style="position:absolute;left:485.19px;top:790.00px;font-size:12.4px;line-height:12.4px;color:#000000;transform:scaleX(1.1615);-webkit-text-stroke:0.15px #000000;">,</span>
<span style="position:absolute;left:489.19px;top:790.00px;font-size:12.4px;line-height:12.4px;color:#000000;transform:scaleX(1.1615);-webkit-text-stroke:0.15px #000000;">,</span>
<span style="position:absolute;left:493.20px;top:790.00px;font-size:12.4px;line-height:12.4px;color:#000000;transform:scaleX(1.1615);-webkit-text-stroke:0.15px #000000;">,</span>
<span style="position:absolute;left:497.20px;top:790.00px;font-size:12.4px;line-height:12.4px;color:#000000;transform:scaleX(1.1615);-webkit-text-stroke:0.15px #000000;">,</span>
<span style="position:absolute;left:501.20px;top:790.00px;font-size:12.4px;line-height:12.4px;color:#000000;transform:scaleX(1.1615);-webkit-text-stroke:0.15px #000000;">,</span>
<span style="position:absolute;left:29.00px;top:810.00px;font-size:12.4px;line-height:12.4px;color:#000000;transform:scaleX(1.0166);-webkit-text-stroke:0.15px #000000;">DE0006599905,</span>
<span style="position:absolute;left:120.12px;top:810.00px;font-size:12.4px;line-height:12.4px;color:#000000;transform:scaleX(1.0477);-webkit-text-stroke:0.15px #000000;">&quot;UPDATE&quot;,</span>
<span style="position:absolute;left:184.69px;top:810.00px;font-size:12.4px;line-height:12.4px;color:#000000;transform:scaleX(1.1251);-webkit-text-stroke:0.15px #000000;">&quot;Profil angepasst&quot;,</span>
<span style="position:absolute;left:298.51px;top:810.00px;font-size:12.4px;line-height:12.4px;color:#000000;transform:scaleX(1.0575);-webkit-text-stroke:0.15px #000000;">&quot;2017-10-16 10:57:56.000000&quot;,</span>
<span style="position:absolute;left:480.62px;top:810.00px;font-size:12.4px;line-height:12.4px;color:#000000;transform:scaleX(1.1953);-webkit-text-stroke:0.15px #000000;">&quot;1&quot;,</span>
<span style="position:absolute;left:503.51px;top:810.00px;font-size:12.4px;line-height:12.4px;color:#000000;transform:scaleX(1.1953);-webkit-text-stroke:0.15px #000000;">&quot;5&quot;,</span>
<span style="position:absolute;left:526.39px;top:810.00px;font-size:12.4px;line-height:12.4px;color:#000000;transform:scaleX(1.1953);-webkit-text-stroke:0.15px #000000;">&quot;2&quot;,</span>
<span style="position:absolute;left:549.28px;top:810.00px;font-size:12.4px;line-height:12.4px;color:#000000;transform:scaleX(1.1953);-webkit-text-stroke:0.15px #000000;">&quot;2&quot;,</span>
<span style="position:absolute;left:572.16px;top:810.00px;font-size:12.4px;line-height:12.4px;color:#000000;transform:scaleX(1.1953);-webkit-text-stroke:0.15px #000000;">&quot;5&quot;,</span>
<span style="position:absolute;left:595.04px;top:810.00px;font-size:12.4px;line-height:12.4px;color:#000000;transform:scaleX(1.1953);-webkit-text-stroke:0.15px #000000;">&quot;2&quot;,</span>
<span style="position:absolute;left:617.93px;top:810.00px;font-size:12.4px;line-height:12.4px;color:#000000;transform:scaleX(1.1953);-webkit-text-stroke:0.15px #000000;">&quot;4&quot;,</span>
<span style="position:absolute;left:640.81px;top:810.00px;font-size:12.4px;line-height:12.4px;color:#000000;transform:scaleX(1.2030);-webkit-text-stroke:0.15px #000000;">&quot;1&quot;</span>
<div style="position:absolute;left:1px;top:829px;width:1597px;height:1px;background:#ababab;"></div>
<div style="position:absolute;left:1597px;top:224px;width:1px;height:606px;background:#ababab;"></div>
<div style="position:absolute;left:1598px;top:205px;width:21px;height:625px;background:#e6e6e6;"></div>
<div style="position:absolute;left:1601px;top:222px;width:15px;height:607px;background:#dadada;"></div>
<div style="position:absolute;left:1601px;top:207px;width:15px;height:15px;box-sizing:border-box;border:1px solid #c6c6c6;background:#ffffff;"></div>
<div style="position:absolute;left:1601px;top:284px;width:15px;height:88px;box-sizing:border-box;border:1px solid #b8b8b8;background:#ffffff;"></div>
<div style="position:absolute;left:1601px;top:815px;width:15px;height:15px;box-sizing:border-box;border:1px solid #c6c6c6;background:#ffffff;"></div>
<div style="position:absolute;left:1px;top:830px;width:1618px;height:27px;background:#e6e6e6;"></div>
<div style="position:absolute;left:101px;top:829px;width:64px;height:25px;box-sizing:border-box;border:1px solid #ababab;background:#ffffff;border-top:none;"></div>
<div style="position:absolute;left:101px;top:852px;width:64px;height:2px;background:#217346;"></div>
<span style="position:absolute;left:113.09px;top:837.00px;font-size:12.4px;line-height:12.4px;color:#217346;font-weight:bold;transform:scaleX(1.0628);-webkit-text-stroke:0.2px #217346;">export</span>
<div style="position:absolute;left:989px;top:836px;width:609px;height:15px;background:#dcdcdc;"></div>
<div style="position:absolute;left:1003px;top:836px;width:549px;height:15px;box-sizing:border-box;border:1px solid #ababab;background:#ffffff;"></div>
<div style="position:absolute;left:989px;top:836px;width:15px;height:15px;box-sizing:border-box;border:1px solid #ababab;background:#ffffff;"></div>
<div style="position:absolute;left:1583px;top:836px;width:15px;height:15px;box-sizing:border-box;border:1px solid #ababab;background:#ffffff;"></div>
<div style="position:absolute;left:1px;top:857px;width:1618px;height:1px;background:#c6c6c6;"></div>
<div style="position:absolute;left:1px;top:858px;width:1618px;height:21px;background:#f1f1f1;"></div>
<span style="position:absolute;left:7.70px;top:863.00px;font-size:11px;line-height:11px;color:#444444;transform:scaleX(1.0425);-webkit-text-stroke:0.12px #444444;">Bereit</span>
<div style="position:absolute;left:1313px;top:857px;width:38px;height:22px;background:#c8c8c8;"></div>
<span style="position:absolute;left:1568.11px;top:863.00px;font-size:11px;line-height:11px;color:#444444;transform:scaleX(0.9975);-webkit-text-stroke:0.12px #444444;">100 %</span>
<svg style="position:absolute;left:23px;top:11px;" width="14" height="14" viewBox="0 0 14 14"><path d="M0.3 0.3H13.7V13.7H0.3Z" fill="#fff"/><path d="M2.3 1.6H11.7V5.8H2.3Z" fill="#217346"/><path d="M2.7 8.6H11.5V12.6H2.7Z" fill="#217346"/><path d="M4.8 10.6H7V12.6H4.8Z" fill="#fff"/></svg>
<svg style="position:absolute;left:52px;top:11px;" width="15" height="13" viewBox="0 0 15 13"><path d="M2 5.5H8.5A4 4 0 0 1 8.5 13.5" fill="none" stroke="#6aa482" stroke-width="1.8"/><path d="M5.5 1.5L1.5 5.5L5.5 9.5" fill="none" stroke="#6aa482" stroke-width="1.8"/></svg>
<svg style="position:absolute;left:72px;top:16px;" width="5" height="3" viewBox="0 0 5 3"><path d="M0 0H5L2.5 3Z" fill="#6aa482"/></svg>
<svg style="position:absolute;left:87px;top:11px;" width="15" height="13" viewBox="0 0 15 13"><path d="M13 5.5H6.5A4 4 0 0 0 6.5 13.5" fill="none" stroke="#6aa482" stroke-width="1.8"/><path d="M9.5 1.5L13.5 5.5L9.5 9.5" fill="none" stroke="#6aa482" stroke-width="1.8"/></svg>
<svg style="position:absolute;left:107px;top:16px;" width="5" height="3" viewBox="0 0 5 3"><path d="M0 0H5L2.5 3Z" fill="#6aa482"/></svg>
<div style="position:absolute;left:126px;top:15px;width:5px;height:1px;background:#fff;"></div>
<svg style="position:absolute;left:126px;top:17.5px;" width="5" height="3.5" viewBox="0 0 5 3.5"><path d="M0 0H5L2.5 3.5Z" fill="#fff"/></svg>
<svg style="position:absolute;left:1451px;top:11px;" width="14" height="11" viewBox="0 0 14 11"><path d="M0.5 0.5H13.5V10.5H0.5Z" fill="none" stroke="#fff"/><path d="M0.5 2.5H13.5" stroke="#fff"/><path d="M7 9.5V4.5M4.8 6.7L7 4.5L9.2 6.7" fill="none" stroke="#fff"/></svg>
<div style="position:absolute;left:1499px;top:16px;width:10px;height:1px;background:#fff;"></div>
<svg style="position:absolute;left:1545px;top:11px;" width="11" height="11" viewBox="0 0 11 11"><path d="M0.5 0.5H10.5V10.5H0.5Z" fill="none" stroke="#fff"/></svg>
<svg style="position:absolute;left:1591px;top:11px;" width="11" height="11" viewBox="0 0 11 11"><path d="M0.5 0.5L10.5 10.5M10.5 0.5L0.5 10.5" fill="none" stroke="#fff" stroke-width="1.1"/></svg>
<svg style="position:absolute;left:673px;top:44px;" width="11" height="14" viewBox="0 0 11 14"><path d="M3.5 10.5V8.5C1.5 7 0.7 5.8 0.7 4.3A4.8 4.3 0 0 1 10.3 4.3C10.3 5.8 9.5 7 7.5 8.5V10.5Z" fill="none" stroke="#e6efe9" stroke-width="1"/><path d="M3.5 12.5H7.5" stroke="#e6efe9"/></svg>
<svg style="position:absolute;left:1524px;top:42px;" width="16" height="18" viewBox="0 0 16 18"><circle cx="7.5" cy="5" r="4" fill="none" stroke="#fff" stroke-width="1.3"/><path d="M0.8 17C1.5 12 4 9.5 7.5 9.3C9 9.3 10 9.6 11 10" fill="none" stroke="#fff" stroke-width="1.3"/><path d="M11.5 11.5V17.5M8.5 14.5H14.5" stroke="#fff" stroke-width="1.3"/></svg>
<svg style="position:absolute;left:18px;top:73px;" width="30" height="32" viewBox="0 0 30 32"><rect x="1" y="4" width="24" height="25" rx="1.5" fill="#eac17c"/>
      <rect x="6" y="4" width="14" height="4" fill="#6b6b6b"/><rect x="10" y="1" width="6" height="4" rx="1" fill="#6b6b6b"/><rect x="12" y="2.3" width="2" height="1.7" fill="#f1f1f1"/>
      <path d="M15.5 12.5H25.5L29.5 16.5V30.5H15.5Z" fill="#fff" stroke="#6b6b6b" stroke-width="1"/><path d="M25.5 12.5V16.5H29.5" fill="none" stroke="#6b6b6b" stroke-width="1"/></svg>
<svg style="position:absolute;left:28px;top:129px;" width="5" height="3" viewBox="0 0 5 3"><path d="M0 0H5L2.5 3Z" fill="#6a6a6a"/></svg>
<svg style="position:absolute;left:60px;top:71px;" width="16" height="17" viewBox="0 0 16 17"><path d="M2.5 1.5L10 11M13.5 1.5L6 11" stroke="#6b6b6b" stroke-width="1.6"/>
      <circle cx="4" cy="13" r="2.6" fill="none" stroke="#3f7abd" stroke-width="1.2"/><circle cx="12" cy="13" r="2.6" fill="none" stroke="#3f7abd" stroke-width="1.2"/></svg>
<svg style="position:absolute;left:59px;top:95px;" width="17" height="16" viewBox="0 0 17 16"><path d="M7 11.5H1.5V1.5H6.5L8 3V4" fill="#fff" stroke="#6b6b6b"/>
      <path d="M3 4.5H5.5M3 6.5H6M3 8.5H6" stroke="#3f7abd"/>
      <path d="M7.5 4.5H13L15.5 7V14.5H7.5Z" fill="#fff" stroke="#6b6b6b"/><path d="M13 4.5V7H15.5" fill="none" stroke="#6b6b6b"/>
      <path d="M9 7.5H11M9 9.5H14M9 11.5H14" stroke="#3f7abd"/></svg>
<svg style="position:absolute;left:136px;top:102px;" width="5" height="3" viewBox="0 0 5 3"><path d="M0 0H5L2.5 3Z" fill="#6a6a6a"/></svg>
<svg style="position:absolute;left:59px;top:117px;" width="18" height="17" viewBox="0 0 18 17"><path d="M1 8.5L8 6.5L12 11L8 16Z" fill="#eac17c"/>
      <path d="M6.5 7L10.5 3.5L15 8L11 11.5Z" fill="#6b6b6b"/><path d="M11.5 3.5L14 1L17 4L14.5 6.5Z" fill="#6b6b6b"/></svg>
<svg style="position:absolute;left:178px;top:147px;" width="8" height="8" viewBox="0 0 8 8"><path d="M0.5 7V0.5H7" fill="none" stroke="#8a8a8a" stroke-width="1"/><path d="M3 3L6.5 6.5M7.5 4V7.5H4Z" fill="#8a8a8a" stroke="#8a8a8a" stroke-width="1"/></svg>
<svg style="position:absolute;left:295px;top:87px;" width="5" height="3" viewBox="0 0 5 3"><path d="M0 0H5L2.5 3Z" fill="#6a6a6a"/></svg>
<svg style="position:absolute;left:338px;top:87px;" width="5" height="3" viewBox="0 0 5 3"><path d="M0 0H5L2.5 3Z" fill="#6a6a6a"/></svg>
<span style="position:absolute;left:354.00px;top:83.00px;font-size:13px;line-height:13px;color:#555555;transform:scaleX(1.0762);-webkit-text-stroke:0.12px #555555;">A</span>
<svg style="position:absolute;left:362px;top:81px;" width="5" height="3" viewBox="0 0 5 3"><path d="M0 3H5L2.5 0Z" fill="#3f7abd"/></svg>
<span style="position:absolute;left:377.00px;top:85.00px;font-size:10.5px;line-height:10.5px;color:#555555;transform:scaleX(1.0631);-webkit-text-stroke:0.12px #555555;">A</span>
<svg style="position:absolute;left:384px;top:81px;" width="5" height="3" viewBox="0 0 5 3"><path d="M0 0H5L2.5 3Z" fill="#3f7abd"/></svg>
<span style="position:absolute;left:201.94px;top:113.00px;font-size:12px;line-height:12px;color:#444444;font-weight:bold;transform:scaleX(1.0182);-webkit-text-stroke:0.12px #444444;">F</span>
<span style="position:absolute;left:221.14px;top:113.00px;font-size:12px;line-height:12px;color:#444444;font-weight:bold;transform:scaleX(1.1429);-webkit-text-stroke:0.12px #444444;font-style:italic;">K</span>
<span style="position:absolute;left:243.32px;top:113.00px;font-size:12px;line-height:12px;color:#444444;font-weight:bold;transform:scaleX(1.2000);-webkit-text-stroke:0.12px #444444;">U</span>
<div style="position:absolute;left:244px;top:125px;width:9px;height:1px;background:#444444;"></div>
<svg style="position:absolute;left:263px;top:118px;" width="5" height="3" viewBox="0 0 5 3"><path d="M0 0H5L2.5 3Z" fill="#6a6a6a"/></svg>
<div style="position:absolute;left:276px;top:108px;width:1px;height:23px;background:#d5d5d5;"></div>
<div style="position:absolute;left:319px;top:108px;width:1px;height:23px;background:#d5d5d5;"></div>
<svg style="position:absolute;left:285px;top:112px;" width="14" height="14" viewBox="0 0 14 14"><rect x="0" y="0" width="1.2" height="1.2" fill="#666"/><rect x="0" y="6" width="1.2" height="1.2" fill="#666"/><rect x="2" y="0" width="1.2" height="1.2" fill="#666"/><rect x="2" y="6" width="1.2" height="1.2" fill="#666"/><rect x="4" y="0" width="1.2" height="1.2" fill="#666"/><rect x="4" y="6" width="1.2" height="1.2" fill="#666"/><rect x="6" y="0" width="1.2" height="1.2" fill="#666"/><rect x="6" y="6" width="1.2" height="1.2" fill="#666"/><rect x="8" y="0" width="1.2" height="1.2" fill="#666"/><rect x="8" y="6" width="1.2" height="1.2" fill="#666"/><rect x="10" y="0" width="1.2" height="1.2" fill="#666"/><rect x="10" y="6" width="1.2" height="1.2" fill="#666"/><rect x="12" y="0" width="1.2" height="1.2" fill="#666"/><rect x="12" y="6" width="1.2" height="1.2" fill="#666"/><rect x="0" y="2" width="1.2" height="1.2" fill="#666"/><rect x="0" y="4" width="1.2" height="1.2" fill="#666"/><rect x="0" y="8" width="1.2" height="1.2" fill="#666"/><rect x="0" y="10" width="1.2" height="1.2" fill="#666"/><rect x="6" y="2" width="1.2" height="1.2" fill="#666"/><rect x="6" y="4" width="1.2" height="1.2" fill="#666"/><rect x="6" y="8" width="1.2" height="1.2" fill="#666"/><rect x="6" y="10" width="1.2" height="1.2" fill="#666"/><rect x="12" y="2" width="1.2" height="1.2" fill="#666"/><rect x="12" y="4" width="1.2" height="1.2" fill="#666"/><rect x="12" y="8" width="1.2" height="1.2" fill="#666"/><rect x="12" y="10" width="1.2" height="1.2" fill="#666"/><rect x="0" y="12.2" width="13.2" height="1.5" fill="#555"/></svg>
<svg style="position:absolute;left:306px;top:118px;" width="5" height="3" viewBox="0 0 5 3"><path d="M0 0H5L2.5 3Z" fill="#6a6a6a"/></svg>
<svg style="position:absolute;left:327px;top:110px;" width="17" height="18" viewBox="0 0 17 18"><path d="M2.3 7.5L8.3 1.5L14.3 7.5L8.3 13.5Z" fill="#fff" stroke="#555" stroke-width="1"/>
      <path d="M5.5 4.5V1.2H8.5V6" fill="none" stroke="#555" stroke-width="1"/><path d="M14.5 4.5C16.5 5.5 16.5 9 14.5 12C14 10 14.5 8 13.5 7Z" fill="#3f7abd"/>
      <rect x="0" y="13" width="16.5" height="4" fill="#ffff00"/></svg>
<svg style="position:absolute;left:349px;top:118px;" width="5" height="3" viewBox="0 0 5 3"><path d="M0 0H5L2.5 3Z" fill="#6a6a6a"/></svg>
<span style="position:absolute;left:364.90px;top:112.00px;font-size:13.5px;line-height:13.5px;color:#555555;transform:scaleX(1.0033);-webkit-text-stroke:0.12px #555555;">A</span>
<div style="position:absolute;left:361px;top:123px;width:16px;height:4px;background:#ff0000;"></div>
<svg style="position:absolute;left:383px;top:118px;" width="5" height="3" viewBox="0 0 5 3"><path d="M0 0H5L2.5 3Z" fill="#6a6a6a"/></svg>
<svg style="position:absolute;left:385px;top:147px;" width="8" height="8" viewBox="0 0 8 8"><path d="M0.5 7V0.5H7" fill="none" stroke="#8a8a8a" stroke-width="1"/><path d="M3 3L6.5 6.5M7.5 4V7.5H4Z" fill="#8a8a8a" stroke="#8a8a8a" stroke-width="1"/></svg>
<div style="position:absolute;left:445px;top:77px;width:22px;height:23px;background:#c5c5c5;"></div>
<svg style="position:absolute;left:0px;top:0px;" width="1" height="1" viewBox="0 0 1 1"><rect x="405" y="80" width="14" height="1" fill="#6b6b6b"/><rect x="427" y="84" width="14" height="1" fill="#6b6b6b"/><rect x="405" y="83" width="14" height="1" fill="#6b6b6b"/><rect x="427" y="87" width="14" height="1" fill="#6b6b6b"/><rect x="405" y="86" width="14" height="1" fill="#6b6b6b"/><rect x="427" y="90" width="14" height="1" fill="#6b6b6b"/><rect x="449" y="89" width="14" height="1" fill="#6b6b6b"/><rect x="449" y="92" width="14" height="1" fill="#6b6b6b"/><rect x="449" y="95" width="14" height="1" fill="#6b6b6b"/><rect x="405" y="114" width="14" height="1" fill="#6b6b6b"/><rect x="427.0" y="114" width="14" height="1" fill="#6b6b6b"/><rect x="449" y="114" width="14" height="1" fill="#6b6b6b"/><rect x="405" y="117" width="10" height="1" fill="#6b6b6b"/><rect x="429.0" y="117" width="10" height="1" fill="#6b6b6b"/><rect x="453" y="117" width="10" height="1" fill="#6b6b6b"/><rect x="405" y="120" width="14" height="1" fill="#6b6b6b"/><rect x="427.0" y="120" width="14" height="1" fill="#6b6b6b"/><rect x="449" y="120" width="14" height="1" fill="#6b6b6b"/><rect x="405" y="123" width="10" height="1" fill="#6b6b6b"/><rect x="429.0" y="123" width="10" height="1" fill="#6b6b6b"/><rect x="453" y="123" width="10" height="1" fill="#6b6b6b"/></svg>
<div style="position:absolute;left:471px;top:77px;width:1px;height:23px;background:#d5d5d5;"></div>
<div style="position:absolute;left:471px;top:108px;width:1px;height:23px;background:#d5d5d5;"></div>
<svg style="position:absolute;left:478px;top:80px;" width="18" height="16" viewBox="0 0 18 16"><text x="0" y="0" font-size="11.5" font-family="Liberation Sans" fill="#505050" transform="translate(3.2 11.8) rotate(-58)">ab</text><path d="M8 14.5L16.5 6M13 5.5H17V9.5" fill="none" stroke="#505050" stroke-width="1.1"/></svg>
<svg style="position:absolute;left:499px;top:87px;" width="5" height="3" viewBox="0 0 5 3"><path d="M0 0H5L2.5 3Z" fill="#6a6a6a"/></svg>
<svg style="position:absolute;left:0px;top:0px;" width="1" height="1" viewBox="0 0 1 1"><rect x="479" y="113" width="16" height="1" fill="#6b6b6b"/><rect x="479" y="124" width="16" height="1" fill="#6b6b6b"/><rect x="488" y="116" width="7" height="1" fill="#6b6b6b"/><rect x="488" y="119" width="7" height="1" fill="#6b6b6b"/><rect x="488" y="122" width="7" height="1" fill="#6b6b6b"/><rect x="501" y="113" width="16" height="1" fill="#6b6b6b"/><rect x="501" y="124" width="16" height="1" fill="#6b6b6b"/><rect x="510" y="116" width="7" height="1" fill="#6b6b6b"/><rect x="510" y="119" width="7" height="1" fill="#6b6b6b"/><rect x="510" y="122" width="7" height="1" fill="#6b6b6b"/></svg>
<svg style="position:absolute;left:479px;top:114px;" width="8" height="8" viewBox="0 0 8 8"><path d="M1 4.5H8M4 1.5L1 4.5L4 7.5" fill="none" stroke="#3f7abd" stroke-width="1.8"/></svg>
<svg style="position:absolute;left:501px;top:114px;" width="8" height="8" viewBox="0 0 8 8"><path d="M0 4.5H7M4 1.5L7 4.5L4 7.5" fill="none" stroke="#3f7abd" stroke-width="1.8"/></svg>
<div style="position:absolute;left:524px;top:76px;width:1px;height:55px;background:#d5d5d5;"></div>
<svg style="position:absolute;left:532px;top:79px;" width="17" height="17" viewBox="0 0 17 17"><path d="M0.5 1.5H9.5V5.5H0.5Z" fill="#fff" stroke="#6b6b6b"/><path d="M0.5 9.5H10.5V15.5H0.5Z" fill="#fff" stroke="#6b6b6b"/>
      <path d="M2 3.5H15M2 11.5H9M2 13.5H9" stroke="#3f7abd" stroke-width="1"/>
      <path d="M15.5 5.5C16.5 8.5 15 10.5 11.5 11.2M13.5 9L11.3 11.2L13.5 13.3" fill="none" stroke="#3f7abd" stroke-width="1.2"/></svg>
<svg style="position:absolute;left:532px;top:110px;" width="16" height="17" viewBox="0 0 16 17"><path d="M0.5 0.5H15.5V16.5H0.5ZM0.5 4.5H15.5M0.5 12.5H15.5M7.5 0.5V4.5M7.5 12.5V16.5" fill="#fff" stroke="#6b6b6b"/>
      <path d="M2.5 8.5H13.5" stroke="#3f7abd" stroke-width="1.1"/><path d="M2 8.5L4.5 6.5V10.5ZM14 8.5L11.5 6.5V10.5Z" fill="#3f7abd"/></svg>
<svg style="position:absolute;left:693px;top:119px;" width="5" height="3" viewBox="0 0 5 3"><path d="M0 0H5L2.5 3Z" fill="#6a6a6a"/></svg>
<svg style="position:absolute;left:697px;top:147px;" width="8" height="8" viewBox="0 0 8 8"><path d="M0.5 7V0.5H7" fill="none" stroke="#8a8a8a" stroke-width="1"/><path d="M3 3L6.5 6.5M7.5 4V7.5H4Z" fill="#8a8a8a" stroke="#8a8a8a" stroke-width="1"/></svg>
<svg style="position:absolute;left:833px;top:87px;" width="5" height="3" viewBox="0 0 5 3"><path d="M0 0H5L2.5 3Z" fill="#6a6a6a"/></svg>
<svg style="position:absolute;left:715px;top:110px;" width="18" height="18" viewBox="0 0 18 18"><rect x="1.5" y="1.5" width="15" height="8" fill="#fff" stroke="#3f7abd" stroke-width="1.8"/><path d="M1 1H5L1 4.5ZM17 1H13L17 4.5ZM1 10H4.5L1 7ZM17 10H13.5L17 7Z" fill="#3f7abd"/><circle cx="8.8" cy="5.6" r="2.1" fill="#3f7abd"/><path d="M9 4.4A1.2 1.2 0 0 1 10.2 5.6H9Z" fill="#fff"/>
      <rect x="10" y="8" width="7.5" height="9" fill="#f1f1f1"/><rect x="5" y="12" width="7" height="6" fill="#f1f1f1"/>
      <ellipse cx="14" cy="9.6" rx="3.3" ry="1.3" fill="#eac17c"/><ellipse cx="14" cy="12" rx="3.3" ry="1.2" fill="#eac17c"/><ellipse cx="14" cy="14.3" rx="3.3" ry="1.2" fill="#eac17c"/>
      <ellipse cx="8.5" cy="13.3" rx="3.3" ry="1.3" fill="#f1f1f1"/><ellipse cx="8.5" cy="13.3" rx="3" ry="1.15" fill="#eac17c"/><ellipse cx="8.5" cy="15.8" rx="3" ry="1.15" fill="#eac17c"/></svg>
<svg style="position:absolute;left:738px;top:118px;" width="5" height="3" viewBox="0 0 5 3"><path d="M0 0H5L2.5 3Z" fill="#6a6a6a"/></svg>
<span style="position:absolute;left:752.03px;top:113.00px;font-size:14px;line-height:14px;color:#555555;transform:scaleX(1.0782);-webkit-text-stroke:0.12px #555555;">%</span>
<span style="position:absolute;left:772.52px;top:114.00px;font-size:9.5px;line-height:9.5px;color:#555555;transform:scaleX(0.9271);-webkit-text-stroke:0.3px #555555;">000</span>
<div style="position:absolute;left:795px;top:108px;width:1px;height:23px;background:#d5d5d5;"></div>
<svg style="position:absolute;left:803px;top:111px;" width="15" height="16" viewBox="0 0 15 16"><path d="M1.5 4.5H7.5M4 1.8L1.3 4.5L4 7.2" fill="none" stroke="#3f7abd" stroke-width="1.4"/><text x="9.5" y="7.3" font-size="8.5" font-family="Liberation Sans" fill="#555">0</text><text x="1.5" y="14.8" font-size="8.5" font-family="Liberation Sans" fill="#555">,00</text></svg>
<svg style="position:absolute;left:825px;top:111px;" width="15" height="16" viewBox="0 0 15 16"><text x="2" y="7.3" font-size="8.5" font-family="Liberation Sans" fill="#555">,00</text><path d="M0 11.5H6M3.5 8.8L6.2 11.5L3.5 14.2" fill="none" stroke="#3f7abd" stroke-width="1.4"/><text x="6.5" y="14.8" font-size="8.5" font-family="Liberation Sans" fill="#555">,0</text></svg>
<svg style="position:absolute;left:837px;top:147px;" width="8" height="8" viewBox="0 0 8 8"><path d="M0.5 7V0.5H7" fill="none" stroke="#8a8a8a" stroke-width="1"/><path d="M3 3L6.5 6.5M7.5 4V7.5H4Z" fill="#8a8a8a" stroke="#8a8a8a" stroke-width="1"/></svg>
<svg style="position:absolute;left:881px;top:74px;" width="31" height="30" viewBox="0 0 31 30"><rect x="0.5" y="0.5" width="27" height="24.5" fill="#fff" stroke="#8c8c8c"/>
      <path d="M0.5 6.7H27.5M0.5 12.9H27.5M0.5 19.1H27.5M7 0.5V25M14 0.5V25M20.7 0.5V25" stroke="#8c8c8c" stroke-width="1"/>
      <rect x="7.5" y="1" width="6" height="5.4" fill="#e05a35"/><rect x="7.5" y="7.3" width="11.5" height="5.4" fill="#3f7abd"/><rect x="7.5" y="13.5" width="9" height="5.4" fill="#e05a35"/><rect x="7.5" y="19.7" width="4" height="5" fill="#3f7abd"/>
      <rect x="14.5" y="17.5" width="15.5" height="12" fill="#fff" stroke="#8c8c8c"/><path d="M18.5 22H26M18.5 25H26M24.5 20L20 27" stroke="#333" stroke-width="1.1"/></svg>
<svg style="position:absolute;left:931px;top:131px;" width="5" height="3" viewBox="0 0 5 3"><path d="M0 0H5L2.5 3Z" fill="#6a6a6a"/></svg>
<svg style="position:absolute;left:962px;top:76px;" width="32" height="30" viewBox="0 0 32 30"><rect x="0.5" y="0.5" width="25" height="20.5" fill="#fff" stroke="#8c8c8c"/><rect x="6.5" y="5.5" width="19" height="15.5" fill="#c3d7ef"/><path d="M0.5 5.5H25.5M0.5 10.5H25.5M0.5 15.5H25.5M6.5 0.5V21M12.5 0.5V21M18.5 0.5V21" stroke="#8c8c8c"/><path d="M16.5 19.5L28.5 7.5L32 11L20 23Z" fill="#f1f1f1"/><path d="M18.5 19.5L29 9L31.5 11.5L21 22Z" fill="#7a7a7a"/><path d="M8 29C9 25.5 12 21.5 15.5 20.5C18 20 20 21.5 19.5 24C19 26.5 15 29 8 29Z" fill="#3f7abd"/><path d="M15 22.5C17 22.5 18 23.5 17.5 25C16.5 24.5 15.5 23.8 15 22.5Z" fill="#fff"/></svg>
<svg style="position:absolute;left:1006px;top:131px;" width="5" height="3" viewBox="0 0 5 3"><path d="M0 0H5L2.5 3Z" fill="#6a6a6a"/></svg>
<svg style="position:absolute;left:1059px;top:74px;" width="32" height="30" viewBox="0 0 32 30"><rect x="0.5" y="0.5" width="25" height="20.5" fill="#fff" stroke="#8c8c8c"/><rect x="6" y="5" width="14" height="11" fill="#c3d7ef"/><path d="M0.5 5H25.5M0.5 16H25.5M6 0.5V21M20 0.5V21" stroke="#8c8c8c"/><path d="M16.5 19.5L28.5 7.5L32 11L20 23Z" fill="#f1f1f1"/><path d="M18.5 19.5L29 9L31.5 11.5L21 22Z" fill="#7a7a7a"/><path d="M8 29C9 25.5 12 21.5 15.5 20.5C18 20 20 21.5 19.5 24C19 26.5 15 29 8 29Z" fill="#3f7abd"/><path d="M15 22.5C17 22.5 18 23.5 17.5 25C16.5 24.5 15.5 23.8 15 22.5Z" fill="#fff"/></svg>
<svg style="position:absolute;left:1070px;top:129px;" width="5" height="3" viewBox="0 0 5 3"><path d="M0 0H5L2.5 3Z" fill="#6a6a6a"/></svg>
<svg style="position:absolute;left:1154px;top:74px;" width="27" height="28" viewBox="0 0 27 28"><path d="M0.5 0.5H14.5V5.5H0.5ZM7.5 0.5V5.5" fill="#fff" stroke="#6b6b6b"/><path d="M11.5 8.5H25.5V13.5H11.5ZM18.5 8.5V13.5" fill="#c3d7ef" stroke="#6b6b6b"/><path d="M0.5 16.5H14.5V26.5H0.5ZM0.5 21.5H14.5M7.5 16.5V26.5" fill="#fff" stroke="#6b6b6b"/><path d="M1.5 11H8M4.5 8L1.5 11L4.5 14" fill="none" stroke="#3f7abd" stroke-width="1.8"/></svg>
<svg style="position:absolute;left:1164px;top:129px;" width="5" height="3" viewBox="0 0 5 3"><path d="M0 0H5L2.5 3Z" fill="#6a6a6a"/></svg>
<svg style="position:absolute;left:1203px;top:74px;" width="31" height="29" viewBox="0 0 31 29"><path d="M0.5 0.5H14.5V5.5H0.5ZM7.5 0.5V5.5" fill="#fff" stroke="#6b6b6b"/><path d="M6.5 8.5H17L19.5 11L17 13.5H6.5Z" fill="#c3d7ef" stroke="#6b6b6b"/><path d="M13 8.5V13.5" stroke="#6b6b6b"/><path d="M0.5 17.5H14.5V27.5H0.5ZM0.5 22.5H14.5M7.5 17.5V27.5" fill="#fff" stroke="#6b6b6b"/><path d="M16 6L29 18M29 5L16 18" stroke="#e05a2b" stroke-width="2"/></svg>
<svg style="position:absolute;left:1215px;top:129px;" width="5" height="3" viewBox="0 0 5 3"><path d="M0 0H5L2.5 3Z" fill="#6a6a6a"/></svg>
<svg style="position:absolute;left:1249px;top:72px;" width="29" height="33" viewBox="0 0 29 33"><path d="M0.5 1V6M22.5 1V6M1 3.5H22M1 3.5L4 1.5M1 3.5L4 5.5M22 3.5L19 1.5M22 3.5L19 5.5" fill="none" stroke="#3f7abd" stroke-width="1"/>
      <rect x="0.5" y="7.5" width="27" height="20" fill="#fff" stroke="#6b6b6b"/>
      <path d="M0.5 12.5H27.5M0.5 22.5H27.5M7.5 7.5V27.5M15 7.5V27.5M21.5 7.5V27.5" stroke="#9a9a9a"/>
      <rect x="8" y="13" width="6.5" height="9" fill="#3f7abd"/>
      <path d="M0.5 27.5V31.5H7L9 29.5L10 31.5H17L20 27.5" fill="#fff" stroke="#6b6b6b"/></svg>
<svg style="position:absolute;left:1261px;top:129px;" width="5" height="3" viewBox="0 0 5 3"><path d="M0 0H5L2.5 3Z" fill="#6a6a6a"/></svg>
<svg style="position:absolute;left:1296px;top:71px;" width="17" height="17" viewBox="0 0 17 17"><path d="M15.5 3.5V1H1.8L8.5 8.5L1.8 16H15.5V13.5" fill="none" stroke="#444" stroke-width="2"/></svg>
<svg style="position:absolute;left:1393px;top:79px;" width="5" height="3" viewBox="0 0 5 3"><path d="M0 0H5L2.5 3Z" fill="#6a6a6a"/></svg>
<svg style="position:absolute;left:1298px;top:95px;" width="14" height="16" viewBox="0 0 14 16"><rect x="0.5" y="0.5" width="13" height="15" fill="#fff" stroke="#6b6b6b"/><rect x="0" y="0" width="14" height="3" fill="#7a7a7a"/>
      <path d="M7 5V12.5M4 9.5L7 12.5L10 9.5" fill="none" stroke="#3f7abd" stroke-width="1.8"/></svg>
<svg style="position:absolute;left:1378px;top:102px;" width="5" height="3" viewBox="0 0 5 3"><path d="M0 0H5L2.5 3Z" fill="#6a6a6a"/></svg>
<svg style="position:absolute;left:1298px;top:119px;" width="14" height="14" viewBox="0 0 14 14"><path d="M4.5 6.5L9.5 1.2L13 4.8L8 10Z" fill="#e8829a"/><path d="M1 10L3.7 7.3L7.2 10.8L4.5 13.5Z" fill="#e8829a"/></svg>
<svg style="position:absolute;left:1364px;top:125px;" width="5" height="3" viewBox="0 0 5 3"><path d="M0 0H5L2.5 3Z" fill="#6a6a6a"/></svg>
<svg style="position:absolute;left:1426px;top:74px;" width="30" height="28" viewBox="0 0 30 28"><path d="M1 13L5.5 1.3L10 13M2.7 9.2H8.3" fill="none" stroke="#3f7abd" stroke-width="1.9"/>
      <path d="M1.5 15.8H9.5L1.8 25.8H10.5" fill="none" stroke="#9b59b6" stroke-width="1.9"/>
      <path d="M12 8H29.5L23 15.5V23H18.7V15.5Z" fill="#7a7a7a"/><path d="M14.5 9.2L20 15.3V22" fill="none" stroke="#fff" stroke-width="1.1"/></svg>
<svg style="position:absolute;left:1456px;top:131px;" width="5" height="3" viewBox="0 0 5 3"><path d="M0 0H5L2.5 3Z" fill="#6a6a6a"/></svg>
<svg style="position:absolute;left:1499px;top:73px;" width="30" height="30" viewBox="0 0 30 30"><circle cx="18.5" cy="10.5" r="8.8" fill="#fff" stroke="#3f7abd" stroke-width="2.2"/><path d="M12 17L3.2 25.8" stroke="#3f7abd" stroke-width="3.6" stroke-linecap="round"/></svg>
<svg style="position:absolute;left:1543px;top:131px;" width="5" height="3" viewBox="0 0 5 3"><path d="M0 0H5L2.5 3Z" fill="#6a6a6a"/></svg>
<svg style="position:absolute;left:1600px;top:146px;" width="11" height="7" viewBox="0 0 11 7"><path d="M1 5.8L5.2 1.6L9.4 5.8" fill="none" stroke="#666" stroke-width="2"/></svg>
<svg style="position:absolute;left:93px;top:179px;" width="8" height="4" viewBox="0 0 8 4"><path d="M0 0H8L4.0 4Z" fill="#666"/></svg>
<div style="position:absolute;left:122px;top:177px;width:2px;height:2px;background:#a0a0a0;"></div>
<div style="position:absolute;left:122px;top:182px;width:2px;height:2px;background:#a0a0a0;"></div>
<div style="position:absolute;left:122px;top:187px;width:2px;height:2px;background:#a0a0a0;"></div>
<svg style="position:absolute;left:151px;top:177px;" width="12" height="12" viewBox="0 0 12 12"><path d="M1 1L11 11M11 1L1 11" stroke="#bdbdbd" stroke-width="1.5"/></svg>
<svg style="position:absolute;left:186px;top:177px;" width="15" height="12" viewBox="0 0 15 12"><path d="M1 6.5L5.5 11L14 1.5" fill="none" stroke="#bdbdbd" stroke-width="2"/></svg>
<svg style="position:absolute;left:222px;top:175px;" width="14" height="14" viewBox="0 0 14 14"><path d="M1 13.2C2.6 13.2 3.2 12.2 3.7 9.8L5.2 3.2C5.7 1.3 6.8 0.9 9.6 1.1" fill="none" stroke="#555" stroke-width="1.4"/><path d="M3.2 5.4H7.6" stroke="#555" stroke-width="1.2"/><path d="M6.6 6.8C8 6.5 9 7.8 10.2 10.5C10.8 12 11.5 12.8 12.6 12.4M12.4 6.8L6.8 12.6" fill="none" stroke="#555" stroke-width="1.3"/></svg>
<svg style="position:absolute;left:1601px;top:178px;" width="9" height="6" viewBox="0 0 9 6"><path d="M1 1L4.5 4.5L8 1" fill="none" stroke="#666" stroke-width="1.6"/></svg>
<svg style="position:absolute;left:11px;top:209px;" width="12" height="12" viewBox="0 0 12 12"><path d="M12 0V12H0Z" fill="#bdbdbd"/></svg>
<svg style="position:absolute;left:1605px;top:212px;" width="8" height="4" viewBox="0 0 8 4"><path d="M0 4H8L4 0Z" fill="#6b6b6b"/></svg>
<svg style="position:absolute;left:1605px;top:820px;" width="8" height="4" viewBox="0 0 8 4"><path d="M0 0H8L4 4Z" fill="#6b6b6b"/></svg>
<svg style="position:absolute;left:993px;top:840px;" width="5" height="8" viewBox="0 0 5 8"><path d="M5 0V8L0 4Z" fill="#6b6b6b"/></svg>
<svg style="position:absolute;left:1588px;top:840px;" width="5" height="8" viewBox="0 0 5 8"><path d="M0 0V8L5 4Z" fill="#6b6b6b"/></svg>
<svg style="position:absolute;left:28px;top:839px;" width="4" height="8" viewBox="0 0 4 8"><path d="M4 0V8L0 4Z" fill="#c2c2c2"/></svg>
<svg style="position:absolute;left:56px;top:839px;" width="4" height="8" viewBox="0 0 4 8"><path d="M0 0V8L4 4Z" fill="#c2c2c2"/></svg>
<svg style="position:absolute;left:197px;top:834px;" width="18" height="18" viewBox="0 0 18 18"><circle cx="9" cy="9" r="7.7" fill="none" stroke="#777" stroke-width="1.2"/><path d="M9 4.5V13.5M4.5 9H13.5" stroke="#777" stroke-width="1.6"/></svg>
<div style="position:absolute;left:971px;top:838px;width:2px;height:2px;background:#a0a0a0;"></div>
<div style="position:absolute;left:971px;top:843px;width:2px;height:2px;background:#a0a0a0;"></div>
<div style="position:absolute;left:971px;top:848px;width:2px;height:2px;background:#a0a0a0;"></div>
<svg style="position:absolute;left:58px;top:860px;" width="14" height="15" viewBox="0 0 14 15"><circle cx="3.2" cy="3.8" r="2.9" fill="#7a7a7a"/><rect x="7" y="2" width="6.2" height="2.2" fill="#7a7a7a"/><path d="M1.5 7.5V14H12.7V3" fill="none" stroke="#7a7a7a" stroke-width="1"/><rect x="3.2" y="6.2" width="2" height="1" fill="#777"/><rect x="6.2" y="6.2" width="2" height="1" fill="#777"/><rect x="9.2" y="6.2" width="2" height="1" fill="#777"/><rect x="3.2" y="8.7" width="2" height="1" fill="#777"/><rect x="6.2" y="8.7" width="2" height="1" fill="#777"/><rect x="9.2" y="8.7" width="2" height="1" fill="#777"/><rect x="3.2" y="11.2" width="2" height="1" fill="#777"/><rect x="6.2" y="11.2" width="2" height="1" fill="#777"/><rect x="9.2" y="11.2" width="2" height="1" fill="#777"/></svg>
<svg style="position:absolute;left:1325px;top:861px;" width="14" height="14" viewBox="0 0 14 14"><path d="M0 0H14V14H0Z" fill="#666"/><path d="M1 1H4V4H1ZM5 1H9V4H5ZM10 1H13V4H10ZM1 5H4V9H1ZM5 5H9V9H5ZM10 5H13V9H10ZM1 10H4V13H1ZM5 10H9V13H5ZM10 10H13V13H10Z" fill="#c8c8c8"/></svg>
<svg style="position:absolute;left:1363px;top:861px;" width="14" height="14" viewBox="0 0 14 14"><path d="M0.5 0.5H13.5V13.5H0.5Z" fill="none" stroke="#666"/><path d="M3.5 3H10.5V11H3.5Z" fill="none" stroke="#666"/><path d="M5 5.5H9M5 7.5H9M5 9.5H9" stroke="#666"/></svg>
<svg style="position:absolute;left:1401px;top:861px;" width="14" height="14" viewBox="0 0 14 14"><path d="M0.5 0.5H13.5V13.5H0.5Z" fill="none" stroke="#666"/><path d="M5.5 0.5V7.5H0.5M8.5 0.5V5.5" fill="none" stroke="#666"/></svg>
<div style="position:absolute;left:1432px;top:867px;width:7px;height:2px;background:#666;"></div>
<div style="position:absolute;left:1442px;top:868px;width:100px;height:1px;background:#a8a8a8;"></div>
<div style="position:absolute;left:1490px;top:862px;width:4px;height:12px;background:#666;"></div>
<div style="position:absolute;left:1546px;top:867px;width:9px;height:2px;background:#666;"></div>
<div style="position:absolute;left:1549.5px;top:863.5px;width:2px;height:9px;background:#666;"></div>
</body></html>
